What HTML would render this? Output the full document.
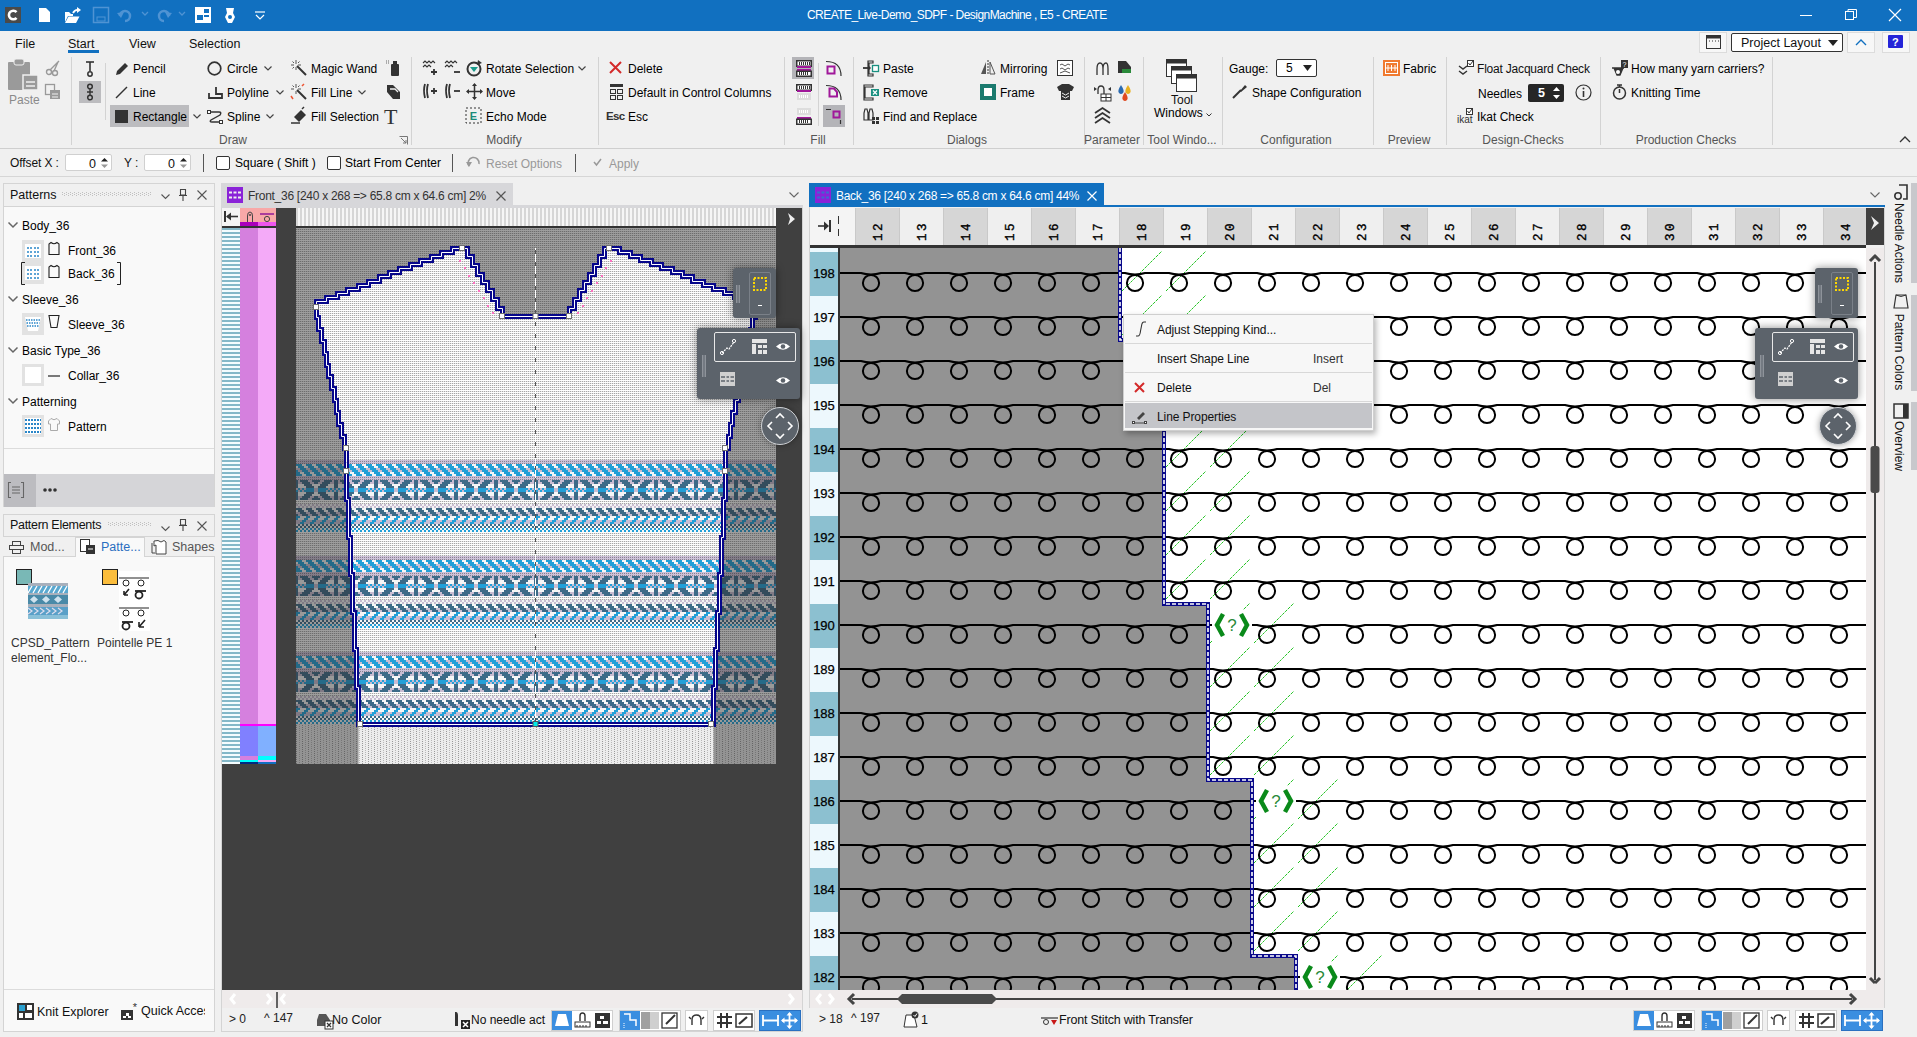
<!DOCTYPE html><html><head><meta charset="utf-8"><style>
html,body{margin:0;padding:0;width:1917px;height:1037px;overflow:hidden;background:#f0f0f0;font-family:"Liberation Sans",sans-serif;}
.t{position:absolute;white-space:nowrap;line-height:1;}
svg{overflow:visible}
</style></head><body><div style="position:relative;width:1917px;height:1037px;overflow:hidden"><div style="position:absolute;left:0px;top:0px;width:1917px;height:31px;background:#1170c0"></div>
<div style="position:absolute;left:5px;top:7px;width:16px;height:16px;background:#4a4a4a"></div>
<svg style="position:absolute;left:5px;top:7px;" width="16" height="16" viewBox="0 0 16 16"><path d="M11.5 5.2 A4.3 4.3 0 1 0 11.5 10.8" fill="none" stroke="#fff" stroke-width="2.6"/></svg>
<svg style="position:absolute;left:39px;top:8px;" width="12" height="15" viewBox="0 0 12 15"><path d="M0 0H7L11 4V14H0Z" fill="#fff"/></svg>
<svg style="position:absolute;left:64px;top:7px;" width="18" height="17" viewBox="0 0 18 17"><path d="M1 5H5L7 7H9V9H4L1 15Z" fill="#fff"/><path d="M4.5 9.5H15.5L12 16H1Z" fill="#fff"/><path d="M9 6Q11 2 15 3" stroke="#fff" stroke-width="1.8" fill="none"/><path d="M13 0L17 3L13 6Z" fill="#fff"/></svg>
<svg style="position:absolute;left:93px;top:7px;" width="16" height="16" viewBox="0 0 16 16"><rect x="0.5" y="0.5" width="15" height="15" fill="none" stroke="#4f93d3" stroke-width="1.5"/><rect x="4" y="10" width="8" height="4" fill="none" stroke="#4f93d3"/></svg>
<svg style="position:absolute;left:117px;top:8px;" width="18" height="14" viewBox="0 0 18 14"><path d="M3 8 A5 5 0 1 1 8 13" fill="none" stroke="#4f93d3" stroke-width="2.5"/><path d="M0 5L4 10L7 4Z" fill="#4f93d3"/></svg>
<svg style="position:absolute;left:141px;top:11px;" width="8" height="6" viewBox="0 0 8 6"><path d="M1 1L4 4L7 1" fill="none" stroke="#4f93d3" stroke-width="1.3"/></svg>
<svg style="position:absolute;left:154px;top:8px;" width="18" height="14" viewBox="0 0 18 14"><path d="M15 8 A5 5 0 1 0 10 13" fill="none" stroke="#4f93d3" stroke-width="2.5"/><path d="M18 5L14 10L11 4Z" fill="#4f93d3"/></svg>
<svg style="position:absolute;left:178px;top:11px;" width="8" height="6" viewBox="0 0 8 6"><path d="M1 1L4 4L7 1" fill="none" stroke="#4f93d3" stroke-width="1.3"/></svg>
<svg style="position:absolute;left:195px;top:7px;" width="16" height="16" viewBox="0 0 16 16"><rect width="16" height="16" fill="#fff"/><rect x="9" y="2" width="5" height="4" fill="#1170c0"/><rect x="2" y="8" width="6" height="5" fill="#1170c0"/><rect x="9" y="8" width="5" height="2" fill="#1170c0"/></svg>
<svg style="position:absolute;left:224px;top:7px;" width="12" height="17" viewBox="0 0 12 17"><path d="M2 1H10L9 6L11 10L8 16H4L1 10L3 6Z" fill="#fff"/><circle cx="6" cy="10" r="2" fill="#1170c0"/></svg>
<svg style="position:absolute;left:254px;top:11px;" width="12" height="10" viewBox="0 0 12 10"><path d="M1 1H11" stroke="#fff" stroke-width="1.2"/><path d="M2 4L6 8L10 4" fill="none" stroke="#fff" stroke-width="1.2"/></svg>
<div class="t" style="left:807px;top:9px;font-size:12px;color:#fff;letter-spacing:-0.55px">CREATE_Live-Demo_SDPF - DesignMachine , E5 - CREATE</div>
<div style="position:absolute;left:1800px;top:15px;width:12px;height:1px;background:#fff"></div>
<svg style="position:absolute;left:1845px;top:9px;" width="12" height="12" viewBox="0 0 12 12"><rect x="0.5" y="2.5" width="8" height="8" fill="none" stroke="#fff"/><path d="M3 2.5V0.5H11.5V8.5H9" fill="none" stroke="#fff"/></svg>
<svg style="position:absolute;left:1889px;top:9px;" width="12" height="12" viewBox="0 0 12 12"><path d="M0 0L12 12M12 0L0 12" stroke="#fff" stroke-width="1.2"/></svg>
<div style="position:absolute;left:0px;top:31px;width:1917px;height:117px;background:#f0f0f0"></div>
<div style="position:absolute;left:0px;top:148px;width:1917px;height:1px;background:#cfcfcf"></div>
<div class="t" style="left:15px;top:38px;font-size:12.5px;color:#111;">File</div>
<div class="t" style="left:68px;top:38px;font-size:12.5px;color:#111;">Start</div>
<div style="position:absolute;left:68px;top:50px;width:31px;height:3px;background:#1170c0"></div>
<div class="t" style="left:129px;top:38px;font-size:12.5px;color:#111;">View</div>
<div class="t" style="left:189px;top:38px;font-size:12.5px;color:#111;">Selection</div>
<div style="position:absolute;left:71px;top:57px;width:1px;height:88px;background:#d3d3d3"></div>
<div style="position:absolute;left:411px;top:57px;width:1px;height:88px;background:#d3d3d3"></div>
<div style="position:absolute;left:598px;top:57px;width:1px;height:88px;background:#d3d3d3"></div>
<div style="position:absolute;left:784px;top:57px;width:1px;height:88px;background:#d3d3d3"></div>
<div style="position:absolute;left:853px;top:57px;width:1px;height:88px;background:#d3d3d3"></div>
<div style="position:absolute;left:1084px;top:57px;width:1px;height:88px;background:#d3d3d3"></div>
<div style="position:absolute;left:1143px;top:57px;width:1px;height:88px;background:#d3d3d3"></div>
<div style="position:absolute;left:1222px;top:57px;width:1px;height:88px;background:#d3d3d3"></div>
<div style="position:absolute;left:1373px;top:57px;width:1px;height:88px;background:#d3d3d3"></div>
<div style="position:absolute;left:1446px;top:57px;width:1px;height:88px;background:#d3d3d3"></div>
<div style="position:absolute;left:1600px;top:57px;width:1px;height:88px;background:#d3d3d3"></div>
<div style="position:absolute;left:1772px;top:57px;width:1px;height:88px;background:#d3d3d3"></div>
<div style="position:absolute;left:105px;top:63px;width:1px;height:57px;background:#d3d3d3"></div>
<div style="position:absolute;left:818px;top:63px;width:1px;height:63px;background:#d3d3d3"></div>
<div class="t" style="left:133px;width:200px;text-align:center;top:134px;font-size:12px;color:#555">Draw</div>
<div class="t" style="left:404px;width:200px;text-align:center;top:134px;font-size:12px;color:#555">Modify</div>
<div class="t" style="left:718px;width:200px;text-align:center;top:134px;font-size:12px;color:#555">Fill</div>
<div class="t" style="left:867px;width:200px;text-align:center;top:134px;font-size:12px;color:#555">Dialogs</div>
<div class="t" style="left:1012px;width:200px;text-align:center;top:134px;font-size:12px;color:#555">Parameter</div>
<div class="t" style="left:1082px;width:200px;text-align:center;top:134px;font-size:12px;color:#555">Tool Windo...</div>
<div class="t" style="left:1196px;width:200px;text-align:center;top:134px;font-size:12px;color:#555">Configuration</div>
<div class="t" style="left:1309px;width:200px;text-align:center;top:134px;font-size:12px;color:#555">Preview</div>
<div class="t" style="left:1423px;width:200px;text-align:center;top:134px;font-size:12px;color:#555">Design-Checks</div>
<div class="t" style="left:1586px;width:200px;text-align:center;top:134px;font-size:12px;color:#555">Production Checks</div>
<svg style="position:absolute;left:399px;top:136px;" width="9" height="9" viewBox="0 0 9 9"><path d="M0.5 0.5H8.5V8.5" fill="none" stroke="#777"/><path d="M2 2L7 7M7 4V7H4" fill="none" stroke="#777"/></svg>
<svg style="position:absolute;left:1899px;top:136px;" width="12" height="7" viewBox="0 0 12 7"><path d="M1 6L6 1L11 6" fill="none" stroke="#333" stroke-width="1.3"/></svg>
<svg style="position:absolute;left:7px;top:58px;" width="34" height="34" viewBox="0 0 34 34"><rect x="1" y="4" width="22" height="28" rx="1" fill="#9a9a9a"/><rect x="7" y="1" width="10" height="6" rx="2" fill="#9a9a9a" stroke="#f0f0f0"/><rect x="16" y="17" width="15" height="15" fill="#9a9a9a" stroke="#f0f0f0" stroke-width="1.5"/><path d="M19 24H28M19 28H28" stroke="#f0f0f0" stroke-width="1.5"/></svg>
<div class="t" style="left:9px;top:94px;font-size:12px;color:#8a8a8a;">Paste</div>
<svg style="position:absolute;left:45px;top:60px;" width="16" height="16" viewBox="0 0 16 16"><circle cx="4" cy="12" r="2.5" fill="none" stroke="#999" stroke-width="1.4"/><circle cx="10" cy="13" r="2.5" fill="none" stroke="#999" stroke-width="1.4"/><path d="M5 10L14 1M9 11L13 2" stroke="#999" stroke-width="1.4"/></svg>
<svg style="position:absolute;left:45px;top:84px;" width="16" height="16" viewBox="0 0 16 16"><rect x="0.5" y="0.5" width="9" height="10" fill="none" stroke="#999" stroke-width="1.3"/><rect x="5" y="6" width="10" height="9" fill="#999"/><path d="M7 10H13M7 13H13" stroke="#f0f0f0"/></svg>
<svg style="position:absolute;left:84px;top:60px;" width="12" height="17" viewBox="0 0 12 17"><path d="M6 2V11" stroke="#333" stroke-width="1.6"/><path d="M2 2H10" stroke="#333" stroke-width="1.6"/><circle cx="6" cy="14" r="2.2" fill="none" stroke="#333" stroke-width="1.5"/></svg>
<div style="position:absolute;left:79px;top:81px;width:22px;height:22px;background:#bcbcbf"></div>
<svg style="position:absolute;left:84px;top:83px;" width="12" height="19" viewBox="0 0 12 19"><circle cx="6" cy="3.5" r="2.3" fill="none" stroke="#333" stroke-width="1.5"/><circle cx="6" cy="14.5" r="2.3" fill="none" stroke="#333" stroke-width="1.5"/><path d="M6 6V12M3 9H9" stroke="#333" stroke-width="1.4"/></svg>
<div style="position:absolute;left:110px;top:105px;width:79px;height:22px;background:#bcbcbf"></div>
<svg style="position:absolute;left:115px;top:62px;" width="14" height="14" viewBox="0 0 14 14"><path d="M1 13L2 9L10 1L13 4L5 12Z" fill="#333"/></svg>
<div class="t" style="left:133px;top:63px;font-size:12px;color:#000;">Pencil</div>
<svg style="position:absolute;left:115px;top:86px;" width="13" height="13" viewBox="0 0 13 13"><path d="M1 12L12 1" stroke="#333" stroke-width="1.5"/></svg>
<div class="t" style="left:133px;top:87px;font-size:12px;color:#000;">Line</div>
<div style="position:absolute;left:115px;top:110px;width:13px;height:13px;background:#333"></div>
<div class="t" style="left:133px;top:111px;font-size:12px;color:#000;">Rectangle</div>
<svg style="position:absolute;left:193px;top:114px;" width="8" height="5" viewBox="0 0 8 5"><path d="M0.5 0.5L4 4L7.5 0.5" fill="none" stroke="#444" stroke-width="1.2"/></svg>
<svg style="position:absolute;left:207px;top:61px;" width="15" height="15" viewBox="0 0 15 15"><circle cx="7.5" cy="7.5" r="6.3" fill="none" stroke="#333" stroke-width="1.7"/></svg>
<div class="t" style="left:227px;top:63px;font-size:12px;color:#000;">Circle</div>
<svg style="position:absolute;left:264px;top:66px;" width="8" height="5" viewBox="0 0 8 5"><path d="M0.5 0.5L4 4L7.5 0.5" fill="none" stroke="#444" stroke-width="1.2"/></svg>
<svg style="position:absolute;left:208px;top:85px;" width="15" height="14" viewBox="0 0 15 14"><path d="M1 8V13H14V9H8V2" fill="none" stroke="#333" stroke-width="1.8"/></svg>
<div class="t" style="left:227px;top:87px;font-size:12px;color:#000;">Polyline</div>
<svg style="position:absolute;left:276px;top:90px;" width="8" height="5" viewBox="0 0 8 5"><path d="M0.5 0.5L4 4L7.5 0.5" fill="none" stroke="#444" stroke-width="1.2"/></svg>
<svg style="position:absolute;left:207px;top:109px;" width="16" height="15" viewBox="0 0 16 15"><path d="M3 3H12Q15 3 13 6L4 11Q2 13 5 13H14" fill="none" stroke="#333" stroke-width="1.4"/><rect x="0.5" y="1.5" width="3" height="3" fill="#fff" stroke="#333"/><rect x="12.5" y="11.5" width="3" height="3" fill="#fff" stroke="#333"/></svg>
<div class="t" style="left:227px;top:111px;font-size:12px;color:#000;">Spline</div>
<svg style="position:absolute;left:266px;top:114px;" width="8" height="5" viewBox="0 0 8 5"><path d="M0.5 0.5L4 4L7.5 0.5" fill="none" stroke="#444" stroke-width="1.2"/></svg>
<svg style="position:absolute;left:291px;top:60px;" width="16" height="16" viewBox="0 0 16 16"><path d="M6 6L15 15" stroke="#333" stroke-width="2"/><path d="M5 0V4M5 7V10M0 5H3M7 5H10M1.5 1.5L3 3M8.5 1.5L7 3M1.5 8.5L3 7" stroke="#555" stroke-width="1"/></svg>
<div class="t" style="left:311px;top:63px;font-size:12px;color:#000;">Magic Wand</div>
<svg style="position:absolute;left:385px;top:60px;" width="17" height="17" viewBox="0 0 17 17"><rect x="6" y="4" width="8" height="12" rx="1" fill="#333"/><rect x="8" y="1" width="4" height="4" fill="#333"/><path d="M1 1H5M1 3H4" stroke="#666" stroke-dasharray="1 1"/></svg>
<svg style="position:absolute;left:291px;top:84px;" width="16" height="16" viewBox="0 0 16 16"><path d="M6 6L15 15" stroke="#333" stroke-width="2"/><path d="M5 0V4M5 7V10M0 5H3M7 5H10M1.5 1.5L3 3M8.5 1.5L7 3" stroke="#555" stroke-width="1"/><path d="M0 12L2 15M13 0L11 2" stroke="#e53" stroke-width="1.5"/></svg>
<div class="t" style="left:311px;top:87px;font-size:12px;color:#000;">Fill Line</div>
<svg style="position:absolute;left:358px;top:90px;" width="8" height="5" viewBox="0 0 8 5"><path d="M0.5 0.5L4 4L7.5 0.5" fill="none" stroke="#444" stroke-width="1.2"/></svg>
<svg style="position:absolute;left:385px;top:84px;" width="17" height="17" viewBox="0 0 17 17"><path d="M2 1H8L15 8V15H8L2 8Z" fill="#333"/><path d="M5 5H10L13 8" stroke="#f0f0f0" stroke-width="1.3" fill="none"/></svg>
<svg style="position:absolute;left:291px;top:107px;" width="17" height="17" viewBox="0 0 17 17"><path d="M3 10L10 3L15 8L8 15Z" fill="#333"/><path d="M0 16H9" stroke="#333" stroke-width="1.5"/><path d="M11 2L13 0" stroke="#333" stroke-width="1.5"/></svg>
<div class="t" style="left:311px;top:111px;font-size:12px;color:#000;">Fill Selection</div>
<div class="t" style="left:384px;top:106px;font-size:22px;color:#333;font-family:'Liberation Serif',serif">T</div>
<svg style="position:absolute;left:422px;top:59px;" width="17" height="17" viewBox="0 0 17 17"><path d="M1 4L3 2L5 4L7 2L9 4L11 2L13 4M1 8L3 6L5 8L7 6L9 8" fill="none" stroke="#333" stroke-width="1.1"/><path d="M12 10V16M9 13H15" stroke="#333" stroke-width="1.8"/></svg>
<svg style="position:absolute;left:444px;top:59px;" width="17" height="17" viewBox="0 0 17 17"><path d="M1 4L3 2L5 4L7 2L9 4L11 2L13 4M1 8L3 6L5 8L7 6L9 8" fill="none" stroke="#333" stroke-width="1.1"/><path d="M10 13H16" stroke="#333" stroke-width="1.8"/></svg>
<svg style="position:absolute;left:466px;top:60px;" width="17" height="17" viewBox="0 0 17 17"><circle cx="8" cy="9" r="6.5" fill="none" stroke="#333" stroke-width="2"/><path d="M4 7H12L8 12Z" fill="#1a9a8a"/><path d="M12 0L16 3L11 5Z" fill="#333"/></svg>
<div class="t" style="left:486px;top:63px;font-size:12px;color:#000;">Rotate Selection</div>
<svg style="position:absolute;left:578px;top:66px;" width="8" height="5" viewBox="0 0 8 5"><path d="M0.5 0.5L4 4L7.5 0.5" fill="none" stroke="#444" stroke-width="1.2"/></svg>
<svg style="position:absolute;left:422px;top:82px;" width="17" height="18" viewBox="0 0 17 18"><path d="M3 2Q1 8 3 16M6 2Q4 8 6 16" fill="none" stroke="#333" stroke-width="1.8"/><path d="M12 6V12M9 9H15" stroke="#333" stroke-width="1.8"/></svg>
<svg style="position:absolute;left:444px;top:82px;" width="17" height="18" viewBox="0 0 17 18"><path d="M3 2Q1 8 3 16M6 2Q4 8 6 16" fill="none" stroke="#333" stroke-width="1.8"/><path d="M10 9H16" stroke="#333" stroke-width="1.8"/></svg>
<svg style="position:absolute;left:466px;top:83px;" width="17" height="17" viewBox="0 0 17 17"><path d="M8.5 1V16M1 8.5H16" stroke="#333" stroke-width="1.5"/><path d="M8.5 0L6 3H11ZM8.5 17L6 14H11ZM0 8.5L3 6V11ZM17 8.5L14 6V11Z" fill="#333"/></svg>
<div class="t" style="left:486px;top:87px;font-size:12px;color:#000;">Move</div>
<svg style="position:absolute;left:465px;top:107px;" width="17" height="17" viewBox="0 0 17 17"><rect x="1" y="1" width="15" height="15" fill="none" stroke="#333" stroke-dasharray="2 2"/><text x="8.5" y="13" font-size="11" font-family="Liberation Sans" font-weight="bold" fill="#1a8a7a" text-anchor="middle">E</text></svg>
<div class="t" style="left:486px;top:111px;font-size:12px;color:#000;">Echo Mode</div>
<svg style="position:absolute;left:609px;top:61px;" width="13" height="13" viewBox="0 0 13 13"><path d="M1 1L12 12M12 1L1 12" stroke="#d42a2a" stroke-width="2"/></svg>
<div class="t" style="left:628px;top:63px;font-size:12px;color:#000;">Delete</div>
<svg style="position:absolute;left:610px;top:84px;" width="13" height="16" viewBox="0 0 13 16"><rect x="0" y="0" width="13" height="3" fill="#333"/><rect x="0.5" y="5.5" width="5" height="4" fill="none" stroke="#333"/><rect x="7.5" y="5.5" width="5" height="4" fill="none" stroke="#333"/><rect x="0.5" y="11.5" width="5" height="4" fill="none" stroke="#333"/><rect x="7.5" y="11.5" width="5" height="4" fill="none" stroke="#333"/></svg>
<div class="t" style="left:628px;top:87px;font-size:12px;color:#000;">Default in Control Columns</div>
<div class="t" style="left:606px;top:111px;font-size:11.5px;color:#333;font-weight:bold;letter-spacing:-0.6px">Esc</div>
<div class="t" style="left:628px;top:111px;font-size:12px;color:#000;">Esc</div>
<div style="position:absolute;left:792px;top:57px;width:22px;height:22px;background:#b4b4b8"></div>
<svg style="position:absolute;left:796px;top:60px;" width="16" height="8" viewBox="0 0 16 8"><rect x="0.75" y="0.75" width="14.5" height="5.5" fill="#fff" stroke="#333" stroke-width="1.5"/><path d="M3.5 2V5" stroke="#333"/><path d="M5.5 2V5" stroke="#333"/><path d="M7.5 2V5" stroke="#333"/><path d="M9.5 2V5" stroke="#333"/><path d="M11.5 2V5" stroke="#333"/><path d="M13.5 2V5" stroke="#333"/><rect x="1" y="6" width="14" height="2" fill="#a0189a"/></svg>
<svg style="position:absolute;left:796px;top:69px;" width="16" height="8" viewBox="0 0 16 8"><rect x="1" y="0" width="14" height="2" fill="#a0189a"/><rect x="0.75" y="2.25" width="14.5" height="5" fill="#fff" stroke="#333" stroke-width="1.5"/><path d="M3.5 3V6M5.5 3V6M7.5 3V6M9.5 3V6M11.5 3V6" stroke="#333"/></svg>
<svg style="position:absolute;left:796px;top:84px;" width="16" height="8" viewBox="0 0 16 8"><rect x="0.75" y="0.75" width="14.5" height="5.5" fill="#fff" stroke="#333" stroke-width="1.5"/><path d="M3.5 2V5" stroke="#333"/><path d="M5.5 2V5" stroke="#333"/><path d="M7.5 2V5" stroke="#333"/><path d="M9.5 2V5" stroke="#333"/><path d="M11.5 2V5" stroke="#333"/><path d="M13.5 2V5" stroke="#333"/><rect x="1" y="6" width="14" height="2" fill="#a0189a"/></svg>
<svg style="position:absolute;left:796px;top:93px;" width="16" height="7" viewBox="0 0 16 7"><rect x="1" y="0" width="14" height="7" fill="#ddd"/><path d="M3.5 2V5M5.5 2V5M7.5 2V5M9.5 2V5M11.5 2V5" stroke="#fff"/></svg>
<svg style="position:absolute;left:796px;top:108px;" width="16" height="7" viewBox="0 0 16 7"><rect x="1" y="0" width="14" height="7" fill="#ddd"/><path d="M3.5 2V5M5.5 2V5M7.5 2V5M9.5 2V5M11.5 2V5" stroke="#fff"/></svg>
<svg style="position:absolute;left:796px;top:117px;" width="16" height="8" viewBox="0 0 16 8"><rect x="1" y="0" width="14" height="2" fill="#a0189a"/><rect x="0.75" y="2.25" width="14.5" height="5" fill="#fff" stroke="#333" stroke-width="1.5"/><path d="M3.5 3V6M5.5 3V6M7.5 3V6M9.5 3V6M11.5 3V6" stroke="#333"/></svg>
<svg style="position:absolute;left:826px;top:61px;" width="16" height="16" viewBox="0 0 16 16"><path d="M0 0.5Q15 0.5 15 15" fill="none" stroke="#333" stroke-width="1.2"/><rect x="1.5" y="5.5" width="7" height="7" fill="none" stroke="#a0189a" stroke-width="2"/></svg>
<svg style="position:absolute;left:826px;top:85px;" width="16" height="16" viewBox="0 0 16 16"><path d="M0 0.5Q15 0.5 15 15" fill="none" stroke="#333" stroke-width="1.2"/><path d="M3.5 3.5H8L11 7V11.5H3.5Z" fill="none" stroke="#a0189a" stroke-width="2"/></svg>
<div style="position:absolute;left:823px;top:105px;width:22px;height:22px;background:#b4b4b8"></div>
<svg style="position:absolute;left:826px;top:108px;" width="16" height="16" viewBox="0 0 16 16"><path d="M0 1.5H5M14.5 12V16" stroke="#333" stroke-width="1.2"/><rect x="7.5" y="3.5" width="6" height="6" fill="none" stroke="#a0189a" stroke-width="2"/></svg>
<svg style="position:absolute;left:863px;top:60px;" width="17" height="17" viewBox="0 0 17 17"><path d="M5 1H10V3H6V14H10V16H5Z" fill="none" stroke="#333" stroke-width="1.2"/><path d="M0 8H6" stroke="#333" stroke-width="1.8"/><path d="M5 5L8 8L5 11Z" fill="#333"/><rect x="9.5" y="5.5" width="6" height="6" fill="#fff" stroke="#1a9080" stroke-width="1.3"/></svg>
<div class="t" style="left:883px;top:63px;font-size:12px;color:#000;">Paste</div>
<svg style="position:absolute;left:863px;top:84px;" width="17" height="17" viewBox="0 0 17 17"><path d="M5 1H10V3H2V14H10V16H1V1Z" fill="none" stroke="#333" stroke-width="1.2"/><rect x="8" y="5" width="8" height="7" fill="#1a9080"/><path d="M10 6.5L14 10.5M14 6.5L10 10.5" stroke="#fff" stroke-width="1.2"/></svg>
<div class="t" style="left:883px;top:87px;font-size:12px;color:#000;">Remove</div>
<svg style="position:absolute;left:863px;top:108px;" width="17" height="17" viewBox="0 0 17 17"><path d="M1 12V5L2 1H4L5 5V12ZM6 12V5L7 1H9L10 5V12Z" fill="none" stroke="#333" stroke-width="1.2"/><rect x="9" y="9" width="3" height="3" fill="#333"/><rect x="13" y="9" width="3" height="3" fill="#333"/><rect x="9" y="13" width="3" height="3" fill="#333"/><rect x="13" y="13" width="3" height="3" fill="#333"/></svg>
<div class="t" style="left:883px;top:111px;font-size:12px;color:#000;">Find and Replace</div>
<svg style="position:absolute;left:980px;top:60px;" width="16" height="15" viewBox="0 0 16 15"><path d="M6 2V14H1Z" fill="#555"/><path d="M8 0V15" stroke="#333" stroke-dasharray="2 1"/><path d="M10 2V14H15Z" fill="none" stroke="#555"/></svg>
<div class="t" style="left:1000px;top:63px;font-size:12px;color:#000;">Mirroring</div>
<svg style="position:absolute;left:1057px;top:60px;" width="16" height="16" viewBox="0 0 16 16"><rect x="0.5" y="0.5" width="15" height="15" fill="#fff" stroke="#333"/><path d="M3 5L5 4L8 6L11 4L13 5M3 9L5 8L8 10L11 8L13 9M3 13L8 11L13 13" fill="none" stroke="#555"/></svg>
<svg style="position:absolute;left:980px;top:84px;" width="16" height="16" viewBox="0 0 16 16"><rect x="0" y="0" width="16" height="16" fill="#1a7a6e"/><rect x="4" y="4" width="8" height="8" fill="#fff"/></svg>
<div class="t" style="left:1000px;top:87px;font-size:12px;color:#000;">Frame</div>
<svg style="position:absolute;left:1057px;top:84px;" width="17" height="16" viewBox="0 0 17 16"><path d="M0 3L5 0H12L17 3L15 7H13V16H4V7H2Z" fill="#333"/><path d="M5 9L8.5 11L12 9M5 12L8.5 14L12 12" stroke="#f0f0f0" fill="none"/></svg>
<svg style="position:absolute;left:1095px;top:60px;" width="15" height="16" viewBox="0 0 15 16"><path d="M2 15V9Q2 3 5 3Q8 3 8 9V15M8 15V9Q8 3 11 3Q13 3 13 9V15" fill="none" stroke="#333" stroke-width="1.3"/></svg>
<svg style="position:absolute;left:1116px;top:60px;" width="17" height="16" viewBox="0 0 17 16"><path d="M2 1H10L15 7V13H2Z" fill="#333"/><rect x="6" y="9" width="9" height="4" fill="#2a8a3a"/></svg>
<svg style="position:absolute;left:1094px;top:84px;" width="18" height="18" viewBox="0 0 18 18"><path d="M4 10V6Q4 2 7 2Q10 2 10 6V10" fill="none" stroke="#333" stroke-width="1.3"/><rect x="7" y="10" width="10" height="7" fill="#fff" stroke="#333"/><path d="M7 13.5H17M12 10V17" stroke="#333"/><path d="M0 3L3 5L0 7M17 3L14 5L17 7" fill="#333"/></svg>
<svg style="position:absolute;left:1116px;top:84px;" width="17" height="18" viewBox="0 0 17 18"><path d="M5 1Q1 7 3 9Q5 11 7 9Q9 7 5 1Z" fill="#2a6ab0"/><path d="M12 1Q8 7 10 9Q12 11 14 9Q16 7 12 1Z" fill="#e8b020"/><path d="M9 8Q5 14 7 16Q9 18 11 16Q13 14 9 8Z" fill="#e04a20"/></svg>
<svg style="position:absolute;left:1094px;top:107px;" width="17" height="17" viewBox="0 0 17 17"><path d="M1 6L8.5 1L16 6M1 11L8.5 6L16 11M1 16L8.5 11L16 16" fill="none" stroke="#333" stroke-width="1.8"/></svg>
<svg style="position:absolute;left:1166px;top:59px;" width="31" height="33" viewBox="0 0 31 33"><rect x="0.5" y="0.5" width="20" height="17" fill="#fff" stroke="#333"/><rect x="0.5" y="0.5" width="20" height="4" fill="#333"/><rect x="5.5" y="7.5" width="20" height="17" fill="#fff" stroke="#333"/><rect x="5.5" y="7.5" width="20" height="4" fill="#333"/><rect x="10.5" y="15.5" width="20" height="17" fill="#fff" stroke="#333"/><rect x="10.5" y="15.5" width="20" height="4" fill="#333"/></svg>
<div class="t" style="left:1132px;width:100px;text-align:center;top:94px;font-size:12px;color:#111">Tool</div>
<div class="t" style="left:1154px;top:107px;font-size:12px;color:#000;">Windows</div>
<svg style="position:absolute;left:1206px;top:113px;" width="6" height="4" viewBox="0 0 6 4"><path d="M0.5 0.5L3 3L5.5 0.5" fill="none" stroke="#333"/></svg>
<div class="t" style="left:1229px;top:63px;font-size:12px;color:#000;">Gauge:</div>
<div style="position:absolute;left:1276px;top:59px;width:41px;height:18px;background:#fff;border:1px solid #333;box-sizing:border-box;border-radius:2px"></div>
<div class="t" style="left:1286px;top:62px;font-size:12px;color:#000;">5</div>
<svg style="position:absolute;left:1303px;top:65px;" width="9" height="6" viewBox="0 0 9 6"><path d="M0 0H9L4.5 6Z" fill="#222"/></svg>
<svg style="position:absolute;left:1232px;top:84px;" width="15" height="15" viewBox="0 0 15 15"><path d="M1 14L9 6" stroke="#333" stroke-width="2"/><path d="M8 7L13 1L15 3L9 8Z" fill="#333"/></svg>
<div class="t" style="left:1252px;top:87px;font-size:12px;color:#000;">Shape Configuration</div>
<svg style="position:absolute;left:1383px;top:60px;" width="17" height="16" viewBox="0 0 17 16"><rect width="17" height="16" fill="#f07a30"/><rect x="2.5" y="2.5" width="12" height="11" fill="none" stroke="#fff"/><path d="M5 5V11M8.5 5V11M12 5V11M3 8H14" stroke="#fff" stroke-width="1"/></svg>
<div class="t" style="left:1403px;top:63px;font-size:12px;color:#000;">Fabric</div>
<svg style="position:absolute;left:1458px;top:60px;" width="16" height="16" viewBox="0 0 16 16"><path d="M1 6L5 9L9 6M1 11L5 14L9 11" fill="none" stroke="#333" stroke-width="1.4"/><rect x="9.5" y="0.5" width="6" height="6" fill="#fff" stroke="#333"/><path d="M10.5 3L12 5L15 1" fill="none" stroke="#333"/></svg>
<div class="t" style="left:1477px;top:63px;font-size:12px;color:#111;letter-spacing:-0.2px">Float Jacquard Check</div>
<div class="t" style="left:1478px;top:88px;font-size:12px;color:#000;">Needles</div>
<div style="position:absolute;left:1528px;top:84px;width:36px;height:18px;background:#262626;border-radius:2px"></div>
<div class="t" style="left:1538px;top:87px;font-size:12.5px;color:#fff;font-weight:bold">5</div>
<svg style="position:absolute;left:1553px;top:87px;" width="7" height="12" viewBox="0 0 7 12"><path d="M0 4L3.5 0L7 4ZM0 8L3.5 12L7 8Z" fill="#fff"/></svg>
<svg style="position:absolute;left:1575px;top:84px;" width="17" height="17" viewBox="0 0 17 17"><circle cx="8.5" cy="8.5" r="7.5" fill="none" stroke="#333" stroke-width="1.2"/><path d="M8.5 7V13" stroke="#333" stroke-width="1.6"/><circle cx="8.5" cy="4.5" r="1" fill="#333"/></svg>
<svg style="position:absolute;left:1457px;top:108px;" width="17" height="16" viewBox="0 0 17 16"><text x="0" y="15" font-size="10" font-family="Liberation Sans" fill="#333">ikat</text><rect x="9.5" y="0.5" width="6" height="6" fill="#fff" stroke="#333"/><path d="M10.5 3L12 5L15 1" fill="none" stroke="#333"/></svg>
<div class="t" style="left:1477px;top:111px;font-size:12px;color:#000;">Ikat Check</div>
<svg style="position:absolute;left:1612px;top:60px;" width="16" height="16" viewBox="0 0 16 16"><path d="M0 8H12M2 8L5 15H8L11 8" fill="#333" stroke="#333" stroke-width="1.3"/><rect x="9" y="0" width="7" height="8" fill="#333"/><text x="12.5" y="7" font-size="7" fill="#fff" text-anchor="middle" font-family="Liberation Sans">?</text><circle cx="6" cy="12" r="2" fill="#fff"/></svg>
<div class="t" style="left:1631px;top:63px;font-size:12px;color:#000;">How many yarn carriers?</div>
<svg style="position:absolute;left:1612px;top:84px;" width="15" height="16" viewBox="0 0 15 16"><circle cx="7.5" cy="9" r="6" fill="none" stroke="#333" stroke-width="1.5"/><path d="M5 1H10M7.5 1V3M7.5 9V5" stroke="#333" stroke-width="1.5"/></svg>
<div class="t" style="left:1631px;top:87px;font-size:12px;color:#000;">Knitting Time</div>
<div style="position:absolute;left:1699px;top:32px;width:28px;height:21px;background:#f7f7f7;border:1px solid #dcdcdc;box-sizing:border-box"></div>
<svg style="position:absolute;left:1706px;top:35px;" width="15" height="14" viewBox="0 0 15 14"><rect x="0.5" y="0.5" width="14" height="13" fill="none" stroke="#333"/><rect x="0.5" y="0.5" width="14" height="3" fill="#333"/><path d="M3 6H4M6 6H7M9 6H10M12 6H13" stroke="#333"/></svg>
<div style="position:absolute;left:1731px;top:33px;width:112px;height:19px;background:#fff;border:1px solid #333;box-sizing:border-box;border-radius:2px"></div>
<div class="t" style="left:1741px;top:37px;font-size:12.5px;color:#111;">Project Layout</div>
<svg style="position:absolute;left:1828px;top:40px;" width="10" height="6" viewBox="0 0 10 6"><path d="M0 0H10L5 6Z" fill="#222"/></svg>
<div style="position:absolute;left:1847px;top:32px;width:28px;height:21px;background:#f7f7f7;border:1px solid #dcdcdc;box-sizing:border-box"></div>
<svg style="position:absolute;left:1855px;top:39px;" width="12" height="7" viewBox="0 0 12 7"><path d="M1 6L6 1L11 6" fill="none" stroke="#1170c0" stroke-width="1.4"/></svg>
<div style="position:absolute;left:1882px;top:32px;width:28px;height:21px;background:#f7f7f7;border:1px solid #dcdcdc;box-sizing:border-box"></div>
<div style="position:absolute;left:1888px;top:35px;width:15px;height:13px;background:#2424d8;border-radius:1px"></div>
<div class="t" style="left:1892px;top:37px;font-size:11px;color:#fff;font-weight:bold">?</div>
<div style="position:absolute;left:0px;top:176px;width:1917px;height:1px;background:#d6d6d6"></div>
<div class="t" style="left:10px;top:157px;font-size:12px;color:#111;letter-spacing:-0.1px">Offset X :</div>
<div style="position:absolute;left:65px;top:154px;width:47px;height:17px;background:#fff;border:1px solid #d0d0d0;box-sizing:border-box;border-radius:2px"></div>
<div class="t" style="left:89px;top:158px;font-size:12.5px;color:#111;">0</div>
<svg style="position:absolute;left:101px;top:158px;" width="7" height="10" viewBox="0 0 7 10"><path d="M0 3.5L3.5 0L7 3.5Z" fill="#222"/><path d="M0 6.5L3.5 10L7 6.5Z" fill="#999"/></svg>
<div class="t" style="left:124px;top:157px;font-size:12px;color:#111;">Y :</div>
<div style="position:absolute;left:144px;top:154px;width:47px;height:17px;background:#fff;border:1px solid #d0d0d0;box-sizing:border-box;border-radius:2px"></div>
<div class="t" style="left:168px;top:158px;font-size:12.5px;color:#111;">0</div>
<svg style="position:absolute;left:180px;top:158px;" width="7" height="10" viewBox="0 0 7 10"><path d="M0 3.5L3.5 0L7 3.5Z" fill="#222"/><path d="M0 6.5L3.5 10L7 6.5Z" fill="#999"/></svg>
<div style="position:absolute;left:203px;top:154px;width:1px;height:18px;background:#555"></div>
<div style="position:absolute;left:216px;top:156px;width:14px;height:14px;background:#fff;border:1px solid #333;box-sizing:border-box;border-radius:2px"></div>
<div class="t" style="left:235px;top:157px;font-size:12px;color:#000;">Square ( Shift )</div>
<div style="position:absolute;left:327px;top:156px;width:14px;height:14px;background:#fff;border:1px solid #333;box-sizing:border-box;border-radius:2px"></div>
<div class="t" style="left:345px;top:157px;font-size:12px;color:#000;">Start From Center</div>
<div style="position:absolute;left:452px;top:154px;width:1px;height:18px;background:#555"></div>
<svg style="position:absolute;left:466px;top:156px;" width="16" height="12" viewBox="0 0 16 12"><path d="M3 10 A5.5 5.5 0 1 1 13 8" fill="none" stroke="#999" stroke-width="1.6"/><path d="M0 6L3 11L6 6Z" fill="#999"/></svg>
<div class="t" style="left:486px;top:158px;font-size:12px;color:#999;">Reset Options</div>
<div style="position:absolute;left:575px;top:154px;width:1px;height:18px;background:#555"></div>
<svg style="position:absolute;left:593px;top:158px;" width="9" height="8" viewBox="0 0 9 8"><path d="M1 4L3.5 7L8 1" fill="none" stroke="#999" stroke-width="1.5"/></svg>
<div class="t" style="left:609px;top:158px;font-size:12px;color:#999;">Apply</div>
<div style="position:absolute;left:3px;top:183px;width:212px;height:324px;background:#f9f9f9;border:1px solid #d4d4d4;box-sizing:border-box"></div>
<div style="position:absolute;left:3px;top:183px;width:212px;height:24px;background:#f0f0f0;border:1px solid #d4d4d4;box-sizing:border-box"></div>
<div class="t" style="left:10px;top:189px;font-size:12.5px;color:#111;">Patterns</div>
<svg style="position:absolute;left:62px;top:192px;" width="91" height="6" viewBox="0 0 91 6"><rect x="0" y="0" width="1" height="1" fill="#c0c0c0"/><rect x="0" y="2" width="1" height="1" fill="#c0c0c0"/><rect x="2" y="1" width="1" height="1" fill="#c0c0c0"/><rect x="2" y="3" width="1" height="1" fill="#c0c0c0"/><rect x="4" y="0" width="1" height="1" fill="#c0c0c0"/><rect x="4" y="2" width="1" height="1" fill="#c0c0c0"/><rect x="6" y="1" width="1" height="1" fill="#c0c0c0"/><rect x="6" y="3" width="1" height="1" fill="#c0c0c0"/><rect x="8" y="0" width="1" height="1" fill="#c0c0c0"/><rect x="8" y="2" width="1" height="1" fill="#c0c0c0"/><rect x="10" y="1" width="1" height="1" fill="#c0c0c0"/><rect x="10" y="3" width="1" height="1" fill="#c0c0c0"/><rect x="12" y="0" width="1" height="1" fill="#c0c0c0"/><rect x="12" y="2" width="1" height="1" fill="#c0c0c0"/><rect x="14" y="1" width="1" height="1" fill="#c0c0c0"/><rect x="14" y="3" width="1" height="1" fill="#c0c0c0"/><rect x="16" y="0" width="1" height="1" fill="#c0c0c0"/><rect x="16" y="2" width="1" height="1" fill="#c0c0c0"/><rect x="18" y="1" width="1" height="1" fill="#c0c0c0"/><rect x="18" y="3" width="1" height="1" fill="#c0c0c0"/><rect x="20" y="0" width="1" height="1" fill="#c0c0c0"/><rect x="20" y="2" width="1" height="1" fill="#c0c0c0"/><rect x="22" y="1" width="1" height="1" fill="#c0c0c0"/><rect x="22" y="3" width="1" height="1" fill="#c0c0c0"/><rect x="24" y="0" width="1" height="1" fill="#c0c0c0"/><rect x="24" y="2" width="1" height="1" fill="#c0c0c0"/><rect x="26" y="1" width="1" height="1" fill="#c0c0c0"/><rect x="26" y="3" width="1" height="1" fill="#c0c0c0"/><rect x="28" y="0" width="1" height="1" fill="#c0c0c0"/><rect x="28" y="2" width="1" height="1" fill="#c0c0c0"/><rect x="30" y="1" width="1" height="1" fill="#c0c0c0"/><rect x="30" y="3" width="1" height="1" fill="#c0c0c0"/><rect x="32" y="0" width="1" height="1" fill="#c0c0c0"/><rect x="32" y="2" width="1" height="1" fill="#c0c0c0"/><rect x="34" y="1" width="1" height="1" fill="#c0c0c0"/><rect x="34" y="3" width="1" height="1" fill="#c0c0c0"/><rect x="36" y="0" width="1" height="1" fill="#c0c0c0"/><rect x="36" y="2" width="1" height="1" fill="#c0c0c0"/><rect x="38" y="1" width="1" height="1" fill="#c0c0c0"/><rect x="38" y="3" width="1" height="1" fill="#c0c0c0"/><rect x="40" y="0" width="1" height="1" fill="#c0c0c0"/><rect x="40" y="2" width="1" height="1" fill="#c0c0c0"/><rect x="42" y="1" width="1" height="1" fill="#c0c0c0"/><rect x="42" y="3" width="1" height="1" fill="#c0c0c0"/><rect x="44" y="0" width="1" height="1" fill="#c0c0c0"/><rect x="44" y="2" width="1" height="1" fill="#c0c0c0"/><rect x="46" y="1" width="1" height="1" fill="#c0c0c0"/><rect x="46" y="3" width="1" height="1" fill="#c0c0c0"/><rect x="48" y="0" width="1" height="1" fill="#c0c0c0"/><rect x="48" y="2" width="1" height="1" fill="#c0c0c0"/><rect x="50" y="1" width="1" height="1" fill="#c0c0c0"/><rect x="50" y="3" width="1" height="1" fill="#c0c0c0"/><rect x="52" y="0" width="1" height="1" fill="#c0c0c0"/><rect x="52" y="2" width="1" height="1" fill="#c0c0c0"/><rect x="54" y="1" width="1" height="1" fill="#c0c0c0"/><rect x="54" y="3" width="1" height="1" fill="#c0c0c0"/><rect x="56" y="0" width="1" height="1" fill="#c0c0c0"/><rect x="56" y="2" width="1" height="1" fill="#c0c0c0"/><rect x="58" y="1" width="1" height="1" fill="#c0c0c0"/><rect x="58" y="3" width="1" height="1" fill="#c0c0c0"/><rect x="60" y="0" width="1" height="1" fill="#c0c0c0"/><rect x="60" y="2" width="1" height="1" fill="#c0c0c0"/><rect x="62" y="1" width="1" height="1" fill="#c0c0c0"/><rect x="62" y="3" width="1" height="1" fill="#c0c0c0"/><rect x="64" y="0" width="1" height="1" fill="#c0c0c0"/><rect x="64" y="2" width="1" height="1" fill="#c0c0c0"/><rect x="66" y="1" width="1" height="1" fill="#c0c0c0"/><rect x="66" y="3" width="1" height="1" fill="#c0c0c0"/><rect x="68" y="0" width="1" height="1" fill="#c0c0c0"/><rect x="68" y="2" width="1" height="1" fill="#c0c0c0"/><rect x="70" y="1" width="1" height="1" fill="#c0c0c0"/><rect x="70" y="3" width="1" height="1" fill="#c0c0c0"/><rect x="72" y="0" width="1" height="1" fill="#c0c0c0"/><rect x="72" y="2" width="1" height="1" fill="#c0c0c0"/><rect x="74" y="1" width="1" height="1" fill="#c0c0c0"/><rect x="74" y="3" width="1" height="1" fill="#c0c0c0"/><rect x="76" y="0" width="1" height="1" fill="#c0c0c0"/><rect x="76" y="2" width="1" height="1" fill="#c0c0c0"/><rect x="78" y="1" width="1" height="1" fill="#c0c0c0"/><rect x="78" y="3" width="1" height="1" fill="#c0c0c0"/><rect x="80" y="0" width="1" height="1" fill="#c0c0c0"/><rect x="80" y="2" width="1" height="1" fill="#c0c0c0"/><rect x="82" y="1" width="1" height="1" fill="#c0c0c0"/><rect x="82" y="3" width="1" height="1" fill="#c0c0c0"/><rect x="84" y="0" width="1" height="1" fill="#c0c0c0"/><rect x="84" y="2" width="1" height="1" fill="#c0c0c0"/><rect x="86" y="1" width="1" height="1" fill="#c0c0c0"/><rect x="86" y="3" width="1" height="1" fill="#c0c0c0"/><rect x="88" y="0" width="1" height="1" fill="#c0c0c0"/><rect x="88" y="2" width="1" height="1" fill="#c0c0c0"/></svg>
<svg style="position:absolute;left:161px;top:194px;" width="9" height="5" viewBox="0 0 9 5"><path d="M0.5 0.5L4.5 4.5L8.5 0.5" fill="none" stroke="#555" stroke-width="1.1"/></svg>
<svg style="position:absolute;left:179px;top:189px;" width="8" height="12" viewBox="0 0 8 12"><path d="M1.5 0.5H6.5V6H1.5ZM0 6.5H8M4 7V12" fill="none" stroke="#444" stroke-width="1.1"/></svg>
<svg style="position:absolute;left:197px;top:190px;" width="10" height="10" viewBox="0 0 10 10"><path d="M0.5 0.5L9.5 9.5M9.5 0.5L0.5 9.5" stroke="#555" stroke-width="1.1"/></svg>
<svg style="position:absolute;left:8px;top:222px;" width="10" height="6" viewBox="0 0 10 6"><path d="M0.5 0.5L5 5L9.5 0.5" fill="none" stroke="#666" stroke-width="1.5"/></svg>
<div class="t" style="left:22px;top:220px;font-size:12px;color:#000;">Body_36</div>
<div style="position:absolute;left:22px;top:240px;width:22px;height:22px;background:#e2e2e2"></div>
<svg style="position:absolute;left:25px;top:244px;" width="16" height="14" viewBox="0 0 16 14"><rect width="16" height="14" fill="#fff"/><path d="M2 4H7M9 4H14M2 8H7M9 8H14M2 12H7M9 12H14" stroke="#2a86c8" stroke-width="1.6" stroke-dasharray="2 1"/></svg>
<svg style="position:absolute;left:48px;top:242px;" width="12" height="13" viewBox="0 0 12 13"><path d="M3 0.5L1 2V12.5H11V2L9 0.5Q6 3 3 0.5Z" fill="none" stroke="#222" stroke-width="1.1"/></svg>
<div class="t" style="left:68px;top:245px;font-size:12px;color:#000;">Front_36</div>
<div style="position:absolute;left:22px;top:262px;width:22px;height:22px;background:#e2e2e2"></div>
<svg style="position:absolute;left:25px;top:266px;" width="16" height="14" viewBox="0 0 16 14"><rect width="16" height="14" fill="#fff"/><path d="M2 4H7M9 4H14M2 8H7M9 8H14M2 12H7M9 12H14" stroke="#2a86c8" stroke-width="1.6" stroke-dasharray="2 1"/></svg>
<svg style="position:absolute;left:48px;top:265px;" width="12" height="13" viewBox="0 0 12 13"><path d="M3 0.5L1 2V12.5H11V2L9 0.5Q6 3 3 0.5Z" fill="none" stroke="#222" stroke-width="1.1"/></svg>
<div class="t" style="left:68px;top:268px;font-size:12px;color:#000;">Back_36</div>
<svg style="position:absolute;left:21px;top:262px;" width="100" height="23" viewBox="0 0 100 23"><path d="M4 0.5H0.5V22.5H4M96 0.5H99.5V22.5H96" fill="none" stroke="#222"/></svg>
<svg style="position:absolute;left:8px;top:296px;" width="10" height="6" viewBox="0 0 10 6"><path d="M0.5 0.5L5 5L9.5 0.5" fill="none" stroke="#666" stroke-width="1.5"/></svg>
<div class="t" style="left:22px;top:294px;font-size:12px;color:#000;">Sleeve_36</div>
<div style="position:absolute;left:22px;top:313px;width:22px;height:22px;background:#e2e2e2"></div>
<svg style="position:absolute;left:25px;top:317px;" width="16" height="14" viewBox="0 0 16 14"><path d="M0 0H16L13 14H3Z" fill="#fff"/><path d="M1 3H15M1.5 6H14.5M2 9H14" stroke="#2a86c8" stroke-width="1.5" stroke-dasharray="1.5 1"/></svg>
<svg style="position:absolute;left:48px;top:315px;" width="12" height="13" viewBox="0 0 12 13"><path d="M1 0.5H11L9 12.5H3Z" fill="none" stroke="#222" stroke-width="1.1"/></svg>
<div class="t" style="left:68px;top:319px;font-size:12px;color:#000;">Sleeve_36</div>
<svg style="position:absolute;left:8px;top:347px;" width="10" height="6" viewBox="0 0 10 6"><path d="M0.5 0.5L5 5L9.5 0.5" fill="none" stroke="#666" stroke-width="1.5"/></svg>
<div class="t" style="left:22px;top:345px;font-size:12px;color:#000;">Basic Type_36</div>
<div style="position:absolute;left:22px;top:364px;width:22px;height:22px;background:#e2e2e2"></div>
<div style="position:absolute;left:25px;top:367px;width:16px;height:16px;background:#fff"></div>
<svg style="position:absolute;left:48px;top:370px;" width="12" height="12" viewBox="0 0 12 12"><path d="M0 6H12" stroke="#222" stroke-width="1.2"/></svg>
<div class="t" style="left:68px;top:370px;font-size:12px;color:#000;">Collar_36</div>
<svg style="position:absolute;left:8px;top:398px;" width="10" height="6" viewBox="0 0 10 6"><path d="M0.5 0.5L5 5L9.5 0.5" fill="none" stroke="#666" stroke-width="1.5"/></svg>
<div class="t" style="left:22px;top:396px;font-size:12px;color:#000;">Patterning</div>
<div style="position:absolute;left:22px;top:415px;width:22px;height:22px;background:#e2e2e2"></div>
<svg style="position:absolute;left:25px;top:418px;" width="16" height="16" viewBox="0 0 16 16"><rect width="16" height="16" fill="#fff"/><path d="M0 2H16M0 6H16M0 10H16M0 14H16" stroke="#2a86c8" stroke-width="2" stroke-dasharray="2 1"/></svg>
<svg style="position:absolute;left:48px;top:418px;" width="12" height="13" viewBox="0 0 12 13"><path d="M3 0.5L0.5 3V6H2.5V12.5H9.5V6H11.5V3L9 0.5Q6 3 3 0.5Z" fill="none" stroke="#aaa"/></svg>
<div class="t" style="left:68px;top:421px;font-size:12px;color:#000;">Pattern</div>
<div style="position:absolute;left:4px;top:448px;width:210px;height:1px;background:#dcdcdc"></div>
<div style="position:absolute;left:4px;top:474px;width:210px;height:33px;background:#d5d5d8"></div>
<div style="position:absolute;left:4px;top:474px;width:32px;height:33px;background:#bcbcc0"></div>
<svg style="position:absolute;left:8px;top:482px;" width="16" height="16" viewBox="0 0 16 16"><path d="M3 0.5H0.5V15.5H3M13 0.5H15.5V15.5H13M4 5H12M4 8H12M4 11H12" fill="none" stroke="#666" stroke-width="1.1"/></svg>
<svg style="position:absolute;left:43px;top:488px;" width="14" height="4" viewBox="0 0 14 4"><circle cx="2" cy="2" r="1.8" fill="#333"/><circle cx="7" cy="2" r="1.8" fill="#333"/><circle cx="12" cy="2" r="1.8" fill="#333"/></svg>
<div style="position:absolute;left:3px;top:514px;width:212px;height:518px;background:#f9f9f9;border:1px solid #d4d4d4;box-sizing:border-box"></div>
<div style="position:absolute;left:3px;top:514px;width:212px;height:23px;background:#f0f0f0;border:1px solid #d4d4d4;box-sizing:border-box"></div>
<div class="t" style="left:10px;top:519px;font-size:12.5px;color:#111;letter-spacing:-0.3px">Pattern Elements</div>
<svg style="position:absolute;left:108px;top:522px;" width="45" height="6" viewBox="0 0 45 6"><rect x="0" y="0" width="1" height="1" fill="#c0c0c0"/><rect x="0" y="2" width="1" height="1" fill="#c0c0c0"/><rect x="2" y="1" width="1" height="1" fill="#c0c0c0"/><rect x="2" y="3" width="1" height="1" fill="#c0c0c0"/><rect x="4" y="0" width="1" height="1" fill="#c0c0c0"/><rect x="4" y="2" width="1" height="1" fill="#c0c0c0"/><rect x="6" y="1" width="1" height="1" fill="#c0c0c0"/><rect x="6" y="3" width="1" height="1" fill="#c0c0c0"/><rect x="8" y="0" width="1" height="1" fill="#c0c0c0"/><rect x="8" y="2" width="1" height="1" fill="#c0c0c0"/><rect x="10" y="1" width="1" height="1" fill="#c0c0c0"/><rect x="10" y="3" width="1" height="1" fill="#c0c0c0"/><rect x="12" y="0" width="1" height="1" fill="#c0c0c0"/><rect x="12" y="2" width="1" height="1" fill="#c0c0c0"/><rect x="14" y="1" width="1" height="1" fill="#c0c0c0"/><rect x="14" y="3" width="1" height="1" fill="#c0c0c0"/><rect x="16" y="0" width="1" height="1" fill="#c0c0c0"/><rect x="16" y="2" width="1" height="1" fill="#c0c0c0"/><rect x="18" y="1" width="1" height="1" fill="#c0c0c0"/><rect x="18" y="3" width="1" height="1" fill="#c0c0c0"/><rect x="20" y="0" width="1" height="1" fill="#c0c0c0"/><rect x="20" y="2" width="1" height="1" fill="#c0c0c0"/><rect x="22" y="1" width="1" height="1" fill="#c0c0c0"/><rect x="22" y="3" width="1" height="1" fill="#c0c0c0"/><rect x="24" y="0" width="1" height="1" fill="#c0c0c0"/><rect x="24" y="2" width="1" height="1" fill="#c0c0c0"/><rect x="26" y="1" width="1" height="1" fill="#c0c0c0"/><rect x="26" y="3" width="1" height="1" fill="#c0c0c0"/><rect x="28" y="0" width="1" height="1" fill="#c0c0c0"/><rect x="28" y="2" width="1" height="1" fill="#c0c0c0"/><rect x="30" y="1" width="1" height="1" fill="#c0c0c0"/><rect x="30" y="3" width="1" height="1" fill="#c0c0c0"/><rect x="32" y="0" width="1" height="1" fill="#c0c0c0"/><rect x="32" y="2" width="1" height="1" fill="#c0c0c0"/><rect x="34" y="1" width="1" height="1" fill="#c0c0c0"/><rect x="34" y="3" width="1" height="1" fill="#c0c0c0"/><rect x="36" y="0" width="1" height="1" fill="#c0c0c0"/><rect x="36" y="2" width="1" height="1" fill="#c0c0c0"/><rect x="38" y="1" width="1" height="1" fill="#c0c0c0"/><rect x="38" y="3" width="1" height="1" fill="#c0c0c0"/><rect x="40" y="0" width="1" height="1" fill="#c0c0c0"/><rect x="40" y="2" width="1" height="1" fill="#c0c0c0"/><rect x="42" y="1" width="1" height="1" fill="#c0c0c0"/><rect x="42" y="3" width="1" height="1" fill="#c0c0c0"/></svg>
<svg style="position:absolute;left:161px;top:526px;" width="9" height="5" viewBox="0 0 9 5"><path d="M0.5 0.5L4.5 4.5L8.5 0.5" fill="none" stroke="#555" stroke-width="1.1"/></svg>
<svg style="position:absolute;left:179px;top:519px;" width="8" height="12" viewBox="0 0 8 12"><path d="M1.5 0.5H6.5V6H1.5ZM0 6.5H8M4 7V12" fill="none" stroke="#444" stroke-width="1.1"/></svg>
<svg style="position:absolute;left:197px;top:521px;" width="10" height="10" viewBox="0 0 10 10"><path d="M0.5 0.5L9.5 9.5M9.5 0.5L0.5 9.5" stroke="#555" stroke-width="1.1"/></svg>
<div style="position:absolute;left:3px;top:537px;width:212px;height:20px;background:#f0f0f0"></div>
<div style="position:absolute;left:3px;top:556px;width:212px;height:1px;background:#d4d4d4"></div>
<div style="position:absolute;left:75px;top:537px;width:70px;height:20px;background:#f9f9f9;border:1px solid #d4d4d4;border-bottom:none;box-sizing:border-box"></div>
<svg style="position:absolute;left:9px;top:541px;" width="15" height="13" viewBox="0 0 15 13"><rect x="3.5" y="0.5" width="8" height="4" fill="none" stroke="#444"/><rect x="0.5" y="4.5" width="14" height="4" fill="none" stroke="#444"/><rect x="3.5" y="8.5" width="8" height="4" fill="none" stroke="#444"/></svg>
<div class="t" style="left:30px;top:541px;font-size:12.5px;color:#555;">Mod...</div>
<svg style="position:absolute;left:80px;top:539px;" width="16" height="16" viewBox="0 0 16 16"><rect x="0.5" y="0.5" width="9" height="12" fill="#fff" stroke="#333"/><rect x="6" y="6" width="9" height="9" fill="#333"/><path d="M8 10H13" stroke="#fff"/></svg>
<div class="t" style="left:101px;top:541px;font-size:12.5px;color:#2a6ec0;">Patte...</div>
<svg style="position:absolute;left:152px;top:540px;" width="15" height="15" viewBox="0 0 15 15"><path d="M2 1L6 0.5L9 2L12 0.5L14 2V14H4V5L2 6Z" fill="#fff" stroke="#444"/><path d="M0 3V13H3" fill="none" stroke="#444"/></svg>
<div class="t" style="left:172px;top:541px;font-size:12.5px;color:#555;">Shapes</div>
<div style="position:absolute;left:16px;top:569px;width:16px;height:16px;background:#79b8b6;border:1px solid #222;box-sizing:border-box"></div>
<svg style="position:absolute;left:28px;top:583px;" width="40" height="36" viewBox="0 0 40 36"><rect width="40" height="36" fill="#a8b0bc"/><rect y="3" width="40" height="7" fill="#5aa8d0"/><path d="M0 10L4 3M5 10L9 3M10 10L14 3M15 10L19 3M20 10L24 3M25 10L29 3M30 10L34 3M35 10L39 3" stroke="#fff" stroke-width="1.3"/><rect y="12" width="40" height="9" fill="#4a8aa8"/><path d="M2 16.5L6 13L10 16.5L6 20ZM14 16.5L18 13L22 16.5L18 20ZM26 16.5L30 13L34 16.5L30 20Z" fill="#cfe2ee"/><rect y="24" width="40" height="8" fill="#5aa0c8"/><path d="M0 25L4 28L0 31M6 25L10 28L6 31M12 25L16 28L12 31M18 25L22 28L18 31M24 25L28 28L24 31M30 25L34 28L30 31" fill="none" stroke="#dde" stroke-width="1.2"/><rect y="32" width="40" height="4" fill="#8ac0d8"/></svg>
<div class="t" style="left:11px;top:637px;font-size:12px;color:#333;">CPSD_Pattern</div>
<div class="t" style="left:11px;top:652px;font-size:12px;color:#333;">element_Flo...</div>
<div style="position:absolute;left:102px;top:569px;width:16px;height:16px;background:#fbbd3c;border:1px solid #222;box-sizing:border-box"></div>
<svg style="position:absolute;left:119px;top:571px;" width="31" height="60" viewBox="0 0 31 60"><rect width="31" height="60" fill="#fff"/><path d="M0 7H30M0 37H30" stroke="#222"/><circle cx="7" cy="12" r="3" fill="none" stroke="#222"/><circle cx="22" cy="12" r="3" fill="none" stroke="#222"/><path d="M5 24L10 18M5 24H9M5 24V20" stroke="#222" stroke-width="1.6"/><circle cx="20" cy="24" r="3.5" fill="none" stroke="#222" stroke-width="1.8"/><path d="M16 20H27" stroke="#222" stroke-width="1.8"/><circle cx="7" cy="42" r="3" fill="none" stroke="#222"/><circle cx="22" cy="42" r="3" fill="none" stroke="#222"/><circle cx="7" cy="55" r="3.5" fill="none" stroke="#222" stroke-width="1.8"/><path d="M3 51H14" stroke="#222" stroke-width="1.8"/><path d="M20 56L26 49M20 56H25M20 56V51" stroke="#222" stroke-width="1.6"/></svg>
<div class="t" style="left:97px;top:637px;font-size:12px;color:#333;">Pointelle PE 1</div>
<div style="position:absolute;left:4px;top:989px;width:210px;height:1px;background:#dcdcdc"></div>
<svg style="position:absolute;left:17px;top:1003px;" width="17" height="17" viewBox="0 0 17 17"><rect width="17" height="17" fill="#333"/><rect x="2" y="2" width="6" height="6" fill="#2aa0d0"/><rect x="10" y="2" width="5" height="5" fill="#fff"/><rect x="2" y="10" width="4" height="5" fill="#fff"/><rect x="8" y="10" width="7" height="5" fill="#fff"/></svg>
<div class="t" style="left:37px;top:1006px;font-size:12.5px;color:#111;">Knit Explorer</div>
<svg style="position:absolute;left:121px;top:1003px;" width="17" height="17" viewBox="0 0 17 17"><rect x="0" y="7" width="12" height="10" fill="#333"/><rect x="5" y="10" width="3" height="3" fill="#fff"/><rect x="2" y="13" width="3" height="2" fill="#fff"/><rect x="7" y="13" width="3" height="2" fill="#fff"/><text x="14" y="8" font-size="11" font-family="Liberation Sans" fill="#333" text-anchor="middle">*</text></svg>
<div class="t" style="left:141px;top:1005px;font-size:12.5px;color:#111;width:64px;overflow:hidden">Quick Access</div>
<div style="position:absolute;left:221px;top:183px;width:292px;height:22px;background:#d7d7da"></div>
<div style="position:absolute;left:221px;top:205px;width:582px;height:3px;background:#d7d7da"></div>
<div style="position:absolute;left:227px;top:187px;width:16px;height:16px;background:#8a22d8"></div>
<svg style="position:absolute;left:227px;top:187px;" width="16" height="16" viewBox="0 0 16 16"><path d="M2 5.5H5M6.5 5.5H9.5M11 5.5H14M2 10.5H5M6.5 10.5H9.5M11 10.5H14" stroke="#eee" stroke-width="2"/></svg>
<div class="t" style="left:248px;top:190px;font-size:12px;color:#333;letter-spacing:-0.28px">Front_36 [240 x 268 =&gt; 65.8 cm x 64.6 cm] 2%</div>
<svg style="position:absolute;left:496px;top:191px;" width="10" height="10" viewBox="0 0 10 10"><path d="M0.5 0.5L9.5 9.5M9.5 0.5L0.5 9.5" stroke="#555" stroke-width="1.2"/></svg>
<svg style="position:absolute;left:789px;top:192px;" width="10" height="6" viewBox="0 0 10 6"><path d="M0.5 0.5L5 5L9.5 0.5" fill="none" stroke="#666" stroke-width="1.1"/></svg>
<div style="position:absolute;left:221px;top:208px;width:582px;height:782px;background:#404040"></div>
<div style="position:absolute;left:222px;top:208px;width:18px;height:18px;background:#f4f4f4"></div>
<svg style="position:absolute;left:224px;top:211px;" width="14" height="11" viewBox="0 0 14 11"><path d="M1 0V11" stroke="#333" stroke-width="2"/><path d="M3 5.5H14" stroke="#333" stroke-width="1.6"/><path d="M2 5.5L7 1.5V9.5Z" fill="#333"/></svg>
<div style="position:absolute;left:240px;top:208px;width:36px;height:14px;background:#f8a8a8"></div>
<div style="position:absolute;left:240px;top:222px;width:18px;height:4px;background:#aa00bb"></div>
<div style="position:absolute;left:258px;top:222px;width:18px;height:4px;background:#ee55ee"></div>
<svg style="position:absolute;left:244px;top:211px;" width="12" height="11" viewBox="0 0 12 11"><path d="M3.5 11V5Q3.5 1 6 1Q8.5 1 8.5 5V11" fill="none" stroke="#444" stroke-width="1"/><circle cx="6" cy="4" r="1" fill="#444"/></svg>
<svg style="position:absolute;left:259px;top:213px;" width="16" height="9" viewBox="0 0 16 9"><path d="M1 1H15" stroke="#992299" stroke-width="1.6"/><circle cx="8" cy="6" r="2.6" fill="none" stroke="#444"/></svg>
<div style="position:absolute;left:222px;top:226px;width:54px;height:2px;background:#333"></div>
<div style="position:absolute;left:222px;top:228px;width:18px;height:536px;background:repeating-linear-gradient(#84b8c8 0,#84b8c8 2px,#f4fcfe 2px,#f4fcfe 4px)"></div>
<div style="position:absolute;left:240px;top:228px;width:18px;height:496px;background:#d580de"></div>
<div style="position:absolute;left:258px;top:228px;width:18px;height:496px;background:#f4aaf8"></div>
<div style="position:absolute;left:240px;top:724px;width:36px;height:2px;background:#ff00ff"></div>
<div style="position:absolute;left:240px;top:726px;width:18px;height:30px;background:#8080ff"></div>
<div style="position:absolute;left:258px;top:726px;width:18px;height:30px;background:#80b0ff"></div>
<div style="position:absolute;left:240px;top:756px;width:18px;height:4px;background:#d580de"></div>
<div style="position:absolute;left:258px;top:756px;width:18px;height:4px;background:#00ffff"></div>
<div style="position:absolute;left:240px;top:760px;width:18px;height:2px;background:#00ffff"></div>
<div style="position:absolute;left:258px;top:760px;width:18px;height:2px;background:#f4aaf8"></div>
<div style="position:absolute;left:240px;top:762px;width:18px;height:2px;background:#002a80"></div>
<div style="position:absolute;left:258px;top:762px;width:18px;height:2px;background:#1070c0"></div>
<div style="position:absolute;left:296px;top:208px;width:480px;height:18px;background:repeating-linear-gradient(90deg,#d6d6d6 0,#d6d6d6 2px,#f6f6f6 2px,#f6f6f6 4px)"></div>
<div style="position:absolute;left:296px;top:226px;width:480px;height:2px;background:#333"></div>
<svg style="position:absolute;left:787px;top:213px;" width="9" height="12" viewBox="0 0 9 12"><path d="M1 0L8 6L1 12L3 6Z" fill="#eee"/></svg>
<svg style="position:absolute;left:296px;top:228px;overflow:hidden" width="480" height="536" viewBox="0 0 480 536"><defs><pattern id="plain" width="2" height="2" patternUnits="userSpaceOnUse"><rect width="2" height="2" fill="#fdfdfd"/><rect y="1" width="1" height="1" fill="#a6a6a6"/><rect x="1" y="1" width="1" height="1" fill="#e6e6e6"/></pattern><pattern id="bg" width="2" height="2" patternUnits="userSpaceOnUse"><rect width="2" height="2" fill="#8e8e8e"/><rect y="1" width="1" height="1" fill="#6e6e6e"/><rect x="1" width="1" height="1" fill="#9c9c9c"/></pattern><pattern id="pstr" width="20" height="12" patternUnits="userSpaceOnUse"><rect x="0" y="0" width="6" height="2" fill="#22a0d8"/><rect x="6" y="0" width="4" height="2" fill="#f6f6f6"/><rect x="10" y="0" width="6" height="2" fill="#22a0d8"/><rect x="16" y="0" width="4" height="2" fill="#f6f6f6"/><rect x="0" y="2" width="2" height="2" fill="#f6f6f6"/><rect x="2" y="2" width="6" height="2" fill="#22a0d8"/><rect x="8" y="2" width="4" height="2" fill="#f6f6f6"/><rect x="12" y="2" width="6" height="2" fill="#22a0d8"/><rect x="18" y="2" width="2" height="2" fill="#f6f6f6"/><rect x="0" y="4" width="4" height="2" fill="#c9bdd2"/><rect x="4" y="4" width="6" height="2" fill="#22a0d8"/><rect x="10" y="4" width="4" height="2" fill="#c9bdd2"/><rect x="14" y="4" width="6" height="2" fill="#22a0d8"/><rect x="0" y="6" width="2" height="2" fill="#22a0d8"/><rect x="2" y="6" width="4" height="2" fill="#c9bdd2"/><rect x="6" y="6" width="6" height="2" fill="#22a0d8"/><rect x="12" y="6" width="4" height="2" fill="#c9bdd2"/><rect x="16" y="6" width="4" height="2" fill="#22a0d8"/><rect x="0" y="8" width="4" height="2" fill="#22a0d8"/><rect x="4" y="8" width="4" height="2" fill="#f6f6f6"/><rect x="8" y="8" width="6" height="2" fill="#22a0d8"/><rect x="14" y="8" width="4" height="2" fill="#f6f6f6"/><rect x="18" y="8" width="2" height="2" fill="#22a0d8"/><rect x="0" y="10" width="6" height="2" fill="#22a0d8"/><rect x="6" y="10" width="4" height="2" fill="#f6f6f6"/><rect x="10" y="10" width="6" height="2" fill="#22a0d8"/><rect x="16" y="10" width="4" height="2" fill="#f6f6f6"/></pattern><pattern id="pmot" width="40" height="20" patternUnits="userSpaceOnUse" x="4"><rect x="0" y="0" width="8" height="2" fill="#3d6b88"/><rect x="8" y="0" width="4" height="2" fill="#c9bdd2"/><rect x="12" y="0" width="8" height="2" fill="#3d6b88"/><rect x="20" y="0" width="4" height="2" fill="#c9bdd2"/><rect x="24" y="0" width="8" height="2" fill="#3d6b88"/><rect x="32" y="0" width="2" height="2" fill="#c9bdd2"/><rect x="34" y="0" width="4" height="2" fill="#3d6b88"/><rect x="38" y="0" width="2" height="2" fill="#c9bdd2"/><rect x="0" y="2" width="2" height="2" fill="#c9bdd2"/><rect x="2" y="2" width="8" height="2" fill="#3d6b88"/><rect x="10" y="2" width="4" height="2" fill="#c9bdd2"/><rect x="14" y="2" width="4" height="2" fill="#3d6b88"/><rect x="18" y="2" width="4" height="2" fill="#c9bdd2"/><rect x="22" y="2" width="8" height="2" fill="#3d6b88"/><rect x="30" y="2" width="4" height="2" fill="#c9bdd2"/><rect x="34" y="2" width="4" height="2" fill="#3d6b88"/><rect x="38" y="2" width="2" height="2" fill="#c9bdd2"/><rect x="0" y="4" width="4" height="2" fill="#f6f6f6"/><rect x="4" y="4" width="8" height="2" fill="#3d6b88"/><rect x="12" y="4" width="8" height="2" fill="#f6f6f6"/><rect x="20" y="4" width="8" height="2" fill="#3d6b88"/><rect x="28" y="4" width="6" height="2" fill="#f6f6f6"/><rect x="34" y="4" width="4" height="2" fill="#3d6b88"/><rect x="38" y="4" width="2" height="2" fill="#f6f6f6"/><rect x="0" y="6" width="6" height="2" fill="#f6f6f6"/><rect x="6" y="6" width="8" height="2" fill="#3d6b88"/><rect x="14" y="6" width="4" height="2" fill="#f6f6f6"/><rect x="18" y="6" width="8" height="2" fill="#3d6b88"/><rect x="26" y="6" width="8" height="2" fill="#f6f6f6"/><rect x="34" y="6" width="4" height="2" fill="#3d6b88"/><rect x="38" y="6" width="2" height="2" fill="#f6f6f6"/><rect x="0" y="8" width="2" height="2" fill="#c9bdd2"/><rect x="2" y="8" width="2" height="2" fill="#22a0d8"/><rect x="4" y="8" width="2" height="2" fill="#c9bdd2"/><rect x="6" y="8" width="8" height="2" fill="#22a0d8"/><rect x="14" y="8" width="4" height="2" fill="#c9bdd2"/><rect x="18" y="8" width="10" height="2" fill="#22a0d8"/><rect x="28" y="8" width="2" height="2" fill="#c9bdd2"/><rect x="30" y="8" width="2" height="2" fill="#22a0d8"/><rect x="32" y="8" width="2" height="2" fill="#c9bdd2"/><rect x="34" y="8" width="2" height="2" fill="#22a0d8"/><rect x="36" y="8" width="2" height="2" fill="#c9bdd2"/><rect x="38" y="8" width="2" height="2" fill="#22a0d8"/><rect x="0" y="10" width="2" height="2" fill="#22a0d8"/><rect x="2" y="10" width="2" height="2" fill="#c9bdd2"/><rect x="4" y="10" width="10" height="2" fill="#22a0d8"/><rect x="14" y="10" width="4" height="2" fill="#c9bdd2"/><rect x="18" y="10" width="8" height="2" fill="#22a0d8"/><rect x="26" y="10" width="2" height="2" fill="#c9bdd2"/><rect x="28" y="10" width="2" height="2" fill="#22a0d8"/><rect x="30" y="10" width="2" height="2" fill="#c9bdd2"/><rect x="32" y="10" width="2" height="2" fill="#22a0d8"/><rect x="34" y="10" width="2" height="2" fill="#c9bdd2"/><rect x="36" y="10" width="2" height="2" fill="#22a0d8"/><rect x="38" y="10" width="2" height="2" fill="#c9bdd2"/><rect x="0" y="12" width="6" height="2" fill="#f6f6f6"/><rect x="6" y="12" width="8" height="2" fill="#3d6b88"/><rect x="14" y="12" width="4" height="2" fill="#f6f6f6"/><rect x="18" y="12" width="8" height="2" fill="#3d6b88"/><rect x="26" y="12" width="8" height="2" fill="#f6f6f6"/><rect x="34" y="12" width="4" height="2" fill="#3d6b88"/><rect x="38" y="12" width="2" height="2" fill="#f6f6f6"/><rect x="0" y="14" width="4" height="2" fill="#f6f6f6"/><rect x="4" y="14" width="8" height="2" fill="#3d6b88"/><rect x="12" y="14" width="8" height="2" fill="#f6f6f6"/><rect x="20" y="14" width="8" height="2" fill="#3d6b88"/><rect x="28" y="14" width="6" height="2" fill="#f6f6f6"/><rect x="34" y="14" width="4" height="2" fill="#3d6b88"/><rect x="38" y="14" width="2" height="2" fill="#f6f6f6"/><rect x="0" y="16" width="2" height="2" fill="#c9bdd2"/><rect x="2" y="16" width="8" height="2" fill="#3d6b88"/><rect x="10" y="16" width="4" height="2" fill="#c9bdd2"/><rect x="14" y="16" width="4" height="2" fill="#3d6b88"/><rect x="18" y="16" width="4" height="2" fill="#c9bdd2"/><rect x="22" y="16" width="8" height="2" fill="#3d6b88"/><rect x="30" y="16" width="4" height="2" fill="#c9bdd2"/><rect x="34" y="16" width="4" height="2" fill="#3d6b88"/><rect x="38" y="16" width="2" height="2" fill="#c9bdd2"/><rect x="0" y="18" width="8" height="2" fill="#3d6b88"/><rect x="8" y="18" width="4" height="2" fill="#c9bdd2"/><rect x="12" y="18" width="8" height="2" fill="#3d6b88"/><rect x="20" y="18" width="4" height="2" fill="#c9bdd2"/><rect x="24" y="18" width="8" height="2" fill="#3d6b88"/><rect x="32" y="18" width="2" height="2" fill="#c9bdd2"/><rect x="34" y="18" width="4" height="2" fill="#3d6b88"/><rect x="38" y="18" width="2" height="2" fill="#c9bdd2"/></pattern><pattern id="pchev" width="20" height="16" patternUnits="userSpaceOnUse"><rect x="0" y="0" width="6" height="2" fill="#3d6b88"/><rect x="6" y="0" width="4" height="2" fill="#f6f6f6"/><rect x="10" y="0" width="6" height="2" fill="#3d6b88"/><rect x="16" y="0" width="4" height="2" fill="#f6f6f6"/><rect x="0" y="2" width="2" height="2" fill="#f6f6f6"/><rect x="2" y="2" width="6" height="2" fill="#3d6b88"/><rect x="8" y="2" width="4" height="2" fill="#f6f6f6"/><rect x="12" y="2" width="6" height="2" fill="#3d6b88"/><rect x="18" y="2" width="2" height="2" fill="#f6f6f6"/><rect x="0" y="4" width="4" height="2" fill="#c9bdd2"/><rect x="4" y="4" width="6" height="2" fill="#3d6b88"/><rect x="10" y="4" width="4" height="2" fill="#c9bdd2"/><rect x="14" y="4" width="6" height="2" fill="#3d6b88"/><rect x="0" y="6" width="2" height="2" fill="#3d6b88"/><rect x="2" y="6" width="4" height="2" fill="#c9bdd2"/><rect x="6" y="6" width="6" height="2" fill="#3d6b88"/><rect x="12" y="6" width="4" height="2" fill="#c9bdd2"/><rect x="16" y="6" width="4" height="2" fill="#3d6b88"/><rect x="0" y="8" width="4" height="2" fill="#22a0d8"/><rect x="4" y="8" width="6" height="2" fill="#f6f6f6"/><rect x="10" y="8" width="4" height="2" fill="#22a0d8"/><rect x="14" y="8" width="6" height="2" fill="#f6f6f6"/><rect x="0" y="10" width="2" height="2" fill="#22a0d8"/><rect x="2" y="10" width="6" height="2" fill="#f6f6f6"/><rect x="8" y="10" width="4" height="2" fill="#22a0d8"/><rect x="12" y="10" width="6" height="2" fill="#f6f6f6"/><rect x="18" y="10" width="2" height="2" fill="#22a0d8"/><rect x="0" y="12" width="6" height="2" fill="#c9bdd2"/><rect x="6" y="12" width="4" height="2" fill="#22a0d8"/><rect x="10" y="12" width="6" height="2" fill="#c9bdd2"/><rect x="16" y="12" width="4" height="2" fill="#22a0d8"/><rect x="0" y="14" width="4" height="2" fill="#c9bdd2"/><rect x="4" y="14" width="4" height="2" fill="#22a0d8"/><rect x="8" y="14" width="6" height="2" fill="#c9bdd2"/><rect x="14" y="14" width="4" height="2" fill="#22a0d8"/><rect x="18" y="14" width="2" height="2" fill="#c9bdd2"/></pattern><pattern id="pchk" width="4" height="8" patternUnits="userSpaceOnUse"><rect x="0" y="0" width="2" height="2" fill="#f6f6f6"/><rect x="2" y="0" width="2" height="2" fill="#3d6b88"/><rect x="0" y="2" width="2" height="2" fill="#3d6b88"/><rect x="2" y="2" width="2" height="2" fill="#f6f6f6"/><rect x="0" y="4" width="2" height="2" fill="#f6f6f6"/><rect x="2" y="4" width="2" height="2" fill="#22a0d8"/><rect x="0" y="6" width="2" height="2" fill="#22a0d8"/><rect x="2" y="6" width="2" height="2" fill="#f6f6f6"/></pattern><pattern id="prib" width="6" height="2" patternUnits="userSpaceOnUse"><rect width="6" height="2" fill="#ececec"/><rect x="0" y="1" width="1" height="1" fill="#9a9a9a"/><rect x="3" y="0" width="1" height="1" fill="#b8b8b8"/></pattern><pattern id="pdots" width="4" height="4" patternUnits="userSpaceOnUse"><rect width="4" height="4" fill="#f4f4f4"/><rect width="2" height="2" fill="#c9bdd2"/><rect x="2" y="2" width="2" height="2" fill="#c9bdd2"/></pattern><pattern id="plil" width="2" height="2" patternUnits="userSpaceOnUse"><rect width="2" height="2" fill="#cdc1d8"/><rect y="1" width="1" height="1" fill="#8a8290"/></pattern></defs><rect width="480" height="536" fill="url(#plain)"/><rect y="232" width="480" height="4" fill="url(#plil)"/><g transform="translate(0,236)"><rect width="480" height="12" fill="url(#pstr)"/></g><rect y="248" width="480" height="4" fill="url(#plil)"/><g transform="translate(0,252)"><rect width="480" height="20" fill="url(#pmot)"/></g><g transform="translate(0,276)"><rect width="480" height="4" fill="url(#pdots)"/></g><g transform="translate(0,280)"><rect width="480" height="16" fill="url(#pchev)"/></g><g transform="translate(0,296)"><rect width="480" height="8" fill="url(#pchk)"/></g><rect y="328" width="480" height="4" fill="url(#plil)"/><g transform="translate(0,332)"><rect width="480" height="12" fill="url(#pstr)"/></g><rect y="344" width="480" height="4" fill="url(#plil)"/><g transform="translate(0,348)"><rect width="480" height="20" fill="url(#pmot)"/></g><g transform="translate(0,372)"><rect width="480" height="4" fill="url(#pdots)"/></g><g transform="translate(0,376)"><rect width="480" height="16" fill="url(#pchev)"/></g><g transform="translate(0,392)"><rect width="480" height="8" fill="url(#pchk)"/></g><rect y="424" width="480" height="4" fill="url(#plil)"/><g transform="translate(0,428)"><rect width="480" height="12" fill="url(#pstr)"/></g><rect y="440" width="480" height="4" fill="url(#plil)"/><g transform="translate(0,444)"><rect width="480" height="20" fill="url(#pmot)"/></g><g transform="translate(0,468)"><rect width="480" height="4" fill="url(#pdots)"/></g><g transform="translate(0,472)"><rect width="480" height="16" fill="url(#pchev)"/></g><g transform="translate(0,488)"><rect width="480" height="8" fill="url(#pchk)"/></g><rect y="496" width="480" height="40" fill="url(#prib)"/><path fill-rule="evenodd" d="M0 0H480V536H0Z M240.5,88.5 L206.5,88.5 L206.5,80.5 L201.5,80.5 L201.5,71.5 L196.5,71.5 L196.5,62.5 L191.5,62.5 L191.5,54.5 L186.5,54.5 L186.5,46.5 L181.5,46.5 L181.5,37.5 L176.5,37.5 L176.5,28.5 L171.5,28.5 L171.5,20.5 L166.5,20.5 L156.5,20.5 L156.5,24.5 L145.5,24.5 L145.5,28.5 L135.5,28.5 L135.5,32.5 L124.5,32.5 L124.5,36.5 L114.5,36.5 L114.5,40.5 L103.5,40.5 L103.5,44.5 L93.5,44.5 L93.5,48.5 L83.5,48.5 L83.5,53.5 L72.5,53.5 L72.5,57.5 L62.5,57.5 L62.5,61.5 L51.5,61.5 L51.5,65.5 L41.5,65.5 L41.5,69.5 L30.5,69.5 L30.5,73.5 L20.5,73.5 L20.5,77.5 L20.5,89.5 L22.5,89.5 L22.5,101.5 L25.5,101.5 L25.5,113.5 L28.5,113.5 L28.5,125.5 L30.5,125.5 L30.5,137.5 L32.5,137.5 L32.5,148.5 L35.5,148.5 L35.5,160.5 L38.5,160.5 L38.5,172.5 L40.5,172.5 L40.5,184.5 L42.5,184.5 L42.5,196.5 L45.5,196.5 L45.5,208.5 L48.5,208.5 L48.5,220.5 L50.5,220.5 L50.5,234.5 L50.5,271.5 L52.5,271.5 L52.5,309.5 L54.5,309.5 L54.5,346.5 L56.5,346.5 L56.5,384.5 L58.5,384.5 L58.5,421.5 L60.5,421.5 L60.5,459.5 L62.5,459.5 L62.5,536.0 L64.5,536.0 L64.5,536.0 L415.5,536.0 L415.5,536.0 L417.5,536.0 L417.5,459.5 L419.5,459.5 L419.5,421.5 L421.5,421.5 L421.5,384.5 L423.5,384.5 L423.5,346.5 L425.5,346.5 L425.5,309.5 L427.5,309.5 L427.5,271.5 L429.5,271.5 L429.5,234.5 L429.5,220.5 L432.5,220.5 L432.5,208.5 L434.5,208.5 L434.5,196.5 L436.5,196.5 L436.5,184.5 L439.5,184.5 L439.5,172.5 L442.5,172.5 L442.5,160.5 L444.5,160.5 L444.5,148.5 L446.5,148.5 L446.5,137.5 L449.5,137.5 L449.5,125.5 L452.5,125.5 L452.5,113.5 L454.5,113.5 L454.5,101.5 L456.5,101.5 L456.5,89.5 L459.5,89.5 L459.5,77.5 L459.5,73.5 L449.5,73.5 L449.5,69.5 L438.5,69.5 L438.5,65.5 L428.5,65.5 L428.5,61.5 L417.5,61.5 L417.5,57.5 L407.5,57.5 L407.5,53.5 L396.5,53.5 L396.5,48.5 L386.5,48.5 L386.5,44.5 L376.5,44.5 L376.5,40.5 L365.5,40.5 L365.5,36.5 L355.5,36.5 L355.5,32.5 L344.5,32.5 L344.5,28.5 L334.5,28.5 L334.5,24.5 L323.5,24.5 L323.5,20.5 L313.5,20.5 L308.5,20.5 L308.5,28.5 L303.5,28.5 L303.5,37.5 L298.5,37.5 L298.5,46.5 L293.5,46.5 L293.5,54.5 L288.5,54.5 L288.5,62.5 L283.5,62.5 L283.5,71.5 L278.5,71.5 L278.5,80.5 L273.5,80.5 L273.5,88.5 L240.5,88.5Z" fill="#282828" fill-opacity="0.45"/><polygon points="240.5,88.5 206.5,88.5 206.5,80.5 201.5,80.5 201.5,71.5 196.5,71.5 196.5,62.5 191.5,62.5 191.5,54.5 186.5,54.5 186.5,46.5 181.5,46.5 181.5,37.5 176.5,37.5 176.5,28.5 171.5,28.5 171.5,20.5 166.5,20.5 156.5,20.5 156.5,24.5 145.5,24.5 145.5,28.5 135.5,28.5 135.5,32.5 124.5,32.5 124.5,36.5 114.5,36.5 114.5,40.5 103.5,40.5 103.5,44.5 93.5,44.5 93.5,48.5 83.5,48.5 83.5,53.5 72.5,53.5 72.5,57.5 62.5,57.5 62.5,61.5 51.5,61.5 51.5,65.5 41.5,65.5 41.5,69.5 30.5,69.5 30.5,73.5 20.5,73.5 20.5,77.5 20.5,89.5 22.5,89.5 22.5,101.5 25.5,101.5 25.5,113.5 28.5,113.5 28.5,125.5 30.5,125.5 30.5,137.5 32.5,137.5 32.5,148.5 35.5,148.5 35.5,160.5 38.5,160.5 38.5,172.5 40.5,172.5 40.5,184.5 42.5,184.5 42.5,196.5 45.5,196.5 45.5,208.5 48.5,208.5 48.5,220.5 50.5,220.5 50.5,234.5 50.5,271.5 52.5,271.5 52.5,309.5 54.5,309.5 54.5,346.5 56.5,346.5 56.5,384.5 58.5,384.5 58.5,421.5 60.5,421.5 60.5,459.5 62.5,459.5 62.5,496.5 64.5,496.5 64.5,496.5 415.5,496.5 415.5,496.5 417.5,496.5 417.5,459.5 419.5,459.5 419.5,421.5 421.5,421.5 421.5,384.5 423.5,384.5 423.5,346.5 425.5,346.5 425.5,309.5 427.5,309.5 427.5,271.5 429.5,271.5 429.5,234.5 429.5,220.5 432.5,220.5 432.5,208.5 434.5,208.5 434.5,196.5 436.5,196.5 436.5,184.5 439.5,184.5 439.5,172.5 442.5,172.5 442.5,160.5 444.5,160.5 444.5,148.5 446.5,148.5 446.5,137.5 449.5,137.5 449.5,125.5 452.5,125.5 452.5,113.5 454.5,113.5 454.5,101.5 456.5,101.5 456.5,89.5 459.5,89.5 459.5,77.5 459.5,73.5 449.5,73.5 449.5,69.5 438.5,69.5 438.5,65.5 428.5,65.5 428.5,61.5 417.5,61.5 417.5,57.5 407.5,57.5 407.5,53.5 396.5,53.5 396.5,48.5 386.5,48.5 386.5,44.5 376.5,44.5 376.5,40.5 365.5,40.5 365.5,36.5 355.5,36.5 355.5,32.5 344.5,32.5 344.5,28.5 334.5,28.5 334.5,24.5 323.5,24.5 323.5,20.5 313.5,20.5 308.5,20.5 308.5,28.5 303.5,28.5 303.5,37.5 298.5,37.5 298.5,46.5 293.5,46.5 293.5,54.5 288.5,54.5 288.5,62.5 283.5,62.5 283.5,71.5 278.5,71.5 278.5,80.5 273.5,80.5 273.5,88.5 240.5,88.5" fill="none" stroke="#06068a" stroke-width="5"/><polygon points="240.5,88.5 206.5,88.5 206.5,80.5 201.5,80.5 201.5,71.5 196.5,71.5 196.5,62.5 191.5,62.5 191.5,54.5 186.5,54.5 186.5,46.5 181.5,46.5 181.5,37.5 176.5,37.5 176.5,28.5 171.5,28.5 171.5,20.5 166.5,20.5 156.5,20.5 156.5,24.5 145.5,24.5 145.5,28.5 135.5,28.5 135.5,32.5 124.5,32.5 124.5,36.5 114.5,36.5 114.5,40.5 103.5,40.5 103.5,44.5 93.5,44.5 93.5,48.5 83.5,48.5 83.5,53.5 72.5,53.5 72.5,57.5 62.5,57.5 62.5,61.5 51.5,61.5 51.5,65.5 41.5,65.5 41.5,69.5 30.5,69.5 30.5,73.5 20.5,73.5 20.5,77.5 20.5,89.5 22.5,89.5 22.5,101.5 25.5,101.5 25.5,113.5 28.5,113.5 28.5,125.5 30.5,125.5 30.5,137.5 32.5,137.5 32.5,148.5 35.5,148.5 35.5,160.5 38.5,160.5 38.5,172.5 40.5,172.5 40.5,184.5 42.5,184.5 42.5,196.5 45.5,196.5 45.5,208.5 48.5,208.5 48.5,220.5 50.5,220.5 50.5,234.5 50.5,271.5 52.5,271.5 52.5,309.5 54.5,309.5 54.5,346.5 56.5,346.5 56.5,384.5 58.5,384.5 58.5,421.5 60.5,421.5 60.5,459.5 62.5,459.5 62.5,496.5 64.5,496.5 64.5,496.5 415.5,496.5 415.5,496.5 417.5,496.5 417.5,459.5 419.5,459.5 419.5,421.5 421.5,421.5 421.5,384.5 423.5,384.5 423.5,346.5 425.5,346.5 425.5,309.5 427.5,309.5 427.5,271.5 429.5,271.5 429.5,234.5 429.5,220.5 432.5,220.5 432.5,208.5 434.5,208.5 434.5,196.5 436.5,196.5 436.5,184.5 439.5,184.5 439.5,172.5 442.5,172.5 442.5,160.5 444.5,160.5 444.5,148.5 446.5,148.5 446.5,137.5 449.5,137.5 449.5,125.5 452.5,125.5 452.5,113.5 454.5,113.5 454.5,101.5 456.5,101.5 456.5,89.5 459.5,89.5 459.5,77.5 459.5,73.5 449.5,73.5 449.5,69.5 438.5,69.5 438.5,65.5 428.5,65.5 428.5,61.5 417.5,61.5 417.5,57.5 407.5,57.5 407.5,53.5 396.5,53.5 396.5,48.5 386.5,48.5 386.5,44.5 376.5,44.5 376.5,40.5 365.5,40.5 365.5,36.5 355.5,36.5 355.5,32.5 344.5,32.5 344.5,28.5 334.5,28.5 334.5,24.5 323.5,24.5 323.5,20.5 313.5,20.5 308.5,20.5 308.5,28.5 303.5,28.5 303.5,37.5 298.5,37.5 298.5,46.5 293.5,46.5 293.5,54.5 288.5,54.5 288.5,62.5 283.5,62.5 283.5,71.5 278.5,71.5 278.5,80.5 273.5,80.5 273.5,88.5 240.5,88.5" fill="none" stroke="#ffffff" stroke-width="1"/><path d="M239.5 20V496" stroke="#ffffff" stroke-width="1"/><path d="M239.5 22V496" stroke="#555" stroke-width="1" stroke-dasharray="4 8"/><rect x="17" y="76" width="6" height="6" fill="#707070"/><rect x="18" y="77" width="4" height="4" fill="#fff"/><rect x="163" y="17" width="6" height="6" fill="#707070"/><rect x="164" y="18" width="4" height="4" fill="#fff"/><rect x="203" y="85" width="6" height="6" fill="#707070"/><rect x="204" y="86" width="4" height="4" fill="#fff"/><rect x="236.5" y="85" width="6" height="6" fill="#707070"/><rect x="237.5" y="86" width="4" height="4" fill="#fff"/><rect x="270" y="85" width="6" height="6" fill="#707070"/><rect x="271" y="86" width="4" height="4" fill="#fff"/><rect x="310" y="17" width="6" height="6" fill="#707070"/><rect x="311" y="18" width="4" height="4" fill="#fff"/><rect x="47" y="217" width="6" height="6" fill="#707070"/><rect x="48" y="218" width="4" height="4" fill="#fff"/><rect x="47" y="240" width="6" height="6" fill="#707070"/><rect x="48" y="241" width="4" height="4" fill="#fff"/><rect x="61" y="493" width="6" height="6" fill="#707070"/><rect x="62" y="494" width="4" height="4" fill="#fff"/><rect x="426" y="217" width="6" height="6" fill="#707070"/><rect x="427" y="218" width="4" height="4" fill="#fff"/><rect x="426" y="240" width="6" height="6" fill="#707070"/><rect x="427" y="241" width="4" height="4" fill="#fff"/><rect x="412" y="493" width="6" height="6" fill="#707070"/><rect x="413" y="494" width="4" height="4" fill="#fff"/><rect x="236.5" y="493" width="6" height="6" fill="#555"/><rect x="237.5" y="494" width="4" height="4" fill="#00e8e8"/><rect x="163" y="32" width="2" height="2" fill="#ff70c0"/><rect x="314.0" y="32" width="2" height="2" fill="#ff70c0"/><rect x="168" y="39" width="2" height="2" fill="#ff70c0"/><rect x="309.0" y="39" width="2" height="2" fill="#ff70c0"/><rect x="172" y="47" width="2" height="2" fill="#ff70c0"/><rect x="305.0" y="47" width="2" height="2" fill="#ff70c0"/><rect x="177" y="54" width="2" height="2" fill="#ff70c0"/><rect x="300.0" y="54" width="2" height="2" fill="#ff70c0"/><rect x="182" y="62" width="2" height="2" fill="#ff70c0"/><rect x="295.0" y="62" width="2" height="2" fill="#ff70c0"/><rect x="187" y="69" width="2" height="2" fill="#ff70c0"/><rect x="290.0" y="69" width="2" height="2" fill="#ff70c0"/><rect x="191" y="77" width="2" height="2" fill="#ff70c0"/><rect x="286.0" y="77" width="2" height="2" fill="#ff70c0"/><rect x="196" y="84" width="2" height="2" fill="#ff70c0"/><rect x="281.0" y="84" width="2" height="2" fill="#ff70c0"/></svg>
<div style="position:absolute;left:809px;top:183px;width:295px;height:22px;background:#1170c0"></div>
<div style="position:absolute;left:809px;top:205px;width:1076px;height:2px;background:#1170c0"></div>
<div style="position:absolute;left:815px;top:187px;width:16px;height:16px;background:#8a22d8"></div>
<svg style="position:absolute;left:815px;top:187px;" width="16" height="16" viewBox="0 0 16 16"><path d="M2 5.5H5M6.5 5.5H9.5M11 5.5H14M2 10.5H5M6.5 10.5H9.5M11 10.5H14" stroke="#3a6ad0" stroke-width="2"/></svg>
<div class="t" style="left:836px;top:190px;font-size:12px;color:#fff;letter-spacing:-0.28px">Back_36 [240 x 268 =&gt; 65.8 cm x 64.6 cm] 44%</div>
<svg style="position:absolute;left:1087px;top:191px;" width="10" height="10" viewBox="0 0 10 10"><path d="M0.5 0.5L9.5 9.5M9.5 0.5L0.5 9.5" stroke="#fff" stroke-width="1.2"/></svg>
<svg style="position:absolute;left:1870px;top:192px;" width="10" height="6" viewBox="0 0 10 6"><path d="M0.5 0.5L5 5L9.5 0.5" fill="none" stroke="#666" stroke-width="1.1"/></svg>
<div style="position:absolute;left:809px;top:207px;width:1076px;height:824px;background:#f0f0f0;border-left:1px solid #d4d4d4;border-right:1px solid #d4d4d4;border-bottom:1px solid #d4d4d4;box-sizing:border-box"></div>
<div style="position:absolute;left:810px;top:208px;width:1056px;height:37px;background:#efefef"></div>
<div style="position:absolute;left:810px;top:208px;width:45px;height:37px;background:#f4f4f4"></div>
<svg style="position:absolute;left:818px;top:220px;" width="14" height="12" viewBox="0 0 14 12"><path d="M0 6H10" stroke="#333" stroke-width="1.6"/><path d="M11 6L6 1.5V10.5Z" fill="#333"/><path d="M12 0V12" stroke="#333" stroke-width="2"/></svg>
<div style="position:absolute;left:838px;top:216px;width:1px;height:8px;background:#333"></div>
<div style="position:absolute;left:838px;top:229px;width:1px;height:7px;background:#333"></div>
<div style="position:absolute;left:855px;top:208px;width:44px;height:37px;background:#d6d6d6;border-left:1px solid #c9c9c9;box-sizing:border-box"></div>
<div class="t" style="left:859px;top:224px;width:40px;height:14px;text-align:center;font-family:'Liberation Mono',monospace;font-size:12.5px;letter-spacing:2.5px;color:#000;-webkit-text-stroke:0.35px #000;transform:rotate(-90deg);line-height:14px">12</div>
<div style="position:absolute;left:899px;top:208px;width:44px;height:37px;background:#efefef;border-left:1px solid #c9c9c9;box-sizing:border-box"></div>
<div class="t" style="left:903px;top:224px;width:40px;height:14px;text-align:center;font-family:'Liberation Mono',monospace;font-size:12.5px;letter-spacing:2.5px;color:#000;-webkit-text-stroke:0.35px #000;transform:rotate(-90deg);line-height:14px">13</div>
<div style="position:absolute;left:943px;top:208px;width:44px;height:37px;background:#d6d6d6;border-left:1px solid #c9c9c9;box-sizing:border-box"></div>
<div class="t" style="left:947px;top:224px;width:40px;height:14px;text-align:center;font-family:'Liberation Mono',monospace;font-size:12.5px;letter-spacing:2.5px;color:#000;-webkit-text-stroke:0.35px #000;transform:rotate(-90deg);line-height:14px">14</div>
<div style="position:absolute;left:987px;top:208px;width:44px;height:37px;background:#efefef;border-left:1px solid #c9c9c9;box-sizing:border-box"></div>
<div class="t" style="left:991px;top:224px;width:40px;height:14px;text-align:center;font-family:'Liberation Mono',monospace;font-size:12.5px;letter-spacing:2.5px;color:#000;-webkit-text-stroke:0.35px #000;transform:rotate(-90deg);line-height:14px">15</div>
<div style="position:absolute;left:1031px;top:208px;width:44px;height:37px;background:#d6d6d6;border-left:1px solid #c9c9c9;box-sizing:border-box"></div>
<div class="t" style="left:1035px;top:224px;width:40px;height:14px;text-align:center;font-family:'Liberation Mono',monospace;font-size:12.5px;letter-spacing:2.5px;color:#000;-webkit-text-stroke:0.35px #000;transform:rotate(-90deg);line-height:14px">16</div>
<div style="position:absolute;left:1075px;top:208px;width:44px;height:37px;background:#efefef;border-left:1px solid #c9c9c9;box-sizing:border-box"></div>
<div class="t" style="left:1079px;top:224px;width:40px;height:14px;text-align:center;font-family:'Liberation Mono',monospace;font-size:12.5px;letter-spacing:2.5px;color:#000;-webkit-text-stroke:0.35px #000;transform:rotate(-90deg);line-height:14px">17</div>
<div style="position:absolute;left:1119px;top:208px;width:44px;height:37px;background:#d6d6d6;border-left:1px solid #c9c9c9;box-sizing:border-box"></div>
<div class="t" style="left:1123px;top:224px;width:40px;height:14px;text-align:center;font-family:'Liberation Mono',monospace;font-size:12.5px;letter-spacing:2.5px;color:#000;-webkit-text-stroke:0.35px #000;transform:rotate(-90deg);line-height:14px">18</div>
<div style="position:absolute;left:1163px;top:208px;width:44px;height:37px;background:#efefef;border-left:1px solid #c9c9c9;box-sizing:border-box"></div>
<div class="t" style="left:1167px;top:224px;width:40px;height:14px;text-align:center;font-family:'Liberation Mono',monospace;font-size:12.5px;letter-spacing:2.5px;color:#000;-webkit-text-stroke:0.35px #000;transform:rotate(-90deg);line-height:14px">19</div>
<div style="position:absolute;left:1207px;top:208px;width:44px;height:37px;background:#d6d6d6;border-left:1px solid #c9c9c9;box-sizing:border-box"></div>
<div class="t" style="left:1211px;top:224px;width:40px;height:14px;text-align:center;font-family:'Liberation Mono',monospace;font-size:12.5px;letter-spacing:2.5px;color:#000;-webkit-text-stroke:0.35px #000;transform:rotate(-90deg);line-height:14px">20</div>
<div style="position:absolute;left:1251px;top:208px;width:44px;height:37px;background:#efefef;border-left:1px solid #c9c9c9;box-sizing:border-box"></div>
<div class="t" style="left:1255px;top:224px;width:40px;height:14px;text-align:center;font-family:'Liberation Mono',monospace;font-size:12.5px;letter-spacing:2.5px;color:#000;-webkit-text-stroke:0.35px #000;transform:rotate(-90deg);line-height:14px">21</div>
<div style="position:absolute;left:1295px;top:208px;width:44px;height:37px;background:#d6d6d6;border-left:1px solid #c9c9c9;box-sizing:border-box"></div>
<div class="t" style="left:1299px;top:224px;width:40px;height:14px;text-align:center;font-family:'Liberation Mono',monospace;font-size:12.5px;letter-spacing:2.5px;color:#000;-webkit-text-stroke:0.35px #000;transform:rotate(-90deg);line-height:14px">22</div>
<div style="position:absolute;left:1339px;top:208px;width:44px;height:37px;background:#efefef;border-left:1px solid #c9c9c9;box-sizing:border-box"></div>
<div class="t" style="left:1343px;top:224px;width:40px;height:14px;text-align:center;font-family:'Liberation Mono',monospace;font-size:12.5px;letter-spacing:2.5px;color:#000;-webkit-text-stroke:0.35px #000;transform:rotate(-90deg);line-height:14px">23</div>
<div style="position:absolute;left:1383px;top:208px;width:44px;height:37px;background:#d6d6d6;border-left:1px solid #c9c9c9;box-sizing:border-box"></div>
<div class="t" style="left:1387px;top:224px;width:40px;height:14px;text-align:center;font-family:'Liberation Mono',monospace;font-size:12.5px;letter-spacing:2.5px;color:#000;-webkit-text-stroke:0.35px #000;transform:rotate(-90deg);line-height:14px">24</div>
<div style="position:absolute;left:1427px;top:208px;width:44px;height:37px;background:#efefef;border-left:1px solid #c9c9c9;box-sizing:border-box"></div>
<div class="t" style="left:1431px;top:224px;width:40px;height:14px;text-align:center;font-family:'Liberation Mono',monospace;font-size:12.5px;letter-spacing:2.5px;color:#000;-webkit-text-stroke:0.35px #000;transform:rotate(-90deg);line-height:14px">25</div>
<div style="position:absolute;left:1471px;top:208px;width:44px;height:37px;background:#d6d6d6;border-left:1px solid #c9c9c9;box-sizing:border-box"></div>
<div class="t" style="left:1475px;top:224px;width:40px;height:14px;text-align:center;font-family:'Liberation Mono',monospace;font-size:12.5px;letter-spacing:2.5px;color:#000;-webkit-text-stroke:0.35px #000;transform:rotate(-90deg);line-height:14px">26</div>
<div style="position:absolute;left:1515px;top:208px;width:44px;height:37px;background:#efefef;border-left:1px solid #c9c9c9;box-sizing:border-box"></div>
<div class="t" style="left:1519px;top:224px;width:40px;height:14px;text-align:center;font-family:'Liberation Mono',monospace;font-size:12.5px;letter-spacing:2.5px;color:#000;-webkit-text-stroke:0.35px #000;transform:rotate(-90deg);line-height:14px">27</div>
<div style="position:absolute;left:1559px;top:208px;width:44px;height:37px;background:#d6d6d6;border-left:1px solid #c9c9c9;box-sizing:border-box"></div>
<div class="t" style="left:1563px;top:224px;width:40px;height:14px;text-align:center;font-family:'Liberation Mono',monospace;font-size:12.5px;letter-spacing:2.5px;color:#000;-webkit-text-stroke:0.35px #000;transform:rotate(-90deg);line-height:14px">28</div>
<div style="position:absolute;left:1603px;top:208px;width:44px;height:37px;background:#efefef;border-left:1px solid #c9c9c9;box-sizing:border-box"></div>
<div class="t" style="left:1607px;top:224px;width:40px;height:14px;text-align:center;font-family:'Liberation Mono',monospace;font-size:12.5px;letter-spacing:2.5px;color:#000;-webkit-text-stroke:0.35px #000;transform:rotate(-90deg);line-height:14px">29</div>
<div style="position:absolute;left:1647px;top:208px;width:44px;height:37px;background:#d6d6d6;border-left:1px solid #c9c9c9;box-sizing:border-box"></div>
<div class="t" style="left:1651px;top:224px;width:40px;height:14px;text-align:center;font-family:'Liberation Mono',monospace;font-size:12.5px;letter-spacing:2.5px;color:#000;-webkit-text-stroke:0.35px #000;transform:rotate(-90deg);line-height:14px">30</div>
<div style="position:absolute;left:1691px;top:208px;width:44px;height:37px;background:#efefef;border-left:1px solid #c9c9c9;box-sizing:border-box"></div>
<div class="t" style="left:1695px;top:224px;width:40px;height:14px;text-align:center;font-family:'Liberation Mono',monospace;font-size:12.5px;letter-spacing:2.5px;color:#000;-webkit-text-stroke:0.35px #000;transform:rotate(-90deg);line-height:14px">31</div>
<div style="position:absolute;left:1735px;top:208px;width:44px;height:37px;background:#d6d6d6;border-left:1px solid #c9c9c9;box-sizing:border-box"></div>
<div class="t" style="left:1739px;top:224px;width:40px;height:14px;text-align:center;font-family:'Liberation Mono',monospace;font-size:12.5px;letter-spacing:2.5px;color:#000;-webkit-text-stroke:0.35px #000;transform:rotate(-90deg);line-height:14px">32</div>
<div style="position:absolute;left:1779px;top:208px;width:44px;height:37px;background:#efefef;border-left:1px solid #c9c9c9;box-sizing:border-box"></div>
<div class="t" style="left:1783px;top:224px;width:40px;height:14px;text-align:center;font-family:'Liberation Mono',monospace;font-size:12.5px;letter-spacing:2.5px;color:#000;-webkit-text-stroke:0.35px #000;transform:rotate(-90deg);line-height:14px">33</div>
<div style="position:absolute;left:1823px;top:208px;width:44px;height:37px;background:#d6d6d6;border-left:1px solid #c9c9c9;box-sizing:border-box"></div>
<div class="t" style="left:1827px;top:224px;width:40px;height:14px;text-align:center;font-family:'Liberation Mono',monospace;font-size:12.5px;letter-spacing:2.5px;color:#000;-webkit-text-stroke:0.35px #000;transform:rotate(-90deg);line-height:14px">34</div>
<div style="position:absolute;left:810px;top:245px;width:1056px;height:3px;background:#333"></div>
<div style="position:absolute;left:810px;top:248px;width:28px;height:742px;background:#edf8fd"></div>
<div style="position:absolute;left:810px;top:252px;width:28px;height:44px;background:#8cc0d0"></div>
<div class="t" style="left:810px;width:28px;text-align:center;top:267px;font-size:13px;color:#000;-webkit-text-stroke:0.25px #000;line-height:14px">198</div>
<div class="t" style="left:810px;width:28px;text-align:center;top:311px;font-size:13px;color:#000;-webkit-text-stroke:0.25px #000;line-height:14px">197</div>
<div style="position:absolute;left:810px;top:340px;width:28px;height:44px;background:#8cc0d0"></div>
<div class="t" style="left:810px;width:28px;text-align:center;top:355px;font-size:13px;color:#000;-webkit-text-stroke:0.25px #000;line-height:14px">196</div>
<div class="t" style="left:810px;width:28px;text-align:center;top:399px;font-size:13px;color:#000;-webkit-text-stroke:0.25px #000;line-height:14px">195</div>
<div style="position:absolute;left:810px;top:428px;width:28px;height:44px;background:#8cc0d0"></div>
<div class="t" style="left:810px;width:28px;text-align:center;top:443px;font-size:13px;color:#000;-webkit-text-stroke:0.25px #000;line-height:14px">194</div>
<div class="t" style="left:810px;width:28px;text-align:center;top:487px;font-size:13px;color:#000;-webkit-text-stroke:0.25px #000;line-height:14px">193</div>
<div style="position:absolute;left:810px;top:516px;width:28px;height:44px;background:#8cc0d0"></div>
<div class="t" style="left:810px;width:28px;text-align:center;top:531px;font-size:13px;color:#000;-webkit-text-stroke:0.25px #000;line-height:14px">192</div>
<div class="t" style="left:810px;width:28px;text-align:center;top:575px;font-size:13px;color:#000;-webkit-text-stroke:0.25px #000;line-height:14px">191</div>
<div style="position:absolute;left:810px;top:604px;width:28px;height:44px;background:#8cc0d0"></div>
<div class="t" style="left:810px;width:28px;text-align:center;top:619px;font-size:13px;color:#000;-webkit-text-stroke:0.25px #000;line-height:14px">190</div>
<div class="t" style="left:810px;width:28px;text-align:center;top:663px;font-size:13px;color:#000;-webkit-text-stroke:0.25px #000;line-height:14px">189</div>
<div style="position:absolute;left:810px;top:692px;width:28px;height:44px;background:#8cc0d0"></div>
<div class="t" style="left:810px;width:28px;text-align:center;top:707px;font-size:13px;color:#000;-webkit-text-stroke:0.25px #000;line-height:14px">188</div>
<div class="t" style="left:810px;width:28px;text-align:center;top:751px;font-size:13px;color:#000;-webkit-text-stroke:0.25px #000;line-height:14px">187</div>
<div style="position:absolute;left:810px;top:780px;width:28px;height:44px;background:#8cc0d0"></div>
<div class="t" style="left:810px;width:28px;text-align:center;top:795px;font-size:13px;color:#000;-webkit-text-stroke:0.25px #000;line-height:14px">186</div>
<div class="t" style="left:810px;width:28px;text-align:center;top:839px;font-size:13px;color:#000;-webkit-text-stroke:0.25px #000;line-height:14px">185</div>
<div style="position:absolute;left:810px;top:868px;width:28px;height:44px;background:#8cc0d0"></div>
<div class="t" style="left:810px;width:28px;text-align:center;top:883px;font-size:13px;color:#000;-webkit-text-stroke:0.25px #000;line-height:14px">184</div>
<div class="t" style="left:810px;width:28px;text-align:center;top:927px;font-size:13px;color:#000;-webkit-text-stroke:0.25px #000;line-height:14px">183</div>
<div style="position:absolute;left:810px;top:956px;width:28px;height:34px;background:#8cc0d0"></div>
<div class="t" style="left:810px;width:28px;text-align:center;top:971px;font-size:13px;color:#000;-webkit-text-stroke:0.25px #000;line-height:14px">182</div>
<div style="position:absolute;left:838px;top:247px;width:2px;height:761px;background:#333"></div>
<svg style="position:absolute;left:840px;top:248px;overflow:hidden" width="1026" height="742" viewBox="0 0 1026 742"><rect x="0" y="0" width="1026" height="742" fill="#ffffff"/><rect x="0" y="0" width="280" height="4" fill="#939393"/><rect x="0" y="4" width="280" height="44" fill="#939393"/><rect x="0" y="48" width="280" height="44" fill="#939393"/><rect x="0" y="92" width="324" height="44" fill="#939393"/><rect x="0" y="136" width="324" height="44" fill="#939393"/><rect x="0" y="180" width="324" height="44" fill="#939393"/><rect x="0" y="224" width="324" height="44" fill="#939393"/><rect x="0" y="268" width="324" height="44" fill="#939393"/><rect x="0" y="312" width="324" height="44" fill="#939393"/><rect x="0" y="356" width="368" height="44" fill="#939393"/><rect x="0" y="400" width="368" height="44" fill="#939393"/><rect x="0" y="444" width="368" height="44" fill="#939393"/><rect x="0" y="488" width="368" height="44" fill="#939393"/><rect x="0" y="532" width="412" height="44" fill="#939393"/><rect x="0" y="576" width="412" height="44" fill="#939393"/><rect x="0" y="620" width="412" height="44" fill="#939393"/><rect x="0" y="664" width="412" height="44" fill="#939393"/><rect x="0" y="708" width="456" height="44" fill="#939393"/><path d="M282 43L322 3" stroke="#22c422" stroke-width="1" stroke-dasharray="3 1"/><path d="M326 43L366 3" stroke="#22c422" stroke-width="1" stroke-dasharray="3 1"/><path d="M282 87L322 47" stroke="#22c422" stroke-width="1" stroke-dasharray="3 1"/><path d="M326 87L366 47" stroke="#22c422" stroke-width="1" stroke-dasharray="3 1"/><path d="M326 131L366 91" stroke="#22c422" stroke-width="1" stroke-dasharray="3 1"/><path d="M370 131L410 91" stroke="#22c422" stroke-width="1" stroke-dasharray="3 1"/><path d="M326 175L366 135" stroke="#22c422" stroke-width="1" stroke-dasharray="3 1"/><path d="M370 175L410 135" stroke="#22c422" stroke-width="1" stroke-dasharray="3 1"/><path d="M326 219L366 179" stroke="#22c422" stroke-width="1" stroke-dasharray="3 1"/><path d="M370 219L410 179" stroke="#22c422" stroke-width="1" stroke-dasharray="3 1"/><path d="M326 263L366 223" stroke="#22c422" stroke-width="1" stroke-dasharray="3 1"/><path d="M370 263L410 223" stroke="#22c422" stroke-width="1" stroke-dasharray="3 1"/><path d="M326 307L366 267" stroke="#22c422" stroke-width="1" stroke-dasharray="3 1"/><path d="M370 307L410 267" stroke="#22c422" stroke-width="1" stroke-dasharray="3 1"/><path d="M326 351L366 311" stroke="#22c422" stroke-width="1" stroke-dasharray="3 1"/><path d="M370 351L410 311" stroke="#22c422" stroke-width="1" stroke-dasharray="3 1"/><path d="M370 395L410 355" stroke="#22c422" stroke-width="1" stroke-dasharray="3 1"/><path d="M414 395L454 355" stroke="#22c422" stroke-width="1" stroke-dasharray="3 1"/><path d="M370 439L410 399" stroke="#22c422" stroke-width="1" stroke-dasharray="3 1"/><path d="M414 439L454 399" stroke="#22c422" stroke-width="1" stroke-dasharray="3 1"/><path d="M370 483L410 443" stroke="#22c422" stroke-width="1" stroke-dasharray="3 1"/><path d="M414 483L454 443" stroke="#22c422" stroke-width="1" stroke-dasharray="3 1"/><path d="M370 527L410 487" stroke="#22c422" stroke-width="1" stroke-dasharray="3 1"/><path d="M414 527L454 487" stroke="#22c422" stroke-width="1" stroke-dasharray="3 1"/><path d="M414 571L454 531" stroke="#22c422" stroke-width="1" stroke-dasharray="3 1"/><path d="M458 571L498 531" stroke="#22c422" stroke-width="1" stroke-dasharray="3 1"/><path d="M414 615L454 575" stroke="#22c422" stroke-width="1" stroke-dasharray="3 1"/><path d="M458 615L498 575" stroke="#22c422" stroke-width="1" stroke-dasharray="3 1"/><path d="M414 659L454 619" stroke="#22c422" stroke-width="1" stroke-dasharray="3 1"/><path d="M458 659L498 619" stroke="#22c422" stroke-width="1" stroke-dasharray="3 1"/><path d="M414 703L454 663" stroke="#22c422" stroke-width="1" stroke-dasharray="3 1"/><path d="M458 703L498 663" stroke="#22c422" stroke-width="1" stroke-dasharray="3 1"/><path d="M458 747L498 707" stroke="#22c422" stroke-width="1" stroke-dasharray="3 1"/><path d="M502 747L542 707" stroke="#22c422" stroke-width="1" stroke-dasharray="3 1"/><path d="M0 -19H21Q31 -16 41 -19H65Q75 -16 85 -19H109Q119 -16 129 -19H153Q163 -16 173 -19H197Q207 -16 217 -19H241Q251 -16 261 -19H285Q295 -16 305 -19H329Q339 -16 349 -19H373Q383 -16 393 -19H417Q427 -16 437 -19H461Q471 -16 481 -19H505Q515 -16 525 -19H549Q559 -16 569 -19H593Q603 -16 613 -19H637Q647 -16 657 -19H681Q691 -16 701 -19H725Q735 -16 745 -19H769Q779 -16 789 -19H813Q823 -16 833 -19H857Q867 -16 877 -19H901Q911 -16 921 -19H945Q955 -16 965 -19H989Q999 -16 1009 -19H1026" fill="none" stroke="#000" stroke-width="2.1"/><circle cx="31" cy="-9" r="8.1" fill="none" stroke="#000" stroke-width="2"/><circle cx="75" cy="-9" r="8.1" fill="none" stroke="#000" stroke-width="2"/><circle cx="119" cy="-9" r="8.1" fill="none" stroke="#000" stroke-width="2"/><circle cx="163" cy="-9" r="8.1" fill="none" stroke="#000" stroke-width="2"/><circle cx="207" cy="-9" r="8.1" fill="none" stroke="#000" stroke-width="2"/><circle cx="251" cy="-9" r="8.1" fill="none" stroke="#000" stroke-width="2"/><circle cx="295" cy="-9" r="8.1" fill="none" stroke="#000" stroke-width="2"/><circle cx="339" cy="-9" r="8.1" fill="none" stroke="#000" stroke-width="2"/><circle cx="383" cy="-9" r="8.1" fill="none" stroke="#000" stroke-width="2"/><circle cx="427" cy="-9" r="8.1" fill="none" stroke="#000" stroke-width="2"/><circle cx="471" cy="-9" r="8.1" fill="none" stroke="#000" stroke-width="2"/><circle cx="515" cy="-9" r="8.1" fill="none" stroke="#000" stroke-width="2"/><circle cx="559" cy="-9" r="8.1" fill="none" stroke="#000" stroke-width="2"/><circle cx="603" cy="-9" r="8.1" fill="none" stroke="#000" stroke-width="2"/><circle cx="647" cy="-9" r="8.1" fill="none" stroke="#000" stroke-width="2"/><circle cx="691" cy="-9" r="8.1" fill="none" stroke="#000" stroke-width="2"/><circle cx="735" cy="-9" r="8.1" fill="none" stroke="#000" stroke-width="2"/><circle cx="779" cy="-9" r="8.1" fill="none" stroke="#000" stroke-width="2"/><circle cx="823" cy="-9" r="8.1" fill="none" stroke="#000" stroke-width="2"/><circle cx="867" cy="-9" r="8.1" fill="none" stroke="#000" stroke-width="2"/><circle cx="911" cy="-9" r="8.1" fill="none" stroke="#000" stroke-width="2"/><circle cx="955" cy="-9" r="8.1" fill="none" stroke="#000" stroke-width="2"/><circle cx="999" cy="-9" r="8.1" fill="none" stroke="#000" stroke-width="2"/><path d="M0 25H21Q31 28 41 25H65Q75 28 85 25H109Q119 28 129 25H153Q163 28 173 25H197Q207 28 217 25H241Q251 28 261 25H285Q295 28 305 25H329Q339 28 349 25H373Q383 28 393 25H417Q427 28 437 25H461Q471 28 481 25H505Q515 28 525 25H549Q559 28 569 25H593Q603 28 613 25H637Q647 28 657 25H681Q691 28 701 25H725Q735 28 745 25H769Q779 28 789 25H813Q823 28 833 25H857Q867 28 877 25H901Q911 28 921 25H945Q955 28 965 25H989Q999 28 1009 25H1026" fill="none" stroke="#000" stroke-width="2.1"/><circle cx="31" cy="35" r="8.1" fill="none" stroke="#000" stroke-width="2"/><circle cx="75" cy="35" r="8.1" fill="none" stroke="#000" stroke-width="2"/><circle cx="119" cy="35" r="8.1" fill="none" stroke="#000" stroke-width="2"/><circle cx="163" cy="35" r="8.1" fill="none" stroke="#000" stroke-width="2"/><circle cx="207" cy="35" r="8.1" fill="none" stroke="#000" stroke-width="2"/><circle cx="251" cy="35" r="8.1" fill="none" stroke="#000" stroke-width="2"/><circle cx="295" cy="35" r="8.1" fill="none" stroke="#000" stroke-width="2"/><circle cx="339" cy="35" r="8.1" fill="none" stroke="#000" stroke-width="2"/><circle cx="383" cy="35" r="8.1" fill="none" stroke="#000" stroke-width="2"/><circle cx="427" cy="35" r="8.1" fill="none" stroke="#000" stroke-width="2"/><circle cx="471" cy="35" r="8.1" fill="none" stroke="#000" stroke-width="2"/><circle cx="515" cy="35" r="8.1" fill="none" stroke="#000" stroke-width="2"/><circle cx="559" cy="35" r="8.1" fill="none" stroke="#000" stroke-width="2"/><circle cx="603" cy="35" r="8.1" fill="none" stroke="#000" stroke-width="2"/><circle cx="647" cy="35" r="8.1" fill="none" stroke="#000" stroke-width="2"/><circle cx="691" cy="35" r="8.1" fill="none" stroke="#000" stroke-width="2"/><circle cx="735" cy="35" r="8.1" fill="none" stroke="#000" stroke-width="2"/><circle cx="779" cy="35" r="8.1" fill="none" stroke="#000" stroke-width="2"/><circle cx="823" cy="35" r="8.1" fill="none" stroke="#000" stroke-width="2"/><circle cx="867" cy="35" r="8.1" fill="none" stroke="#000" stroke-width="2"/><circle cx="911" cy="35" r="8.1" fill="none" stroke="#000" stroke-width="2"/><circle cx="955" cy="35" r="8.1" fill="none" stroke="#000" stroke-width="2"/><circle cx="999" cy="35" r="8.1" fill="none" stroke="#000" stroke-width="2"/><path d="M0 69H21Q31 72 41 69H65Q75 72 85 69H109Q119 72 129 69H153Q163 72 173 69H197Q207 72 217 69H241Q251 72 261 69H285Q295 72 305 69H329Q339 72 349 69H373Q383 72 393 69H417Q427 72 437 69H461Q471 72 481 69H505Q515 72 525 69H549Q559 72 569 69H593Q603 72 613 69H637Q647 72 657 69H681Q691 72 701 69H725Q735 72 745 69H769Q779 72 789 69H813Q823 72 833 69H857Q867 72 877 69H901Q911 72 921 69H945Q955 72 965 69H989Q999 72 1009 69H1026" fill="none" stroke="#000" stroke-width="2.1"/><circle cx="31" cy="79" r="8.1" fill="none" stroke="#000" stroke-width="2"/><circle cx="75" cy="79" r="8.1" fill="none" stroke="#000" stroke-width="2"/><circle cx="119" cy="79" r="8.1" fill="none" stroke="#000" stroke-width="2"/><circle cx="163" cy="79" r="8.1" fill="none" stroke="#000" stroke-width="2"/><circle cx="207" cy="79" r="8.1" fill="none" stroke="#000" stroke-width="2"/><circle cx="251" cy="79" r="8.1" fill="none" stroke="#000" stroke-width="2"/><circle cx="295" cy="79" r="8.1" fill="none" stroke="#000" stroke-width="2"/><circle cx="339" cy="79" r="8.1" fill="none" stroke="#000" stroke-width="2"/><circle cx="383" cy="79" r="8.1" fill="none" stroke="#000" stroke-width="2"/><circle cx="427" cy="79" r="8.1" fill="none" stroke="#000" stroke-width="2"/><circle cx="471" cy="79" r="8.1" fill="none" stroke="#000" stroke-width="2"/><circle cx="515" cy="79" r="8.1" fill="none" stroke="#000" stroke-width="2"/><circle cx="559" cy="79" r="8.1" fill="none" stroke="#000" stroke-width="2"/><circle cx="603" cy="79" r="8.1" fill="none" stroke="#000" stroke-width="2"/><circle cx="647" cy="79" r="8.1" fill="none" stroke="#000" stroke-width="2"/><circle cx="691" cy="79" r="8.1" fill="none" stroke="#000" stroke-width="2"/><circle cx="735" cy="79" r="8.1" fill="none" stroke="#000" stroke-width="2"/><circle cx="779" cy="79" r="8.1" fill="none" stroke="#000" stroke-width="2"/><circle cx="823" cy="79" r="8.1" fill="none" stroke="#000" stroke-width="2"/><circle cx="867" cy="79" r="8.1" fill="none" stroke="#000" stroke-width="2"/><circle cx="911" cy="79" r="8.1" fill="none" stroke="#000" stroke-width="2"/><circle cx="955" cy="79" r="8.1" fill="none" stroke="#000" stroke-width="2"/><circle cx="999" cy="79" r="8.1" fill="none" stroke="#000" stroke-width="2"/><path d="M0 113H21Q31 116 41 113H65Q75 116 85 113H109Q119 116 129 113H153Q163 116 173 113H197Q207 116 217 113H241Q251 116 261 113H285Q295 116 305 113H329Q339 116 349 113H373Q383 116 393 113H417Q427 116 437 113H461Q471 116 481 113H505Q515 116 525 113H549Q559 116 569 113H593Q603 116 613 113H637Q647 116 657 113H681Q691 116 701 113H725Q735 116 745 113H769Q779 116 789 113H813Q823 116 833 113H857Q867 116 877 113H901Q911 116 921 113H945Q955 116 965 113H989Q999 116 1009 113H1026" fill="none" stroke="#000" stroke-width="2.1"/><circle cx="31" cy="123" r="8.1" fill="none" stroke="#000" stroke-width="2"/><circle cx="75" cy="123" r="8.1" fill="none" stroke="#000" stroke-width="2"/><circle cx="119" cy="123" r="8.1" fill="none" stroke="#000" stroke-width="2"/><circle cx="163" cy="123" r="8.1" fill="none" stroke="#000" stroke-width="2"/><circle cx="207" cy="123" r="8.1" fill="none" stroke="#000" stroke-width="2"/><circle cx="251" cy="123" r="8.1" fill="none" stroke="#000" stroke-width="2"/><circle cx="295" cy="123" r="8.1" fill="none" stroke="#000" stroke-width="2"/><circle cx="339" cy="123" r="8.1" fill="none" stroke="#000" stroke-width="2"/><circle cx="383" cy="123" r="8.1" fill="none" stroke="#000" stroke-width="2"/><circle cx="427" cy="123" r="8.1" fill="none" stroke="#000" stroke-width="2"/><circle cx="471" cy="123" r="8.1" fill="none" stroke="#000" stroke-width="2"/><circle cx="515" cy="123" r="8.1" fill="none" stroke="#000" stroke-width="2"/><circle cx="559" cy="123" r="8.1" fill="none" stroke="#000" stroke-width="2"/><circle cx="603" cy="123" r="8.1" fill="none" stroke="#000" stroke-width="2"/><circle cx="647" cy="123" r="8.1" fill="none" stroke="#000" stroke-width="2"/><circle cx="691" cy="123" r="8.1" fill="none" stroke="#000" stroke-width="2"/><circle cx="735" cy="123" r="8.1" fill="none" stroke="#000" stroke-width="2"/><circle cx="779" cy="123" r="8.1" fill="none" stroke="#000" stroke-width="2"/><circle cx="823" cy="123" r="8.1" fill="none" stroke="#000" stroke-width="2"/><circle cx="867" cy="123" r="8.1" fill="none" stroke="#000" stroke-width="2"/><circle cx="911" cy="123" r="8.1" fill="none" stroke="#000" stroke-width="2"/><circle cx="955" cy="123" r="8.1" fill="none" stroke="#000" stroke-width="2"/><circle cx="999" cy="123" r="8.1" fill="none" stroke="#000" stroke-width="2"/><path d="M0 157H21Q31 160 41 157H65Q75 160 85 157H109Q119 160 129 157H153Q163 160 173 157H197Q207 160 217 157H241Q251 160 261 157H285Q295 160 305 157H329Q339 160 349 157H373Q383 160 393 157H417Q427 160 437 157H461Q471 160 481 157H505Q515 160 525 157H549Q559 160 569 157H593Q603 160 613 157H637Q647 160 657 157H681Q691 160 701 157H725Q735 160 745 157H769Q779 160 789 157H813Q823 160 833 157H857Q867 160 877 157H901Q911 160 921 157H945Q955 160 965 157H989Q999 160 1009 157H1026" fill="none" stroke="#000" stroke-width="2.1"/><circle cx="31" cy="167" r="8.1" fill="none" stroke="#000" stroke-width="2"/><circle cx="75" cy="167" r="8.1" fill="none" stroke="#000" stroke-width="2"/><circle cx="119" cy="167" r="8.1" fill="none" stroke="#000" stroke-width="2"/><circle cx="163" cy="167" r="8.1" fill="none" stroke="#000" stroke-width="2"/><circle cx="207" cy="167" r="8.1" fill="none" stroke="#000" stroke-width="2"/><circle cx="251" cy="167" r="8.1" fill="none" stroke="#000" stroke-width="2"/><circle cx="295" cy="167" r="8.1" fill="none" stroke="#000" stroke-width="2"/><circle cx="339" cy="167" r="8.1" fill="none" stroke="#000" stroke-width="2"/><circle cx="383" cy="167" r="8.1" fill="none" stroke="#000" stroke-width="2"/><circle cx="427" cy="167" r="8.1" fill="none" stroke="#000" stroke-width="2"/><circle cx="471" cy="167" r="8.1" fill="none" stroke="#000" stroke-width="2"/><circle cx="515" cy="167" r="8.1" fill="none" stroke="#000" stroke-width="2"/><circle cx="559" cy="167" r="8.1" fill="none" stroke="#000" stroke-width="2"/><circle cx="603" cy="167" r="8.1" fill="none" stroke="#000" stroke-width="2"/><circle cx="647" cy="167" r="8.1" fill="none" stroke="#000" stroke-width="2"/><circle cx="691" cy="167" r="8.1" fill="none" stroke="#000" stroke-width="2"/><circle cx="735" cy="167" r="8.1" fill="none" stroke="#000" stroke-width="2"/><circle cx="779" cy="167" r="8.1" fill="none" stroke="#000" stroke-width="2"/><circle cx="823" cy="167" r="8.1" fill="none" stroke="#000" stroke-width="2"/><circle cx="867" cy="167" r="8.1" fill="none" stroke="#000" stroke-width="2"/><circle cx="911" cy="167" r="8.1" fill="none" stroke="#000" stroke-width="2"/><circle cx="955" cy="167" r="8.1" fill="none" stroke="#000" stroke-width="2"/><circle cx="999" cy="167" r="8.1" fill="none" stroke="#000" stroke-width="2"/><path d="M0 201H21Q31 204 41 201H65Q75 204 85 201H109Q119 204 129 201H153Q163 204 173 201H197Q207 204 217 201H241Q251 204 261 201H285Q295 204 305 201H329Q339 204 349 201H373Q383 204 393 201H417Q427 204 437 201H461Q471 204 481 201H505Q515 204 525 201H549Q559 204 569 201H593Q603 204 613 201H637Q647 204 657 201H681Q691 204 701 201H725Q735 204 745 201H769Q779 204 789 201H813Q823 204 833 201H857Q867 204 877 201H901Q911 204 921 201H945Q955 204 965 201H989Q999 204 1009 201H1026" fill="none" stroke="#000" stroke-width="2.1"/><circle cx="31" cy="211" r="8.1" fill="none" stroke="#000" stroke-width="2"/><circle cx="75" cy="211" r="8.1" fill="none" stroke="#000" stroke-width="2"/><circle cx="119" cy="211" r="8.1" fill="none" stroke="#000" stroke-width="2"/><circle cx="163" cy="211" r="8.1" fill="none" stroke="#000" stroke-width="2"/><circle cx="207" cy="211" r="8.1" fill="none" stroke="#000" stroke-width="2"/><circle cx="251" cy="211" r="8.1" fill="none" stroke="#000" stroke-width="2"/><circle cx="295" cy="211" r="8.1" fill="none" stroke="#000" stroke-width="2"/><circle cx="339" cy="211" r="8.1" fill="none" stroke="#000" stroke-width="2"/><circle cx="383" cy="211" r="8.1" fill="none" stroke="#000" stroke-width="2"/><circle cx="427" cy="211" r="8.1" fill="none" stroke="#000" stroke-width="2"/><circle cx="471" cy="211" r="8.1" fill="none" stroke="#000" stroke-width="2"/><circle cx="515" cy="211" r="8.1" fill="none" stroke="#000" stroke-width="2"/><circle cx="559" cy="211" r="8.1" fill="none" stroke="#000" stroke-width="2"/><circle cx="603" cy="211" r="8.1" fill="none" stroke="#000" stroke-width="2"/><circle cx="647" cy="211" r="8.1" fill="none" stroke="#000" stroke-width="2"/><circle cx="691" cy="211" r="8.1" fill="none" stroke="#000" stroke-width="2"/><circle cx="735" cy="211" r="8.1" fill="none" stroke="#000" stroke-width="2"/><circle cx="779" cy="211" r="8.1" fill="none" stroke="#000" stroke-width="2"/><circle cx="823" cy="211" r="8.1" fill="none" stroke="#000" stroke-width="2"/><circle cx="867" cy="211" r="8.1" fill="none" stroke="#000" stroke-width="2"/><circle cx="911" cy="211" r="8.1" fill="none" stroke="#000" stroke-width="2"/><circle cx="955" cy="211" r="8.1" fill="none" stroke="#000" stroke-width="2"/><circle cx="999" cy="211" r="8.1" fill="none" stroke="#000" stroke-width="2"/><path d="M0 245H21Q31 248 41 245H65Q75 248 85 245H109Q119 248 129 245H153Q163 248 173 245H197Q207 248 217 245H241Q251 248 261 245H285Q295 248 305 245H329Q339 248 349 245H373Q383 248 393 245H417Q427 248 437 245H461Q471 248 481 245H505Q515 248 525 245H549Q559 248 569 245H593Q603 248 613 245H637Q647 248 657 245H681Q691 248 701 245H725Q735 248 745 245H769Q779 248 789 245H813Q823 248 833 245H857Q867 248 877 245H901Q911 248 921 245H945Q955 248 965 245H989Q999 248 1009 245H1026" fill="none" stroke="#000" stroke-width="2.1"/><circle cx="31" cy="255" r="8.1" fill="none" stroke="#000" stroke-width="2"/><circle cx="75" cy="255" r="8.1" fill="none" stroke="#000" stroke-width="2"/><circle cx="119" cy="255" r="8.1" fill="none" stroke="#000" stroke-width="2"/><circle cx="163" cy="255" r="8.1" fill="none" stroke="#000" stroke-width="2"/><circle cx="207" cy="255" r="8.1" fill="none" stroke="#000" stroke-width="2"/><circle cx="251" cy="255" r="8.1" fill="none" stroke="#000" stroke-width="2"/><circle cx="295" cy="255" r="8.1" fill="none" stroke="#000" stroke-width="2"/><circle cx="339" cy="255" r="8.1" fill="none" stroke="#000" stroke-width="2"/><circle cx="383" cy="255" r="8.1" fill="none" stroke="#000" stroke-width="2"/><circle cx="427" cy="255" r="8.1" fill="none" stroke="#000" stroke-width="2"/><circle cx="471" cy="255" r="8.1" fill="none" stroke="#000" stroke-width="2"/><circle cx="515" cy="255" r="8.1" fill="none" stroke="#000" stroke-width="2"/><circle cx="559" cy="255" r="8.1" fill="none" stroke="#000" stroke-width="2"/><circle cx="603" cy="255" r="8.1" fill="none" stroke="#000" stroke-width="2"/><circle cx="647" cy="255" r="8.1" fill="none" stroke="#000" stroke-width="2"/><circle cx="691" cy="255" r="8.1" fill="none" stroke="#000" stroke-width="2"/><circle cx="735" cy="255" r="8.1" fill="none" stroke="#000" stroke-width="2"/><circle cx="779" cy="255" r="8.1" fill="none" stroke="#000" stroke-width="2"/><circle cx="823" cy="255" r="8.1" fill="none" stroke="#000" stroke-width="2"/><circle cx="867" cy="255" r="8.1" fill="none" stroke="#000" stroke-width="2"/><circle cx="911" cy="255" r="8.1" fill="none" stroke="#000" stroke-width="2"/><circle cx="955" cy="255" r="8.1" fill="none" stroke="#000" stroke-width="2"/><circle cx="999" cy="255" r="8.1" fill="none" stroke="#000" stroke-width="2"/><path d="M0 289H21Q31 292 41 289H65Q75 292 85 289H109Q119 292 129 289H153Q163 292 173 289H197Q207 292 217 289H241Q251 292 261 289H285Q295 292 305 289H329Q339 292 349 289H373Q383 292 393 289H417Q427 292 437 289H461Q471 292 481 289H505Q515 292 525 289H549Q559 292 569 289H593Q603 292 613 289H637Q647 292 657 289H681Q691 292 701 289H725Q735 292 745 289H769Q779 292 789 289H813Q823 292 833 289H857Q867 292 877 289H901Q911 292 921 289H945Q955 292 965 289H989Q999 292 1009 289H1026" fill="none" stroke="#000" stroke-width="2.1"/><circle cx="31" cy="299" r="8.1" fill="none" stroke="#000" stroke-width="2"/><circle cx="75" cy="299" r="8.1" fill="none" stroke="#000" stroke-width="2"/><circle cx="119" cy="299" r="8.1" fill="none" stroke="#000" stroke-width="2"/><circle cx="163" cy="299" r="8.1" fill="none" stroke="#000" stroke-width="2"/><circle cx="207" cy="299" r="8.1" fill="none" stroke="#000" stroke-width="2"/><circle cx="251" cy="299" r="8.1" fill="none" stroke="#000" stroke-width="2"/><circle cx="295" cy="299" r="8.1" fill="none" stroke="#000" stroke-width="2"/><circle cx="339" cy="299" r="8.1" fill="none" stroke="#000" stroke-width="2"/><circle cx="383" cy="299" r="8.1" fill="none" stroke="#000" stroke-width="2"/><circle cx="427" cy="299" r="8.1" fill="none" stroke="#000" stroke-width="2"/><circle cx="471" cy="299" r="8.1" fill="none" stroke="#000" stroke-width="2"/><circle cx="515" cy="299" r="8.1" fill="none" stroke="#000" stroke-width="2"/><circle cx="559" cy="299" r="8.1" fill="none" stroke="#000" stroke-width="2"/><circle cx="603" cy="299" r="8.1" fill="none" stroke="#000" stroke-width="2"/><circle cx="647" cy="299" r="8.1" fill="none" stroke="#000" stroke-width="2"/><circle cx="691" cy="299" r="8.1" fill="none" stroke="#000" stroke-width="2"/><circle cx="735" cy="299" r="8.1" fill="none" stroke="#000" stroke-width="2"/><circle cx="779" cy="299" r="8.1" fill="none" stroke="#000" stroke-width="2"/><circle cx="823" cy="299" r="8.1" fill="none" stroke="#000" stroke-width="2"/><circle cx="867" cy="299" r="8.1" fill="none" stroke="#000" stroke-width="2"/><circle cx="911" cy="299" r="8.1" fill="none" stroke="#000" stroke-width="2"/><circle cx="955" cy="299" r="8.1" fill="none" stroke="#000" stroke-width="2"/><circle cx="999" cy="299" r="8.1" fill="none" stroke="#000" stroke-width="2"/><path d="M0 333H21Q31 336 41 333H65Q75 336 85 333H109Q119 336 129 333H153Q163 336 173 333H197Q207 336 217 333H241Q251 336 261 333H285Q295 336 305 333H329Q339 336 349 333H373Q383 336 393 333H417Q427 336 437 333H461Q471 336 481 333H505Q515 336 525 333H549Q559 336 569 333H593Q603 336 613 333H637Q647 336 657 333H681Q691 336 701 333H725Q735 336 745 333H769Q779 336 789 333H813Q823 336 833 333H857Q867 336 877 333H901Q911 336 921 333H945Q955 336 965 333H989Q999 336 1009 333H1026" fill="none" stroke="#000" stroke-width="2.1"/><circle cx="31" cy="343" r="8.1" fill="none" stroke="#000" stroke-width="2"/><circle cx="75" cy="343" r="8.1" fill="none" stroke="#000" stroke-width="2"/><circle cx="119" cy="343" r="8.1" fill="none" stroke="#000" stroke-width="2"/><circle cx="163" cy="343" r="8.1" fill="none" stroke="#000" stroke-width="2"/><circle cx="207" cy="343" r="8.1" fill="none" stroke="#000" stroke-width="2"/><circle cx="251" cy="343" r="8.1" fill="none" stroke="#000" stroke-width="2"/><circle cx="295" cy="343" r="8.1" fill="none" stroke="#000" stroke-width="2"/><circle cx="339" cy="343" r="8.1" fill="none" stroke="#000" stroke-width="2"/><circle cx="383" cy="343" r="8.1" fill="none" stroke="#000" stroke-width="2"/><circle cx="427" cy="343" r="8.1" fill="none" stroke="#000" stroke-width="2"/><circle cx="471" cy="343" r="8.1" fill="none" stroke="#000" stroke-width="2"/><circle cx="515" cy="343" r="8.1" fill="none" stroke="#000" stroke-width="2"/><circle cx="559" cy="343" r="8.1" fill="none" stroke="#000" stroke-width="2"/><circle cx="603" cy="343" r="8.1" fill="none" stroke="#000" stroke-width="2"/><circle cx="647" cy="343" r="8.1" fill="none" stroke="#000" stroke-width="2"/><circle cx="691" cy="343" r="8.1" fill="none" stroke="#000" stroke-width="2"/><circle cx="735" cy="343" r="8.1" fill="none" stroke="#000" stroke-width="2"/><circle cx="779" cy="343" r="8.1" fill="none" stroke="#000" stroke-width="2"/><circle cx="823" cy="343" r="8.1" fill="none" stroke="#000" stroke-width="2"/><circle cx="867" cy="343" r="8.1" fill="none" stroke="#000" stroke-width="2"/><circle cx="911" cy="343" r="8.1" fill="none" stroke="#000" stroke-width="2"/><circle cx="955" cy="343" r="8.1" fill="none" stroke="#000" stroke-width="2"/><circle cx="999" cy="343" r="8.1" fill="none" stroke="#000" stroke-width="2"/><path d="M0 377H21Q31 380 41 377H65Q75 380 85 377H109Q119 380 129 377H153Q163 380 173 377H197Q207 380 217 377H241Q251 380 261 377H285Q295 380 305 377H329Q339 380 349 377H373Q383 380 393 377H417Q427 380 437 377H461Q471 380 481 377H505Q515 380 525 377H549Q559 380 569 377H593Q603 380 613 377H637Q647 380 657 377H681Q691 380 701 377H725Q735 380 745 377H769Q779 380 789 377H813Q823 380 833 377H857Q867 380 877 377H901Q911 380 921 377H945Q955 380 965 377H989Q999 380 1009 377H1026" fill="none" stroke="#000" stroke-width="2.1"/><circle cx="31" cy="387" r="8.1" fill="none" stroke="#000" stroke-width="2"/><circle cx="75" cy="387" r="8.1" fill="none" stroke="#000" stroke-width="2"/><circle cx="119" cy="387" r="8.1" fill="none" stroke="#000" stroke-width="2"/><circle cx="163" cy="387" r="8.1" fill="none" stroke="#000" stroke-width="2"/><circle cx="207" cy="387" r="8.1" fill="none" stroke="#000" stroke-width="2"/><circle cx="251" cy="387" r="8.1" fill="none" stroke="#000" stroke-width="2"/><circle cx="295" cy="387" r="8.1" fill="none" stroke="#000" stroke-width="2"/><circle cx="339" cy="387" r="8.1" fill="none" stroke="#000" stroke-width="2"/><circle cx="383" cy="387" r="8.1" fill="none" stroke="#000" stroke-width="2"/><circle cx="427" cy="387" r="8.1" fill="none" stroke="#000" stroke-width="2"/><circle cx="471" cy="387" r="8.1" fill="none" stroke="#000" stroke-width="2"/><circle cx="515" cy="387" r="8.1" fill="none" stroke="#000" stroke-width="2"/><circle cx="559" cy="387" r="8.1" fill="none" stroke="#000" stroke-width="2"/><circle cx="603" cy="387" r="8.1" fill="none" stroke="#000" stroke-width="2"/><circle cx="647" cy="387" r="8.1" fill="none" stroke="#000" stroke-width="2"/><circle cx="691" cy="387" r="8.1" fill="none" stroke="#000" stroke-width="2"/><circle cx="735" cy="387" r="8.1" fill="none" stroke="#000" stroke-width="2"/><circle cx="779" cy="387" r="8.1" fill="none" stroke="#000" stroke-width="2"/><circle cx="823" cy="387" r="8.1" fill="none" stroke="#000" stroke-width="2"/><circle cx="867" cy="387" r="8.1" fill="none" stroke="#000" stroke-width="2"/><circle cx="911" cy="387" r="8.1" fill="none" stroke="#000" stroke-width="2"/><circle cx="955" cy="387" r="8.1" fill="none" stroke="#000" stroke-width="2"/><circle cx="999" cy="387" r="8.1" fill="none" stroke="#000" stroke-width="2"/><path d="M0 421H21Q31 424 41 421H65Q75 424 85 421H109Q119 424 129 421H153Q163 424 173 421H197Q207 424 217 421H241Q251 424 261 421H285Q295 424 305 421H329Q339 424 349 421H373Q383 424 393 421H417Q427 424 437 421H461Q471 424 481 421H505Q515 424 525 421H549Q559 424 569 421H593Q603 424 613 421H637Q647 424 657 421H681Q691 424 701 421H725Q735 424 745 421H769Q779 424 789 421H813Q823 424 833 421H857Q867 424 877 421H901Q911 424 921 421H945Q955 424 965 421H989Q999 424 1009 421H1026" fill="none" stroke="#000" stroke-width="2.1"/><circle cx="31" cy="431" r="8.1" fill="none" stroke="#000" stroke-width="2"/><circle cx="75" cy="431" r="8.1" fill="none" stroke="#000" stroke-width="2"/><circle cx="119" cy="431" r="8.1" fill="none" stroke="#000" stroke-width="2"/><circle cx="163" cy="431" r="8.1" fill="none" stroke="#000" stroke-width="2"/><circle cx="207" cy="431" r="8.1" fill="none" stroke="#000" stroke-width="2"/><circle cx="251" cy="431" r="8.1" fill="none" stroke="#000" stroke-width="2"/><circle cx="295" cy="431" r="8.1" fill="none" stroke="#000" stroke-width="2"/><circle cx="339" cy="431" r="8.1" fill="none" stroke="#000" stroke-width="2"/><circle cx="383" cy="431" r="8.1" fill="none" stroke="#000" stroke-width="2"/><circle cx="427" cy="431" r="8.1" fill="none" stroke="#000" stroke-width="2"/><circle cx="471" cy="431" r="8.1" fill="none" stroke="#000" stroke-width="2"/><circle cx="515" cy="431" r="8.1" fill="none" stroke="#000" stroke-width="2"/><circle cx="559" cy="431" r="8.1" fill="none" stroke="#000" stroke-width="2"/><circle cx="603" cy="431" r="8.1" fill="none" stroke="#000" stroke-width="2"/><circle cx="647" cy="431" r="8.1" fill="none" stroke="#000" stroke-width="2"/><circle cx="691" cy="431" r="8.1" fill="none" stroke="#000" stroke-width="2"/><circle cx="735" cy="431" r="8.1" fill="none" stroke="#000" stroke-width="2"/><circle cx="779" cy="431" r="8.1" fill="none" stroke="#000" stroke-width="2"/><circle cx="823" cy="431" r="8.1" fill="none" stroke="#000" stroke-width="2"/><circle cx="867" cy="431" r="8.1" fill="none" stroke="#000" stroke-width="2"/><circle cx="911" cy="431" r="8.1" fill="none" stroke="#000" stroke-width="2"/><circle cx="955" cy="431" r="8.1" fill="none" stroke="#000" stroke-width="2"/><circle cx="999" cy="431" r="8.1" fill="none" stroke="#000" stroke-width="2"/><path d="M0 465H21Q31 468 41 465H65Q75 468 85 465H109Q119 468 129 465H153Q163 468 173 465H197Q207 468 217 465H241Q251 468 261 465H285Q295 468 305 465H329Q339 468 349 465H373Q383 468 393 465H417Q427 468 437 465H461Q471 468 481 465H505Q515 468 525 465H549Q559 468 569 465H593Q603 468 613 465H637Q647 468 657 465H681Q691 468 701 465H725Q735 468 745 465H769Q779 468 789 465H813Q823 468 833 465H857Q867 468 877 465H901Q911 468 921 465H945Q955 468 965 465H989Q999 468 1009 465H1026" fill="none" stroke="#000" stroke-width="2.1"/><circle cx="31" cy="475" r="8.1" fill="none" stroke="#000" stroke-width="2"/><circle cx="75" cy="475" r="8.1" fill="none" stroke="#000" stroke-width="2"/><circle cx="119" cy="475" r="8.1" fill="none" stroke="#000" stroke-width="2"/><circle cx="163" cy="475" r="8.1" fill="none" stroke="#000" stroke-width="2"/><circle cx="207" cy="475" r="8.1" fill="none" stroke="#000" stroke-width="2"/><circle cx="251" cy="475" r="8.1" fill="none" stroke="#000" stroke-width="2"/><circle cx="295" cy="475" r="8.1" fill="none" stroke="#000" stroke-width="2"/><circle cx="339" cy="475" r="8.1" fill="none" stroke="#000" stroke-width="2"/><circle cx="383" cy="475" r="8.1" fill="none" stroke="#000" stroke-width="2"/><circle cx="427" cy="475" r="8.1" fill="none" stroke="#000" stroke-width="2"/><circle cx="471" cy="475" r="8.1" fill="none" stroke="#000" stroke-width="2"/><circle cx="515" cy="475" r="8.1" fill="none" stroke="#000" stroke-width="2"/><circle cx="559" cy="475" r="8.1" fill="none" stroke="#000" stroke-width="2"/><circle cx="603" cy="475" r="8.1" fill="none" stroke="#000" stroke-width="2"/><circle cx="647" cy="475" r="8.1" fill="none" stroke="#000" stroke-width="2"/><circle cx="691" cy="475" r="8.1" fill="none" stroke="#000" stroke-width="2"/><circle cx="735" cy="475" r="8.1" fill="none" stroke="#000" stroke-width="2"/><circle cx="779" cy="475" r="8.1" fill="none" stroke="#000" stroke-width="2"/><circle cx="823" cy="475" r="8.1" fill="none" stroke="#000" stroke-width="2"/><circle cx="867" cy="475" r="8.1" fill="none" stroke="#000" stroke-width="2"/><circle cx="911" cy="475" r="8.1" fill="none" stroke="#000" stroke-width="2"/><circle cx="955" cy="475" r="8.1" fill="none" stroke="#000" stroke-width="2"/><circle cx="999" cy="475" r="8.1" fill="none" stroke="#000" stroke-width="2"/><path d="M0 509H21Q31 512 41 509H65Q75 512 85 509H109Q119 512 129 509H153Q163 512 173 509H197Q207 512 217 509H241Q251 512 261 509H285Q295 512 305 509H329Q339 512 349 509H373Q383 512 393 509H417Q427 512 437 509H461Q471 512 481 509H505Q515 512 525 509H549Q559 512 569 509H593Q603 512 613 509H637Q647 512 657 509H681Q691 512 701 509H725Q735 512 745 509H769Q779 512 789 509H813Q823 512 833 509H857Q867 512 877 509H901Q911 512 921 509H945Q955 512 965 509H989Q999 512 1009 509H1026" fill="none" stroke="#000" stroke-width="2.1"/><circle cx="31" cy="519" r="8.1" fill="none" stroke="#000" stroke-width="2"/><circle cx="75" cy="519" r="8.1" fill="none" stroke="#000" stroke-width="2"/><circle cx="119" cy="519" r="8.1" fill="none" stroke="#000" stroke-width="2"/><circle cx="163" cy="519" r="8.1" fill="none" stroke="#000" stroke-width="2"/><circle cx="207" cy="519" r="8.1" fill="none" stroke="#000" stroke-width="2"/><circle cx="251" cy="519" r="8.1" fill="none" stroke="#000" stroke-width="2"/><circle cx="295" cy="519" r="8.1" fill="none" stroke="#000" stroke-width="2"/><circle cx="339" cy="519" r="8.1" fill="none" stroke="#000" stroke-width="2"/><circle cx="383" cy="519" r="8.1" fill="none" stroke="#000" stroke-width="2"/><circle cx="427" cy="519" r="8.1" fill="none" stroke="#000" stroke-width="2"/><circle cx="471" cy="519" r="8.1" fill="none" stroke="#000" stroke-width="2"/><circle cx="515" cy="519" r="8.1" fill="none" stroke="#000" stroke-width="2"/><circle cx="559" cy="519" r="8.1" fill="none" stroke="#000" stroke-width="2"/><circle cx="603" cy="519" r="8.1" fill="none" stroke="#000" stroke-width="2"/><circle cx="647" cy="519" r="8.1" fill="none" stroke="#000" stroke-width="2"/><circle cx="691" cy="519" r="8.1" fill="none" stroke="#000" stroke-width="2"/><circle cx="735" cy="519" r="8.1" fill="none" stroke="#000" stroke-width="2"/><circle cx="779" cy="519" r="8.1" fill="none" stroke="#000" stroke-width="2"/><circle cx="823" cy="519" r="8.1" fill="none" stroke="#000" stroke-width="2"/><circle cx="867" cy="519" r="8.1" fill="none" stroke="#000" stroke-width="2"/><circle cx="911" cy="519" r="8.1" fill="none" stroke="#000" stroke-width="2"/><circle cx="955" cy="519" r="8.1" fill="none" stroke="#000" stroke-width="2"/><circle cx="999" cy="519" r="8.1" fill="none" stroke="#000" stroke-width="2"/><path d="M0 553H21Q31 556 41 553H65Q75 556 85 553H109Q119 556 129 553H153Q163 556 173 553H197Q207 556 217 553H241Q251 556 261 553H285Q295 556 305 553H329Q339 556 349 553H373Q383 556 393 553H417Q427 556 437 553H461Q471 556 481 553H505Q515 556 525 553H549Q559 556 569 553H593Q603 556 613 553H637Q647 556 657 553H681Q691 556 701 553H725Q735 556 745 553H769Q779 556 789 553H813Q823 556 833 553H857Q867 556 877 553H901Q911 556 921 553H945Q955 556 965 553H989Q999 556 1009 553H1026" fill="none" stroke="#000" stroke-width="2.1"/><circle cx="31" cy="563" r="8.1" fill="none" stroke="#000" stroke-width="2"/><circle cx="75" cy="563" r="8.1" fill="none" stroke="#000" stroke-width="2"/><circle cx="119" cy="563" r="8.1" fill="none" stroke="#000" stroke-width="2"/><circle cx="163" cy="563" r="8.1" fill="none" stroke="#000" stroke-width="2"/><circle cx="207" cy="563" r="8.1" fill="none" stroke="#000" stroke-width="2"/><circle cx="251" cy="563" r="8.1" fill="none" stroke="#000" stroke-width="2"/><circle cx="295" cy="563" r="8.1" fill="none" stroke="#000" stroke-width="2"/><circle cx="339" cy="563" r="8.1" fill="none" stroke="#000" stroke-width="2"/><circle cx="383" cy="563" r="8.1" fill="none" stroke="#000" stroke-width="2"/><circle cx="427" cy="563" r="8.1" fill="none" stroke="#000" stroke-width="2"/><circle cx="471" cy="563" r="8.1" fill="none" stroke="#000" stroke-width="2"/><circle cx="515" cy="563" r="8.1" fill="none" stroke="#000" stroke-width="2"/><circle cx="559" cy="563" r="8.1" fill="none" stroke="#000" stroke-width="2"/><circle cx="603" cy="563" r="8.1" fill="none" stroke="#000" stroke-width="2"/><circle cx="647" cy="563" r="8.1" fill="none" stroke="#000" stroke-width="2"/><circle cx="691" cy="563" r="8.1" fill="none" stroke="#000" stroke-width="2"/><circle cx="735" cy="563" r="8.1" fill="none" stroke="#000" stroke-width="2"/><circle cx="779" cy="563" r="8.1" fill="none" stroke="#000" stroke-width="2"/><circle cx="823" cy="563" r="8.1" fill="none" stroke="#000" stroke-width="2"/><circle cx="867" cy="563" r="8.1" fill="none" stroke="#000" stroke-width="2"/><circle cx="911" cy="563" r="8.1" fill="none" stroke="#000" stroke-width="2"/><circle cx="955" cy="563" r="8.1" fill="none" stroke="#000" stroke-width="2"/><circle cx="999" cy="563" r="8.1" fill="none" stroke="#000" stroke-width="2"/><path d="M0 597H21Q31 600 41 597H65Q75 600 85 597H109Q119 600 129 597H153Q163 600 173 597H197Q207 600 217 597H241Q251 600 261 597H285Q295 600 305 597H329Q339 600 349 597H373Q383 600 393 597H417Q427 600 437 597H461Q471 600 481 597H505Q515 600 525 597H549Q559 600 569 597H593Q603 600 613 597H637Q647 600 657 597H681Q691 600 701 597H725Q735 600 745 597H769Q779 600 789 597H813Q823 600 833 597H857Q867 600 877 597H901Q911 600 921 597H945Q955 600 965 597H989Q999 600 1009 597H1026" fill="none" stroke="#000" stroke-width="2.1"/><circle cx="31" cy="607" r="8.1" fill="none" stroke="#000" stroke-width="2"/><circle cx="75" cy="607" r="8.1" fill="none" stroke="#000" stroke-width="2"/><circle cx="119" cy="607" r="8.1" fill="none" stroke="#000" stroke-width="2"/><circle cx="163" cy="607" r="8.1" fill="none" stroke="#000" stroke-width="2"/><circle cx="207" cy="607" r="8.1" fill="none" stroke="#000" stroke-width="2"/><circle cx="251" cy="607" r="8.1" fill="none" stroke="#000" stroke-width="2"/><circle cx="295" cy="607" r="8.1" fill="none" stroke="#000" stroke-width="2"/><circle cx="339" cy="607" r="8.1" fill="none" stroke="#000" stroke-width="2"/><circle cx="383" cy="607" r="8.1" fill="none" stroke="#000" stroke-width="2"/><circle cx="427" cy="607" r="8.1" fill="none" stroke="#000" stroke-width="2"/><circle cx="471" cy="607" r="8.1" fill="none" stroke="#000" stroke-width="2"/><circle cx="515" cy="607" r="8.1" fill="none" stroke="#000" stroke-width="2"/><circle cx="559" cy="607" r="8.1" fill="none" stroke="#000" stroke-width="2"/><circle cx="603" cy="607" r="8.1" fill="none" stroke="#000" stroke-width="2"/><circle cx="647" cy="607" r="8.1" fill="none" stroke="#000" stroke-width="2"/><circle cx="691" cy="607" r="8.1" fill="none" stroke="#000" stroke-width="2"/><circle cx="735" cy="607" r="8.1" fill="none" stroke="#000" stroke-width="2"/><circle cx="779" cy="607" r="8.1" fill="none" stroke="#000" stroke-width="2"/><circle cx="823" cy="607" r="8.1" fill="none" stroke="#000" stroke-width="2"/><circle cx="867" cy="607" r="8.1" fill="none" stroke="#000" stroke-width="2"/><circle cx="911" cy="607" r="8.1" fill="none" stroke="#000" stroke-width="2"/><circle cx="955" cy="607" r="8.1" fill="none" stroke="#000" stroke-width="2"/><circle cx="999" cy="607" r="8.1" fill="none" stroke="#000" stroke-width="2"/><path d="M0 641H21Q31 644 41 641H65Q75 644 85 641H109Q119 644 129 641H153Q163 644 173 641H197Q207 644 217 641H241Q251 644 261 641H285Q295 644 305 641H329Q339 644 349 641H373Q383 644 393 641H417Q427 644 437 641H461Q471 644 481 641H505Q515 644 525 641H549Q559 644 569 641H593Q603 644 613 641H637Q647 644 657 641H681Q691 644 701 641H725Q735 644 745 641H769Q779 644 789 641H813Q823 644 833 641H857Q867 644 877 641H901Q911 644 921 641H945Q955 644 965 641H989Q999 644 1009 641H1026" fill="none" stroke="#000" stroke-width="2.1"/><circle cx="31" cy="651" r="8.1" fill="none" stroke="#000" stroke-width="2"/><circle cx="75" cy="651" r="8.1" fill="none" stroke="#000" stroke-width="2"/><circle cx="119" cy="651" r="8.1" fill="none" stroke="#000" stroke-width="2"/><circle cx="163" cy="651" r="8.1" fill="none" stroke="#000" stroke-width="2"/><circle cx="207" cy="651" r="8.1" fill="none" stroke="#000" stroke-width="2"/><circle cx="251" cy="651" r="8.1" fill="none" stroke="#000" stroke-width="2"/><circle cx="295" cy="651" r="8.1" fill="none" stroke="#000" stroke-width="2"/><circle cx="339" cy="651" r="8.1" fill="none" stroke="#000" stroke-width="2"/><circle cx="383" cy="651" r="8.1" fill="none" stroke="#000" stroke-width="2"/><circle cx="427" cy="651" r="8.1" fill="none" stroke="#000" stroke-width="2"/><circle cx="471" cy="651" r="8.1" fill="none" stroke="#000" stroke-width="2"/><circle cx="515" cy="651" r="8.1" fill="none" stroke="#000" stroke-width="2"/><circle cx="559" cy="651" r="8.1" fill="none" stroke="#000" stroke-width="2"/><circle cx="603" cy="651" r="8.1" fill="none" stroke="#000" stroke-width="2"/><circle cx="647" cy="651" r="8.1" fill="none" stroke="#000" stroke-width="2"/><circle cx="691" cy="651" r="8.1" fill="none" stroke="#000" stroke-width="2"/><circle cx="735" cy="651" r="8.1" fill="none" stroke="#000" stroke-width="2"/><circle cx="779" cy="651" r="8.1" fill="none" stroke="#000" stroke-width="2"/><circle cx="823" cy="651" r="8.1" fill="none" stroke="#000" stroke-width="2"/><circle cx="867" cy="651" r="8.1" fill="none" stroke="#000" stroke-width="2"/><circle cx="911" cy="651" r="8.1" fill="none" stroke="#000" stroke-width="2"/><circle cx="955" cy="651" r="8.1" fill="none" stroke="#000" stroke-width="2"/><circle cx="999" cy="651" r="8.1" fill="none" stroke="#000" stroke-width="2"/><path d="M0 685H21Q31 688 41 685H65Q75 688 85 685H109Q119 688 129 685H153Q163 688 173 685H197Q207 688 217 685H241Q251 688 261 685H285Q295 688 305 685H329Q339 688 349 685H373Q383 688 393 685H417Q427 688 437 685H461Q471 688 481 685H505Q515 688 525 685H549Q559 688 569 685H593Q603 688 613 685H637Q647 688 657 685H681Q691 688 701 685H725Q735 688 745 685H769Q779 688 789 685H813Q823 688 833 685H857Q867 688 877 685H901Q911 688 921 685H945Q955 688 965 685H989Q999 688 1009 685H1026" fill="none" stroke="#000" stroke-width="2.1"/><circle cx="31" cy="695" r="8.1" fill="none" stroke="#000" stroke-width="2"/><circle cx="75" cy="695" r="8.1" fill="none" stroke="#000" stroke-width="2"/><circle cx="119" cy="695" r="8.1" fill="none" stroke="#000" stroke-width="2"/><circle cx="163" cy="695" r="8.1" fill="none" stroke="#000" stroke-width="2"/><circle cx="207" cy="695" r="8.1" fill="none" stroke="#000" stroke-width="2"/><circle cx="251" cy="695" r="8.1" fill="none" stroke="#000" stroke-width="2"/><circle cx="295" cy="695" r="8.1" fill="none" stroke="#000" stroke-width="2"/><circle cx="339" cy="695" r="8.1" fill="none" stroke="#000" stroke-width="2"/><circle cx="383" cy="695" r="8.1" fill="none" stroke="#000" stroke-width="2"/><circle cx="427" cy="695" r="8.1" fill="none" stroke="#000" stroke-width="2"/><circle cx="471" cy="695" r="8.1" fill="none" stroke="#000" stroke-width="2"/><circle cx="515" cy="695" r="8.1" fill="none" stroke="#000" stroke-width="2"/><circle cx="559" cy="695" r="8.1" fill="none" stroke="#000" stroke-width="2"/><circle cx="603" cy="695" r="8.1" fill="none" stroke="#000" stroke-width="2"/><circle cx="647" cy="695" r="8.1" fill="none" stroke="#000" stroke-width="2"/><circle cx="691" cy="695" r="8.1" fill="none" stroke="#000" stroke-width="2"/><circle cx="735" cy="695" r="8.1" fill="none" stroke="#000" stroke-width="2"/><circle cx="779" cy="695" r="8.1" fill="none" stroke="#000" stroke-width="2"/><circle cx="823" cy="695" r="8.1" fill="none" stroke="#000" stroke-width="2"/><circle cx="867" cy="695" r="8.1" fill="none" stroke="#000" stroke-width="2"/><circle cx="911" cy="695" r="8.1" fill="none" stroke="#000" stroke-width="2"/><circle cx="955" cy="695" r="8.1" fill="none" stroke="#000" stroke-width="2"/><circle cx="999" cy="695" r="8.1" fill="none" stroke="#000" stroke-width="2"/><path d="M0 729H21Q31 732 41 729H65Q75 732 85 729H109Q119 732 129 729H153Q163 732 173 729H197Q207 732 217 729H241Q251 732 261 729H285Q295 732 305 729H329Q339 732 349 729H373Q383 732 393 729H417Q427 732 437 729H461Q471 732 481 729H505Q515 732 525 729H549Q559 732 569 729H593Q603 732 613 729H637Q647 732 657 729H681Q691 732 701 729H725Q735 732 745 729H769Q779 732 789 729H813Q823 732 833 729H857Q867 732 877 729H901Q911 732 921 729H945Q955 732 965 729H989Q999 732 1009 729H1026" fill="none" stroke="#000" stroke-width="2.1"/><circle cx="31" cy="739" r="8.1" fill="none" stroke="#000" stroke-width="2"/><circle cx="75" cy="739" r="8.1" fill="none" stroke="#000" stroke-width="2"/><circle cx="119" cy="739" r="8.1" fill="none" stroke="#000" stroke-width="2"/><circle cx="163" cy="739" r="8.1" fill="none" stroke="#000" stroke-width="2"/><circle cx="207" cy="739" r="8.1" fill="none" stroke="#000" stroke-width="2"/><circle cx="251" cy="739" r="8.1" fill="none" stroke="#000" stroke-width="2"/><circle cx="295" cy="739" r="8.1" fill="none" stroke="#000" stroke-width="2"/><circle cx="339" cy="739" r="8.1" fill="none" stroke="#000" stroke-width="2"/><circle cx="383" cy="739" r="8.1" fill="none" stroke="#000" stroke-width="2"/><circle cx="427" cy="739" r="8.1" fill="none" stroke="#000" stroke-width="2"/><circle cx="471" cy="739" r="8.1" fill="none" stroke="#000" stroke-width="2"/><circle cx="515" cy="739" r="8.1" fill="none" stroke="#000" stroke-width="2"/><circle cx="559" cy="739" r="8.1" fill="none" stroke="#000" stroke-width="2"/><circle cx="603" cy="739" r="8.1" fill="none" stroke="#000" stroke-width="2"/><circle cx="647" cy="739" r="8.1" fill="none" stroke="#000" stroke-width="2"/><circle cx="691" cy="739" r="8.1" fill="none" stroke="#000" stroke-width="2"/><circle cx="735" cy="739" r="8.1" fill="none" stroke="#000" stroke-width="2"/><circle cx="779" cy="739" r="8.1" fill="none" stroke="#000" stroke-width="2"/><circle cx="823" cy="739" r="8.1" fill="none" stroke="#000" stroke-width="2"/><circle cx="867" cy="739" r="8.1" fill="none" stroke="#000" stroke-width="2"/><circle cx="911" cy="739" r="8.1" fill="none" stroke="#000" stroke-width="2"/><circle cx="955" cy="739" r="8.1" fill="none" stroke="#000" stroke-width="2"/><circle cx="999" cy="739" r="8.1" fill="none" stroke="#000" stroke-width="2"/><polyline points="280,0 280,92 324,92 324,356 368,356 368,532 412,532 412,708 456,708 456,742" fill="none" stroke="#0a0a8a" stroke-width="4"/><polyline points="280,0 280,92 324,92 324,356 368,356 368,532 412,532 412,708 456,708 456,742" fill="none" stroke="#ffffff" stroke-width="1.6" stroke-dasharray="4 2"/><g transform="translate(392,377)"><rect x="-20" y="-15" width="40" height="36" fill="#fff"/><path d="M-9 -11L-15 0L-9 11" fill="none" stroke="#0a8a1a" stroke-width="4.5"/><path d="M9 -11L15 0L9 11" fill="none" stroke="#0a8a1a" stroke-width="4.5"/><text x="0" y="6" font-size="17" font-family="Liberation Sans" fill="#2a8a3a" text-anchor="middle">?</text></g><g transform="translate(436,553)"><rect x="-20" y="-15" width="40" height="36" fill="#fff"/><path d="M-9 -11L-15 0L-9 11" fill="none" stroke="#0a8a1a" stroke-width="4.5"/><path d="M9 -11L15 0L9 11" fill="none" stroke="#0a8a1a" stroke-width="4.5"/><text x="0" y="6" font-size="17" font-family="Liberation Sans" fill="#2a8a3a" text-anchor="middle">?</text></g><g transform="translate(480,729)"><rect x="-20" y="-15" width="40" height="36" fill="#fff"/><path d="M-9 -11L-15 0L-9 11" fill="none" stroke="#0a8a1a" stroke-width="4.5"/><path d="M9 -11L15 0L9 11" fill="none" stroke="#0a8a1a" stroke-width="4.5"/><text x="0" y="6" font-size="17" font-family="Liberation Sans" fill="#2a8a3a" text-anchor="middle">?</text></g></svg>
<div style="position:absolute;left:1866px;top:248px;width:18px;height:742px;background:#efebeb"></div>
<svg style="position:absolute;left:1866px;top:244px;" width="18" height="746" viewBox="0 0 18 746"><path d="M4 17L9 12L14 17" fill="none" stroke="#444" stroke-width="3"/><path d="M9 18V736" stroke="#444" stroke-width="2"/><path d="M9 739L4 734M9 739L14 734" fill="none" stroke="#444" stroke-width="3"/><rect x="4.5" y="202" width="9" height="47" rx="3" fill="#4a4a4a"/></svg>
<div style="position:absolute;left:1866px;top:208px;width:18px;height:37px;background:#3f3f3f"></div>
<svg style="position:absolute;left:1870px;top:216px;" width="10" height="14" viewBox="0 0 10 14"><path d="M1 0L9 7L1 14L4 7Z" fill="#eee"/></svg>
<div style="position:absolute;left:810px;top:990px;width:1074px;height:18px;background:#efebeb"></div>
<svg style="position:absolute;left:840px;top:990px;" width="1030" height="18" viewBox="0 0 1030 18"><path d="M14 4L9 9L14 14" fill="none" stroke="#444" stroke-width="3"/><path d="M12 9H1012" stroke="#444" stroke-width="2"/><path d="M1010 4L1015 9L1010 14" fill="none" stroke="#444" stroke-width="3"/><path d="M62 4H152L157 9L152 14H62L57 9Z" fill="#4a4a4a"/></svg>
<svg style="position:absolute;left:814px;top:992px;" width="22" height="14" viewBox="0 0 22 14"><path d="M7 2L3 7L7 12M15 2L19 7L15 12" fill="none" stroke="#fff" stroke-width="3"/></svg>
<div style="position:absolute;left:222px;top:990px;width:580px;height:18px;background:#efebeb"></div>
<svg style="position:absolute;left:226px;top:992px;" width="60" height="14" viewBox="0 0 60 14"><path d="M9 2L5 7L9 12" fill="none" stroke="#fff" stroke-width="3"/><path d="M41 2L45 7L41 12" fill="none" stroke="#fff" stroke-width="3"/><path d="M51 0V18" stroke="#333" stroke-width="1.5"/><path d="M59 2L55 7L59 12" fill="none" stroke="#fff" stroke-width="3"/></svg>
<svg style="position:absolute;left:786px;top:992px;" width="12" height="14" viewBox="0 0 12 14"><path d="M3 2L7 7L3 12" fill="none" stroke="#fff" stroke-width="3"/></svg>
<div style="position:absolute;left:221px;top:1008px;width:582px;height:23px;background:#f0f0f0"></div>
<div style="position:absolute;left:221px;top:1031px;width:582px;height:1px;background:#d4d4d4"></div>
<div style="position:absolute;left:221px;top:208px;width:1px;height:823px;background:#d4d4d4"></div>
<div style="position:absolute;left:802px;top:208px;width:1px;height:823px;background:#d4d4d4"></div>
<div class="t" style="left:229px;top:1013px;font-size:12px;color:#222;">&gt; 0</div>
<div class="t" style="left:264px;top:1012px;font-size:12px;color:#222;">^ 147</div>
<svg style="position:absolute;left:316px;top:1012px;" width="17" height="17" viewBox="0 0 17 17"><path d="M3 2H10L14 8V14H1V8Z" fill="#555"/><rect x="9" y="9" width="8" height="8" fill="#fff" stroke="#333"/><path d="M11 11L15 15M15 11L11 15" stroke="#333" stroke-width="1.3"/></svg>
<div class="t" style="left:332px;top:1014px;font-size:12.5px;color:#111;">No Color</div>
<svg style="position:absolute;left:453px;top:1011px;" width="18" height="18" viewBox="0 0 18 18"><path d="M2 1V15H5V5Q5 1 3 1Z" fill="#333"/><rect x="8" y="9" width="9" height="9" fill="#222"/><path d="M10 11L15 16M15 11L10 16" stroke="#fff" stroke-width="1.5"/></svg>
<div class="t" style="left:471px;top:1014px;font-size:12px;color:#111;">No needle act</div>
<div style="position:absolute;left:551px;top:1010px;width:62px;height:21px;background:#fff;border:1px solid #cfcfcf;box-sizing:border-box"></div>
<div style="position:absolute;left:552px;top:1011px;width:20px;height:19px;background:#3a8ee0"></div>
<svg style="position:absolute;left:554px;top:1013px;" width="16" height="14" viewBox="0 0 16 14"><path d="M4 1H12L15 13H1Z" fill="#fff"/></svg>
<svg style="position:absolute;left:574px;top:1012px;" width="17" height="17" viewBox="0 0 17 17"><path d="M6 9V4Q6 1 8.5 1Q11 1 11 4V9" fill="none" stroke="#333" stroke-width="1.4"/><rect x="1" y="10" width="15" height="5" fill="none" stroke="#333"/><path d="M3 13V15M6 13V15M9 13V15M12 13V15" stroke="#333"/></svg>
<svg style="position:absolute;left:594px;top:1012px;" width="17" height="17" viewBox="0 0 17 17"><rect x="1" y="1" width="15" height="15" fill="#333"/><rect x="6" y="4" width="4" height="3" fill="#fff"/><rect x="3" y="9" width="4" height="3" fill="#fff"/><rect x="9" y="9" width="5" height="3" fill="#fff"/></svg>
<div style="position:absolute;left:619px;top:1010px;width:62px;height:21px;background:#fff;border:1px solid #cfcfcf;box-sizing:border-box"></div>
<div style="position:absolute;left:620px;top:1011px;width:20px;height:19px;background:#3a8ee0"></div>
<svg style="position:absolute;left:622px;top:1012px;" width="16" height="17" viewBox="0 0 16 17"><path d="M2 2H8V8H14V14" fill="none" stroke="#fff" stroke-width="1.5"/><path d="M2 16V10" stroke="#fff" stroke-dasharray="1 1"/></svg>
<div style="position:absolute;left:641px;top:1012px;width:18px;height:17px;background:linear-gradient(90deg,#a0a0a0 0,#a0a0a0 50%,#cfcfcf 50%)"></div>
<svg style="position:absolute;left:661px;top:1012px;" width="18" height="17" viewBox="0 0 18 17"><rect x="1" y="1" width="15" height="15" fill="none" stroke="#333" stroke-width="1.3"/><path d="M5 12L14 3" stroke="#333" stroke-width="2"/></svg>
<div style="position:absolute;left:685px;top:1010px;width:23px;height:21px;background:#fff;border:1px solid #cfcfcf;box-sizing:border-box"></div>
<svg style="position:absolute;left:688px;top:1012px;" width="17" height="17" viewBox="0 0 17 17"><path d="M4 13V8Q4 3 8.5 3Q13 3 13 8V13" fill="none" stroke="#333" stroke-width="1.4"/><path d="M1 5L3 7M16 5L14 7" stroke="#333" stroke-width="1.4"/></svg>
<div style="position:absolute;left:713px;top:1010px;width:42px;height:21px;background:#fff;border:1px solid #cfcfcf;box-sizing:border-box"></div>
<svg style="position:absolute;left:716px;top:1012px;" width="17" height="17" viewBox="0 0 17 17"><path d="M5 1V16M11 1V16M1 5H16M1 11H16" stroke="#333" stroke-width="2"/></svg>
<svg style="position:absolute;left:735px;top:1012px;" width="18" height="17" viewBox="0 0 18 17"><rect x="1" y="2" width="16" height="13" fill="none" stroke="#333" stroke-width="1.5"/><path d="M4 12L12 5" stroke="#333" stroke-width="2.2"/></svg>
<div style="position:absolute;left:759px;top:1010px;width:42px;height:21px;background:#3a8ee0;border:1px solid #2a70c0;box-sizing:border-box"></div>
<svg style="position:absolute;left:762px;top:1013px;" width="17" height="15" viewBox="0 0 17 15"><path d="M1 2V13M16 2V13M1 7.5H16" stroke="#fff" stroke-width="1.8"/></svg>
<svg style="position:absolute;left:781px;top:1012px;" width="17" height="17" viewBox="0 0 17 17"><path d="M8.5 1V16M1 8.5H16" stroke="#fff" stroke-width="1.8"/><path d="M8.5 0L5.5 3.5H11.5ZM8.5 17L5.5 13.5H11.5ZM0 8.5L3.5 5.5V11.5ZM17 8.5L13.5 5.5V11.5Z" fill="#fff"/></svg>
<div style="position:absolute;left:809px;top:1008px;width:1076px;height:23px;background:#f0f0f0"></div>
<div class="t" style="left:819px;top:1013px;font-size:12px;color:#222;">&gt; 18</div>
<div class="t" style="left:851px;top:1012px;font-size:12px;color:#222;">^ 197</div>
<svg style="position:absolute;left:903px;top:1011px;" width="17" height="17" viewBox="0 0 17 17"><path d="M3 4H11L14 16H1Z" fill="#fff" stroke="#333"/><circle cx="12" cy="4" r="3.5" fill="#333"/><path d="M10.5 4L12 5.5L14 2.5" fill="none" stroke="#fff"/></svg>
<div class="t" style="left:921px;top:1014px;font-size:12.5px;color:#111;">1</div>
<svg style="position:absolute;left:1041px;top:1016px;" width="17" height="10" viewBox="0 0 17 10"><path d="M0 2H17" stroke="#333" stroke-width="1.2"/><circle cx="5" cy="6" r="2.5" fill="none" stroke="#333"/><path d="M10 4H16L13 9Z" fill="#c81818"/></svg>
<div class="t" style="left:1059px;top:1014px;font-size:12.5px;color:#111;letter-spacing:-0.2px">Front Stitch with Transfer</div>
<div style="position:absolute;left:1633px;top:1010px;width:62px;height:21px;background:#fff;border:1px solid #cfcfcf;box-sizing:border-box"></div>
<div style="position:absolute;left:1634px;top:1011px;width:20px;height:19px;background:#3a8ee0"></div>
<svg style="position:absolute;left:1636px;top:1013px;" width="16" height="14" viewBox="0 0 16 14"><path d="M4 1H12L15 13H1Z" fill="#fff"/></svg>
<svg style="position:absolute;left:1656px;top:1012px;" width="17" height="17" viewBox="0 0 17 17"><path d="M6 9V4Q6 1 8.5 1Q11 1 11 4V9" fill="none" stroke="#333" stroke-width="1.4"/><rect x="1" y="10" width="15" height="5" fill="none" stroke="#333"/><path d="M3 13V15M6 13V15M9 13V15M12 13V15" stroke="#333"/></svg>
<svg style="position:absolute;left:1676px;top:1012px;" width="17" height="17" viewBox="0 0 17 17"><rect x="1" y="1" width="15" height="15" fill="#333"/><rect x="6" y="4" width="4" height="3" fill="#fff"/><rect x="3" y="9" width="4" height="3" fill="#fff"/><rect x="9" y="9" width="5" height="3" fill="#fff"/></svg>
<div style="position:absolute;left:1701px;top:1010px;width:62px;height:21px;background:#fff;border:1px solid #cfcfcf;box-sizing:border-box"></div>
<div style="position:absolute;left:1702px;top:1011px;width:20px;height:19px;background:#3a8ee0"></div>
<svg style="position:absolute;left:1704px;top:1012px;" width="16" height="17" viewBox="0 0 16 17"><path d="M2 2H8V8H14V14" fill="none" stroke="#fff" stroke-width="1.5"/><path d="M2 16V10" stroke="#fff" stroke-dasharray="1 1"/></svg>
<div style="position:absolute;left:1723px;top:1012px;width:18px;height:17px;background:linear-gradient(90deg,#a0a0a0 0,#a0a0a0 50%,#cfcfcf 50%)"></div>
<svg style="position:absolute;left:1743px;top:1012px;" width="18" height="17" viewBox="0 0 18 17"><rect x="1" y="1" width="15" height="15" fill="none" stroke="#333" stroke-width="1.3"/><path d="M5 12L14 3" stroke="#333" stroke-width="2"/></svg>
<div style="position:absolute;left:1767px;top:1010px;width:23px;height:21px;background:#fff;border:1px solid #cfcfcf;box-sizing:border-box"></div>
<svg style="position:absolute;left:1770px;top:1012px;" width="17" height="17" viewBox="0 0 17 17"><path d="M4 13V8Q4 3 8.5 3Q13 3 13 8V13" fill="none" stroke="#333" stroke-width="1.4"/><path d="M1 5L3 7M16 5L14 7" stroke="#333" stroke-width="1.4"/></svg>
<div style="position:absolute;left:1795px;top:1010px;width:42px;height:21px;background:#fff;border:1px solid #cfcfcf;box-sizing:border-box"></div>
<svg style="position:absolute;left:1798px;top:1012px;" width="17" height="17" viewBox="0 0 17 17"><path d="M5 1V16M11 1V16M1 5H16M1 11H16" stroke="#333" stroke-width="2"/></svg>
<svg style="position:absolute;left:1817px;top:1012px;" width="18" height="17" viewBox="0 0 18 17"><rect x="1" y="2" width="16" height="13" fill="none" stroke="#333" stroke-width="1.5"/><path d="M4 12L12 5" stroke="#333" stroke-width="2.2"/></svg>
<div style="position:absolute;left:1841px;top:1010px;width:42px;height:21px;background:#3a8ee0;border:1px solid #2a70c0;box-sizing:border-box"></div>
<svg style="position:absolute;left:1844px;top:1013px;" width="17" height="15" viewBox="0 0 17 15"><path d="M1 2V13M16 2V13M1 7.5H16" stroke="#fff" stroke-width="1.8"/></svg>
<svg style="position:absolute;left:1863px;top:1012px;" width="17" height="17" viewBox="0 0 17 17"><path d="M8.5 1V16M1 8.5H16" stroke="#fff" stroke-width="1.8"/><path d="M8.5 0L5.5 3.5H11.5ZM8.5 17L5.5 13.5H11.5ZM0 8.5L3.5 5.5V11.5ZM17 8.5L13.5 5.5V11.5Z" fill="#fff"/></svg>
<div style="position:absolute;left:1911px;top:183px;width:6px;height:100px;background:#c8c8cc"></div>
<div style="position:absolute;left:1911px;top:295px;width:6px;height:96px;background:#c8c8cc"></div>
<div style="position:absolute;left:1911px;top:402px;width:6px;height:68px;background:#c8c8cc"></div>
<svg style="position:absolute;left:1893px;top:184px;" width="16" height="18" viewBox="0 0 16 18"><path d="M6 1H14V15H10" fill="none" stroke="#333" stroke-width="1.6"/><circle cx="5" cy="12" r="3.2" fill="none" stroke="#333" stroke-width="1.6"/></svg>
<div class="t" style="left:1859px;top:236px;width:80px;height:14px;line-height:14px;font-size:12px;color:#111;transform:rotate(90deg);text-align:center">Needle Actions</div>
<svg style="position:absolute;left:1893px;top:293px;" width="16" height="17" viewBox="0 0 16 17"><path d="M3 2H13L15 15H1Z" fill="none" stroke="#333" stroke-width="1.2"/><path d="M3 2Q8 5 13 2" fill="none" stroke="#333"/></svg>
<div class="t" style="left:1859px;top:345px;width:80px;height:14px;line-height:14px;font-size:12px;color:#111;transform:rotate(90deg);text-align:center">Pattern Colors</div>
<svg style="position:absolute;left:1893px;top:403px;" width="16" height="16" viewBox="0 0 16 16"><rect x="1" y="1" width="14" height="14" fill="none" stroke="#333" stroke-width="1.5"/><rect x="10" y="1" width="5" height="14" fill="#333"/></svg>
<div class="t" style="left:1859px;top:439px;width:80px;height:14px;line-height:14px;font-size:12px;color:#111;transform:rotate(90deg);text-align:center">Overview</div>
<div style="position:absolute;left:733px;top:268px;width:43px;height:50px;background:#5c636b;border-radius:3px;box-shadow:0 0 8px rgba(0,0,0,0.45)"></div>
<svg style="position:absolute;left:736px;top:285px;" width="4" height="18" viewBox="0 0 4 18"><path d="M0.5 0V18M2 0V18M3.5 0V18" stroke="#9aa0a6" stroke-width="0.8"/></svg>
<div style="position:absolute;left:749px;top:272px;width:22px;height:43px;border:1px solid #7a8088;box-sizing:border-box;border-radius:2px"></div>
<svg style="position:absolute;left:753px;top:277px;" width="14" height="14" viewBox="0 0 14 14"><rect x="1" y="1" width="12" height="12" fill="none" stroke="#ffd800" stroke-width="2" stroke-dasharray="2 1.5"/></svg>
<div style="position:absolute;left:758px;top:305px;width:4px;height:1px;background:#fff"></div>
<div style="position:absolute;left:697px;top:328px;width:103px;height:71px;background:#5c636b;border-radius:3px;box-shadow:0 0 8px rgba(0,0,0,0.45)"></div>
<svg style="position:absolute;left:702px;top:355px;" width="4" height="22" viewBox="0 0 4 22"><path d="M0.5 0V22M2 0V22M3.5 0V22" stroke="#9aa0a6" stroke-width="0.8"/></svg>
<div style="position:absolute;left:714px;top:332px;width:82px;height:30px;border:1px solid #e8e8e8;box-sizing:border-box;border-radius:2px"></div>
<svg style="position:absolute;left:720px;top:338px;" width="18" height="18" viewBox="0 0 18 18"><path d="M2 15L7 10L9 11L14 4" fill="none" stroke="#fff" stroke-width="1.2" stroke-dasharray="2 1"/><circle cx="2" cy="15" r="1.6" fill="none" stroke="#fff"/><circle cx="14" cy="3" r="1.6" fill="none" stroke="#fff"/></svg>
<svg style="position:absolute;left:751px;top:338px;" width="17" height="17" viewBox="0 0 17 17"><rect x="1" y="1" width="15" height="4" fill="#e6e6e6"/><rect x="1" y="6" width="4" height="10" fill="#e6e6e6"/><rect x="7" y="7" width="4" height="3" fill="#e6e6e6"/><rect x="12" y="7" width="4" height="3" fill="#e6e6e6"/><rect x="7" y="12" width="4" height="4" fill="#e6e6e6"/><rect x="12" y="12" width="4" height="4" fill="#e6e6e6"/></svg>
<svg style="position:absolute;left:775px;top:341px;" width="16" height="11" viewBox="0 0 16 11"><path d="M1 5.5Q8 -1 15 5.5Q8 12 1 5.5Z" fill="#fff"/><circle cx="8" cy="5.5" r="2.3" fill="#5c636b"/></svg>
<svg style="position:absolute;left:719px;top:371px;" width="17" height="16" viewBox="0 0 17 16"><rect x="1" y="1" width="15" height="14" fill="#d0d0d0"/><path d="M2 6H6M7.5 6H10M11.5 6H15M2 10H6M7.5 10H10M11.5 10H15" stroke="#5c636b" stroke-width="1.4"/></svg>
<svg style="position:absolute;left:775px;top:375px;" width="16" height="11" viewBox="0 0 16 11"><path d="M1 5.5Q8 -1 15 5.5Q8 12 1 5.5Z" fill="#fff"/><circle cx="8" cy="5.5" r="2.3" fill="#5c636b"/></svg>
<div style="position:absolute;left:761px;top:407px;width:38px;height:38px;background:#5c636b;border-radius:50%;border:1px solid #cfd2d6;box-sizing:border-box;box-shadow:0 0 6px rgba(0,0,0,0.35)"></div>
<svg style="position:absolute;left:766px;top:412px;" width="28" height="28" viewBox="0 0 28 28"><path d="M10 6L14 2L18 6M10 22L14 26L18 22M6 10L2 14L6 18M22 10L26 14L22 18" fill="none" stroke="#fff" stroke-width="1.6"/></svg>
<div style="position:absolute;left:1815px;top:268px;width:43px;height:50px;background:#5c636b;border-radius:3px;box-shadow:0 0 8px rgba(0,0,0,0.45)"></div>
<svg style="position:absolute;left:1818px;top:285px;" width="4" height="18" viewBox="0 0 4 18"><path d="M0.5 0V18M2 0V18M3.5 0V18" stroke="#9aa0a6" stroke-width="0.8"/></svg>
<div style="position:absolute;left:1831px;top:272px;width:22px;height:43px;border:1px solid #7a8088;box-sizing:border-box;border-radius:2px"></div>
<svg style="position:absolute;left:1835px;top:277px;" width="14" height="14" viewBox="0 0 14 14"><rect x="1" y="1" width="12" height="12" fill="none" stroke="#ffd800" stroke-width="2" stroke-dasharray="2 1.5"/></svg>
<div style="position:absolute;left:1840px;top:305px;width:4px;height:1px;background:#fff"></div>
<div style="position:absolute;left:1755px;top:328px;width:103px;height:71px;background:#5c636b;border-radius:3px;box-shadow:0 0 8px rgba(0,0,0,0.45)"></div>
<svg style="position:absolute;left:1760px;top:355px;" width="4" height="22" viewBox="0 0 4 22"><path d="M0.5 0V22M2 0V22M3.5 0V22" stroke="#9aa0a6" stroke-width="0.8"/></svg>
<div style="position:absolute;left:1772px;top:332px;width:82px;height:30px;border:1px solid #e8e8e8;box-sizing:border-box;border-radius:2px"></div>
<svg style="position:absolute;left:1778px;top:338px;" width="18" height="18" viewBox="0 0 18 18"><path d="M2 15L7 10L9 11L14 4" fill="none" stroke="#fff" stroke-width="1.2" stroke-dasharray="2 1"/><circle cx="2" cy="15" r="1.6" fill="none" stroke="#fff"/><circle cx="14" cy="3" r="1.6" fill="none" stroke="#fff"/></svg>
<svg style="position:absolute;left:1809px;top:338px;" width="17" height="17" viewBox="0 0 17 17"><rect x="1" y="1" width="15" height="4" fill="#e6e6e6"/><rect x="1" y="6" width="4" height="10" fill="#e6e6e6"/><rect x="7" y="7" width="4" height="3" fill="#e6e6e6"/><rect x="12" y="7" width="4" height="3" fill="#e6e6e6"/><rect x="7" y="12" width="4" height="4" fill="#e6e6e6"/><rect x="12" y="12" width="4" height="4" fill="#e6e6e6"/></svg>
<svg style="position:absolute;left:1833px;top:341px;" width="16" height="11" viewBox="0 0 16 11"><path d="M1 5.5Q8 -1 15 5.5Q8 12 1 5.5Z" fill="#fff"/><circle cx="8" cy="5.5" r="2.3" fill="#5c636b"/></svg>
<svg style="position:absolute;left:1777px;top:371px;" width="17" height="16" viewBox="0 0 17 16"><rect x="1" y="1" width="15" height="14" fill="#d0d0d0"/><path d="M2 6H6M7.5 6H10M11.5 6H15M2 10H6M7.5 10H10M11.5 10H15" stroke="#5c636b" stroke-width="1.4"/></svg>
<svg style="position:absolute;left:1833px;top:375px;" width="16" height="11" viewBox="0 0 16 11"><path d="M1 5.5Q8 -1 15 5.5Q8 12 1 5.5Z" fill="#fff"/><circle cx="8" cy="5.5" r="2.3" fill="#5c636b"/></svg>
<div style="position:absolute;left:1819px;top:407px;width:38px;height:38px;background:#5c636b;border-radius:50%;border:1px solid #cfd2d6;box-sizing:border-box;box-shadow:0 0 6px rgba(0,0,0,0.35)"></div>
<svg style="position:absolute;left:1824px;top:412px;" width="28" height="28" viewBox="0 0 28 28"><path d="M10 6L14 2L18 6M10 22L14 26L18 22M6 10L2 14L6 18M22 10L26 14L22 18" fill="none" stroke="#fff" stroke-width="1.6"/></svg>
<div style="position:absolute;left:1123px;top:314px;width:251px;height:117px;background:#f7f7f7;border:1px solid #cfcfcf;box-sizing:border-box;box-shadow:2px 3px 6px rgba(0,0,0,0.3)"></div>
<div style="position:absolute;left:1125px;top:343px;width:247px;height:1px;background:#d8d8d8"></div>
<div style="position:absolute;left:1125px;top:372px;width:247px;height:1px;background:#d8d8d8"></div>
<div style="position:absolute;left:1125px;top:401px;width:247px;height:1px;background:#d8d8d8"></div>
<div style="position:absolute;left:1125px;top:403px;width:247px;height:25px;background:#c4c5c9"></div>
<svg style="position:absolute;left:1135px;top:321px;" width="12" height="16" viewBox="0 0 12 16"><path d="M1 15H3Q5 15 5.5 10L6.5 5Q7 1 9 1H11" fill="none" stroke="#333" stroke-width="1.1"/></svg>
<div class="t" style="left:1157px;top:324px;font-size:12px;color:#111;letter-spacing:-0.1px">Adjust Stepping Kind...</div>
<div class="t" style="left:1157px;top:353px;font-size:12px;color:#111;letter-spacing:-0.1px">Insert Shape Line</div>
<div class="t" style="left:1313px;top:353px;font-size:12px;color:#333;">Insert</div>
<svg style="position:absolute;left:1134px;top:382px;" width="11" height="11" viewBox="0 0 11 11"><path d="M1 1L10 10M10 1L1 10" stroke="#d42a2a" stroke-width="2"/></svg>
<div class="t" style="left:1157px;top:382px;font-size:12px;color:#111;">Delete</div>
<div class="t" style="left:1313px;top:382px;font-size:12px;color:#333;">Del</div>
<svg style="position:absolute;left:1132px;top:409px;" width="15" height="15" viewBox="0 0 15 15"><path d="M5 9L11 3L13 5L7 11Z" fill="#444"/><path d="M1 14H14" stroke="#444"/><rect x="0.5" y="12.5" width="2" height="2" fill="#fff" stroke="#444"/><rect x="12.5" y="12.5" width="2" height="2" fill="#fff" stroke="#444"/></svg>
<div class="t" style="left:1157px;top:411px;font-size:12px;color:#111;letter-spacing:-0.1px">Line Properties</div></div></body></html>
